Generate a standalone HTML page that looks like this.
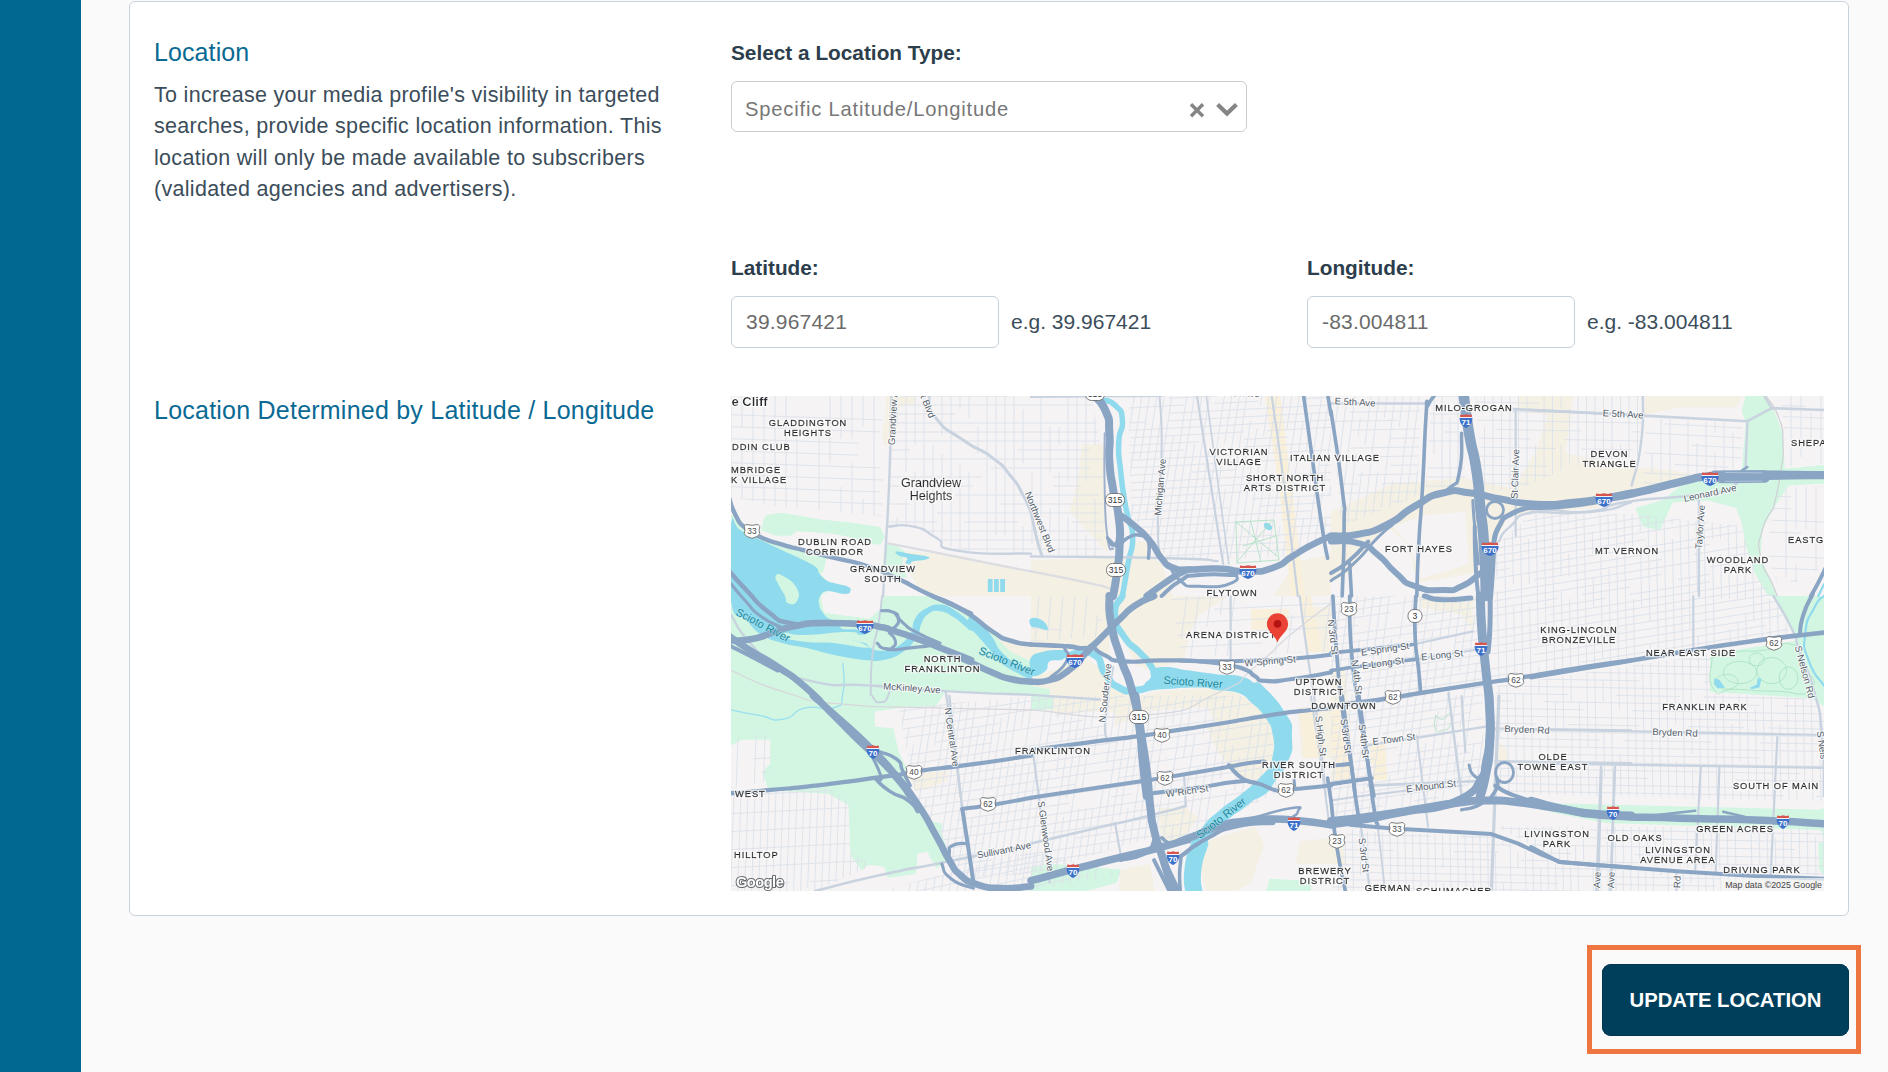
<!DOCTYPE html>
<html lang="en">
<head>
<meta charset="utf-8">
<title>Location</title>
<style>
*{box-sizing:border-box}
html,body{margin:0;padding:0}
body{width:1888px;height:1072px;overflow:hidden;background:#fafafa;font-family:"Liberation Sans",sans-serif;color:#3b4d5a;position:relative}
.sidebar{position:absolute;left:0;top:0;width:81px;height:1072px;background:#006891}
.card{position:absolute;left:129px;top:1px;width:1720px;height:915px;background:#fff;border:1px solid #c9d2dc;border-radius:6px}
h2{position:absolute;margin:0;font-weight:400;font-size:25px;color:#0a6a93;letter-spacing:.1px;white-space:nowrap;line-height:30px}
.h-loc{left:154px;top:37px}
.h-det{left:154px;top:395px;letter-spacing:.23px}
p.desc{position:absolute;left:154px;top:80px;width:540px;margin:0;font-size:21.5px;letter-spacing:.3px;line-height:31.3px;color:#3b4d5a}
label{position:absolute;font-weight:700;font-size:20.8px;color:#2c3e4c;white-space:nowrap;line-height:26px}
.select{position:absolute;left:731px;top:81px;width:516px;height:51px;border:1px solid #ccc;border-radius:6px;background:#fff}
.select span{position:absolute;left:13px;top:12px;font-size:20.2px;letter-spacing:.8px;color:#777;line-height:30px;white-space:nowrap}
.inp{position:absolute;width:268px;height:52px;border:1px solid #c6cfda;border-radius:6px;background:#fff}
.inp span{position:absolute;left:14px;top:10px;font-size:21px;letter-spacing:.2px;color:#6b6b6b;line-height:30px}
.eg{position:absolute;font-size:21px;letter-spacing:0;color:#3b4d5a;line-height:30px;white-space:nowrap}
.hl{position:absolute;left:1587px;top:945px;width:274px;height:109px;border:5px solid #ee7440}
.btn{position:absolute;left:1602px;top:964px;width:247px;height:72px;border-radius:9px;background:#003f5c;color:#fff;font-weight:700;font-size:20.3px;text-align:center;line-height:72px;box-shadow:inset 0 0 0 1px #00364f}
#map{position:absolute;left:731px;top:396px;width:1093px;height:495px;overflow:hidden;background:#f2f1f4}
</style>
</head>
<body>
<div class="sidebar"></div>
<div class="card"></div>
<h2 class="h-loc">Location</h2>
<p class="desc">To increase your media profile's visibility in targeted searches, provide specific location information. This location will only be made available to subscribers (validated agencies and advertisers).</p>
<label style="left:731px;top:40px">Select a Location Type:</label>
<div class="select"><span>Specific Latitude/Longitude</span>
<svg style="position:absolute;left:455px;top:19px" width="20" height="18" viewBox="0 0 20 18"><path d="M4 3.2 L16 15.2 M16 3.2 L4 15.2" stroke="#858585" stroke-width="3.4" fill="none"/></svg>
<svg style="position:absolute;left:482px;top:19px" width="26" height="16" viewBox="0 0 26 16"><path d="M3.6 3.4 L13 12.6 L22.4 3.4" stroke="#858585" stroke-width="4.2" fill="none" stroke-linejoin="miter"/></svg>
</div>
<label style="left:731px;top:255px">Latitude:</label>
<div class="inp" style="left:731px;top:296px"><span>39.967421</span></div>
<div class="eg" style="left:1011px;top:307px">e.g. 39.967421</div>
<label style="left:1307px;top:255px">Longitude:</label>
<div class="inp" style="left:1307px;top:296px"><span>-83.004811</span></div>
<div class="eg" style="left:1587px;top:307px">e.g. -83.004811</div>
<h2 class="h-det">Location Determined by Latitude / Longitude</h2>
<div id="map">
<svg width="1093" height="495" viewBox="0 0 1093 495" style="display:block;font-family:'Liberation Sans',sans-serif">
<rect width="1093" height="495" fill="#f5f3f4"/>
<path fill="#f4f0e4" d="M154.9 0.0 L184.7 0.0 L184.7 7.5 L167.9 11.2 L164.2 46.6 L153.0 50.4 L151.1 37.3 L154.9 18.7ZM173.5 154.9 L233.2 160.4 L300.0 177.2 L300.0 200.0 L205.2 200.0 L186.6 190.3 L173.5 167.9ZM350.4 48.5 L372.8 48.5 L374.6 93.3 L376.5 156.7 L339.2 115.7 L348.5 74.6ZM300.0 164.2 L374.6 162.3 L397.0 162.3 L419.4 160.4 L430.6 167.9 L441.8 200.0 L300.0 200.0ZM402.6 145.5 L419.4 145.5 L419.4 162.3 L397.0 162.3ZM564.9 166.0 L600.0 158.6 L600.0 200.0 L542.5 200.0ZM600.0 115.7 L661.6 87.7 L730.6 82.1 L786.6 93.3 L790.3 78.4 L805.2 56.0 L816.4 18.7 L786.6 14.9 L786.6 0.0 L842.5 0.0 L833.2 65.3 L900.0 69.0 L900.0 93.3 L805.2 115.7 L777.2 121.3 L764.2 145.5 L741.8 177.2 L685.8 186.6 L678.4 149.3 L656.0 130.6 L618.7 177.2 L600.0 186.6ZM816.8 0.0 L842.9 0.0 L837.3 28.0 L828.0 56.0 L904.5 70.9 L941.8 74.6 L967.9 80.2 L911.9 93.3 L865.3 111.9 L800.0 115.7 L800.0 70.9 L811.2 63.4 L818.7 28.0ZM913.8 0.0 L1010.8 0.0 L1005.2 11.2 L949.3 11.2 L913.8 18.7ZM300.0 200.0 L497.8 200.0 L467.9 218.7 L458.6 237.3 L453.0 263.4 L421.3 274.6 L404.5 269.0 L389.6 237.3 L382.1 218.7 L387.7 200.0ZM300.0 200.0 L378.4 200.0 L378.4 261.6 L361.6 256.0 L337.3 254.1 L300.0 261.6ZM300.0 282.1 L356.0 261.6 L370.9 274.6 L382.1 289.6 L397.0 298.9 L404.5 298.9 L404.5 315.7 L318.7 315.7 L318.7 293.3 L300.0 289.6ZM404.5 300.7 L430.6 295.1 L467.9 292.4 L497.8 293.3 L520.1 304.5 L535.1 319.4 L542.5 338.1 L542.5 360.4 L533.2 377.2 L505.2 367.9 L486.6 330.6 L475.4 310.1 L411.9 315.7 L384.0 330.6 L384.0 304.5ZM520.1 213.1 L557.5 213.1 L557.5 233.6 L520.1 233.6ZM572.4 211.2 L600.0 211.2 L600.0 256.0 L574.3 256.0ZM566.8 311.9 L600.0 311.9 L600.0 362.3 L570.5 362.3ZM600.0 274.6 L614.9 274.6 L622.4 386.6 L600.0 386.6ZM637.3 349.3 L652.2 349.3 L654.1 367.9 L639.2 367.9ZM687.7 200.0 L741.8 200.0 L741.8 233.6 L730.6 218.7 L689.6 211.2ZM764.2 345.5 L773.5 349.3 L779.1 367.9 L767.9 367.9ZM177.2 378.4 L216.4 374.6 L216.4 384.0 L201.5 391.4 L184.7 395.1ZM324.3 300.0 L514.6 300.0 L514.6 318.7 L486.6 324.3 L475.4 311.2 L411.9 311.2 L324.3 318.7ZM475.4 329.9 L540.7 320.5 L548.1 346.6 L538.8 370.9 L520.1 389.6 L497.8 369.0 L486.6 356.0ZM426.9 411.9 L454.9 411.9 L467.9 421.3 L449.3 445.5 L430.6 445.5 L428.7 430.6ZM475.4 445.5 L523.9 430.6 L533.2 449.3 L520.1 486.6 L505.2 495.0 L475.4 495.0 L467.9 467.9ZM566.8 311.2 L600.0 311.2 L600.0 361.6 L570.5 361.6ZM568.7 445.5 L600.0 441.8 L600.0 467.9 L564.9 467.9ZM389.6 473.5 L419.4 467.9 L423.1 495.0 L387.7 495.0ZM641.0 346.6 L654.1 346.6 L656.0 384.0 L642.9 384.0ZM600.0 318.7 L609.3 318.7 L611.2 356.0 L600.0 356.0ZM600.0 449.3 L611.2 447.4 L614.9 467.9 L600.0 467.9Z"/>
<path fill="#f9f0db" d="M534.1 0.0 L549.1 0.0 L561.2 93.3 L573.3 200.0 L560.3 200.0 L548.1 93.3ZM520.1 213.1 L557.5 213.1 L557.5 233.6 L520.1 233.6ZM568.7 200.0 L579.9 200.0 L591.0 256.0 L578.0 256.0ZM568.7 315.7 L587.3 313.8 L594.8 360.4 L574.3 362.3ZM600.0 304.5 L613.1 304.5 L620.5 386.6 L605.6 386.6ZM641.0 346.6 L654.1 346.6 L656.0 384.0 L642.9 384.0ZM600.0 318.7 L609.3 318.7 L611.2 356.0 L600.0 356.0Z"/>
<path fill="#f5f3f4" d="M661.6 130.6 L693.3 119.4 L734.3 115.7 L738.1 167.9 L689.6 182.8 L678.4 149.3ZM600.0 0.0 L600.0 0.0Z"/>
<path fill="#d2f6e2" d="M35.8 118.9 L50.7 116.7 L89.6 123.4 L119.4 126.4 L149.3 130.9 L153.7 141.3 L149.3 148.8 L134.3 147.3 L119.4 141.3 L104.5 138.3 L89.6 136.8 L65.7 135.3 L59.7 139.8 L44.8 139.8 L29.9 133.9 L32.8 123.4ZM4.5 120.4 L14.9 133.9 L29.9 142.8 L52.2 150.3 L74.6 156.2 L95.5 160.7 L92.5 175.6 L83.6 181.6 L83.6 208.5 L89.6 226.4 L0.0 238.3 L0.0 118.9ZM88.1 177.1 L95.5 184.6 L104.5 187.6 L116.4 190.6 L119.4 195.0 L113.4 198.0 L97.0 195.0 L89.6 199.5 L88.1 208.5 L92.5 217.4 L100.0 223.4 L110.4 224.9 L89.6 226.4 L80.6 208.5 L80.6 181.6ZM153.7 147.3 L164.2 148.8 L173.1 154.7 L171.6 169.7 L176.1 181.6 L153.7 181.6 L152.2 166.7ZM0.0 193.6 L149.3 229.4 L240.0 253.3 L240.0 264.0 L0.0 264.0ZM152.2 214.4 L179.1 211.5 L209.0 208.5 L240.0 220.4 L240.0 253.3 L149.3 232.4ZM0.0 200.0 L89.6 200.0 L93.3 216.8 L138.1 222.4 L149.3 213.1 L153.0 200.0 L201.5 200.0 L233.2 214.9 L261.2 235.4 L279.9 244.8 L300.0 248.5 L300.0 298.9 L214.6 295.1 L205.2 310.1 L167.9 311.9 L143.7 315.7 L143.7 330.6 L162.3 332.5 L167.9 356.7 L175.4 371.6 L175.4 382.8 L188.4 412.7 L194.0 423.9 L210.8 427.6 L210.8 438.8 L220.1 463.1 L205.2 472.4 L195.9 455.6 L186.6 457.5 L184.7 478.0 L156.7 481.7 L153.0 470.5 L138.1 468.7 L130.6 474.3 L119.4 459.3 L117.5 409.0 L97.0 397.8 L37.3 394.0 L31.7 375.4 L39.2 367.9 L39.2 343.7 L11.2 343.7 L0.0 349.3ZM300.0 289.6 L318.7 293.3 L318.7 311.9 L300.0 311.9ZM1014.6 0.0 L1035.1 0.0 L1042.5 13.1 L1051.9 37.3 L1053.7 72.8 L1092.9 69.0 L1092.9 87.7 L1057.5 89.6 L1042.5 111.9 L1031.3 134.3 L1029.5 160.4 L1040.7 186.6 L1046.3 200.0 L1036.9 200.0 L1023.9 177.2 L1014.6 149.3 L1010.8 126.9 L1005.2 111.9 L977.2 104.5 L941.8 106.3 L928.7 134.3 L911.9 130.6 L904.5 111.9 L930.6 104.5 L953.0 87.7 L967.9 80.2 L1010.8 74.6 L1014.6 28.0 L1010.8 14.9ZM979.1 257.8 L1064.9 244.8 L1085.4 302.6 L979.1 296.1ZM1042.5 200.0 L1092.9 200.0 L1092.9 310.1 L1083.6 304.5 L1066.8 246.6 L1050.0 214.9ZM300.0 471.6 L324.3 467.9 L389.6 473.5 L385.8 486.6 L356.0 495.0 L300.0 495.0ZM300.0 300.0 L322.4 300.0 L322.4 313.1 L300.0 314.9ZM820.1 408.2 L900.0 411.9 L900.0 426.9 L861.2 421.3 L820.1 413.8ZM818.7 407.3 L1092.9 413.8 L1092.9 434.3 L874.6 426.9 L818.7 415.7ZM1083.6 415.7 L1092.9 411.9 L1092.9 441.8 L1087.3 430.6ZM1087.3 447.4 L1092.9 445.5 L1092.9 479.1 L1088.2 473.5ZM538.8 482.8 L579.9 484.7 L579.9 495.0 L535.1 495.0Z"/>
<path fill="#f4f0e4" d="M233.2 220.5 L261.2 237.3 L279.9 256.0 L300.0 265.3 L300.0 250.4 L270.5 244.8 L242.5 224.3Z"/>
<path fill="#f5f3f4" d="M89.6 200.0 L149.3 200.0 L149.3 213.1 L138.1 222.4 L93.3 216.8Z"/>
<clipPath id="g1"><path d="M168 312 L300 300 L404 300 L425 440 L300 478 L235 482 L205 440 L186 408Z"/></clipPath>
<path clip-path="url(#g1)" d="M134.5 295.0L129.2 331.0M129.2 331.0L121.1 385.0M121.1 385.0L118.4 403.0M118.4 403.0L115.7 421.0M115.7 421.0L113.0 439.0M109.0 466.0L105.9 487.0M129.4 376.0L126.8 394.0M126.8 394.0L124.1 412.0M148.5 295.0L144.5 322.0M144.5 322.0L140.5 349.0M140.5 349.0L135.1 385.0M135.1 385.0L131.1 412.0M131.1 412.0L127.0 439.0M127.0 439.0L124.3 457.0M124.3 457.0L120.3 484.0M155.5 295.0L147.5 349.0M147.5 349.0L139.4 403.0M139.4 403.0L131.3 457.0M131.3 457.0L127.3 484.0M158.5 322.0L153.1 358.0M153.1 358.0L147.8 394.0M147.8 394.0L142.4 430.0M142.4 430.0L139.7 448.0M139.7 448.0L133.9 487.0M169.5 295.0L164.2 331.0M164.2 331.0L156.1 385.0M156.1 385.0L153.4 403.0M153.4 403.0L148.0 439.0M148.0 439.0L142.6 475.0M176.5 295.0L173.9 313.0M173.9 313.0L165.8 367.0M163.1 385.0L157.7 421.0M157.7 421.0L149.6 475.0M149.6 475.0L147.9 487.0M178.2 331.0L170.1 385.0M170.1 385.0L167.4 403.0M167.4 403.0L163.4 430.0M163.4 430.0L159.3 457.0M159.3 457.0L154.9 487.0M182.5 349.0L174.4 403.0M174.4 403.0L169.0 439.0M169.0 439.0L161.9 487.0M197.5 295.0L192.2 331.0M192.2 331.0L186.8 367.0M186.8 367.0L178.7 421.0M174.7 448.0L170.6 475.0M204.5 295.0L200.5 322.0M200.5 322.0L197.8 340.0M197.8 340.0L192.4 376.0M192.4 376.0L187.1 412.0M187.1 412.0L184.4 430.0M184.4 430.0L176.3 484.0M211.5 295.0L203.5 349.0M195.4 403.0L192.7 421.0M192.7 421.0L184.6 475.0M184.6 475.0L182.9 487.0M215.9 313.0L211.8 340.0M211.8 340.0L206.4 376.0M206.4 376.0L203.8 394.0M203.8 394.0L195.7 448.0M195.7 448.0L190.3 484.0M225.5 295.0L220.2 331.0M220.2 331.0L217.5 349.0M217.5 349.0L209.4 403.0M204.0 439.0L201.3 457.0M201.3 457.0L196.9 487.0M232.5 295.0L228.5 322.0M228.5 322.0L224.5 349.0M224.5 349.0L219.1 385.0M219.1 385.0L216.4 403.0M216.4 403.0L211.0 439.0M211.0 439.0L208.3 457.0M208.3 457.0L203.9 487.0M239.5 295.0L235.5 322.0M235.5 322.0L231.5 349.0M231.5 349.0L226.1 385.0M226.1 385.0L222.1 412.0M222.1 412.0L214.0 466.0M214.0 466.0L210.9 487.0M246.5 295.0L238.5 349.0M238.5 349.0L235.8 367.0M235.8 367.0L230.4 403.0M230.4 403.0L226.4 430.0M226.4 430.0L221.0 466.0M221.0 466.0L217.9 487.0M248.2 331.0L245.5 349.0M245.5 349.0L241.4 376.0M241.4 376.0L233.4 430.0M233.4 430.0L230.7 448.0M230.7 448.0L225.3 484.0M260.5 295.0L257.9 313.0M257.9 313.0L255.2 331.0M255.2 331.0L251.1 358.0M251.1 358.0L247.1 385.0M241.7 421.0L233.6 475.0M233.6 475.0L231.9 487.0M267.5 295.0L263.5 322.0M263.5 322.0L260.8 340.0M260.8 340.0L252.8 394.0M252.8 394.0L248.7 421.0M248.7 421.0L240.6 475.0M240.6 475.0L238.9 487.0M270.5 322.0L267.8 340.0M267.8 340.0L263.8 367.0M263.8 367.0L259.8 394.0M255.7 421.0L251.7 448.0M251.7 448.0L247.6 475.0M247.6 475.0L245.9 487.0M281.5 295.0L273.5 349.0M273.5 349.0L270.8 367.0M270.8 367.0L265.4 403.0M265.4 403.0L257.3 457.0M257.3 457.0L253.3 484.0M288.5 295.0L285.9 313.0M285.9 313.0L281.8 340.0M281.8 340.0L277.8 367.0M277.8 367.0L269.7 421.0M269.7 421.0L267.0 439.0M267.0 439.0L261.6 475.0M261.6 475.0L259.9 487.0M295.5 295.0L292.9 313.0M292.9 313.0L290.2 331.0M284.8 367.0L282.1 385.0M282.1 385.0L279.4 403.0M279.4 403.0L276.7 421.0M276.7 421.0L272.7 448.0M272.7 448.0L266.9 487.0M302.5 295.0L294.5 349.0M294.5 349.0L290.4 376.0M290.4 376.0L285.1 412.0M285.1 412.0L281.0 439.0M281.0 439.0L277.0 466.0M277.0 466.0L273.9 487.0M309.5 295.0L306.9 313.0M298.8 367.0L293.4 403.0M293.4 403.0L289.4 430.0M289.4 430.0L284.0 466.0M284.0 466.0L280.9 487.0M316.5 295.0L312.5 322.0M312.5 322.0L309.8 340.0M309.8 340.0L301.8 394.0M301.8 394.0L297.7 421.0M297.7 421.0L289.6 475.0M289.6 475.0L287.9 487.0M323.5 295.0L319.5 322.0M319.5 322.0L316.8 340.0M316.8 340.0L314.1 358.0M314.1 358.0L306.1 412.0M306.1 412.0L303.4 430.0M303.4 430.0L298.0 466.0M298.0 466.0L295.3 484.0M330.5 295.0L326.5 322.0M318.4 376.0L314.4 403.0M314.4 403.0L310.4 430.0M310.4 430.0L305.0 466.0M305.0 466.0L301.9 487.0M337.5 295.0L334.9 313.0M334.9 313.0L330.8 340.0M330.8 340.0L328.1 358.0M328.1 358.0L325.4 376.0M316.0 439.0L313.3 457.0M313.3 457.0L308.9 487.0M344.5 295.0L336.5 349.0M336.5 349.0L331.1 385.0M331.1 385.0L328.4 403.0M328.4 403.0L324.4 430.0M324.4 430.0L320.3 457.0M320.3 457.0L316.3 484.0M351.5 295.0L346.2 331.0M346.2 331.0L342.1 358.0M342.1 358.0L338.1 385.0M338.1 385.0L335.4 403.0M332.7 421.0L328.7 448.0M328.7 448.0L324.6 475.0M324.6 475.0L322.9 487.0M358.5 295.0L350.5 349.0M350.5 349.0L342.4 403.0M342.4 403.0L337.0 439.0M337.0 439.0L333.0 466.0M333.0 466.0L329.9 487.0M365.5 295.0L360.2 331.0M356.1 358.0L350.8 394.0M348.1 412.0L340.0 466.0M340.0 466.0L336.9 487.0M367.2 331.0L363.1 358.0M355.1 412.0L349.7 448.0M349.7 448.0L344.3 484.0M379.5 295.0L374.2 331.0M362.1 412.0L356.7 448.0M356.7 448.0L352.6 475.0M386.5 295.0L383.9 313.0M383.9 313.0L381.2 331.0M381.2 331.0L375.8 367.0M371.8 394.0L367.7 421.0M367.7 421.0L359.6 475.0M359.6 475.0L357.9 487.0M389.5 322.0L381.4 376.0M381.4 376.0L377.4 403.0M377.4 403.0L374.7 421.0M370.7 448.0L368.0 466.0M368.0 466.0L364.9 487.0M400.5 295.0L392.5 349.0M392.5 349.0L389.8 367.0M389.8 367.0L385.8 394.0M385.8 394.0L383.1 412.0M383.1 412.0L380.4 430.0M380.4 430.0L377.7 448.0M377.7 448.0L375.0 466.0M375.0 466.0L371.9 487.0M407.5 295.0L404.9 313.0M404.9 313.0L400.8 340.0M400.8 340.0L396.8 367.0M396.8 367.0L388.7 421.0M380.6 475.0L378.9 487.0M410.5 322.0L406.5 349.0M406.5 349.0L401.1 385.0M397.1 412.0L394.4 430.0M394.4 430.0L391.7 448.0M391.7 448.0L385.9 487.0M421.5 295.0L416.2 331.0M416.2 331.0L408.1 385.0M408.1 385.0L404.1 412.0M404.1 412.0L401.4 430.0M401.4 430.0L398.7 448.0M398.7 448.0L396.0 466.0M396.0 466.0L392.9 487.0M428.5 295.0L420.5 349.0M416.4 376.0L413.8 394.0M413.8 394.0L408.4 430.0M408.4 430.0L404.3 457.0M404.3 457.0L399.9 487.0M435.5 295.0L430.2 331.0M430.2 331.0L422.1 385.0M418.1 412.0L410.0 466.0M410.0 466.0L406.9 487.0M442.5 295.0L438.5 322.0M438.5 322.0L430.4 376.0M425.1 412.0L419.7 448.0M419.7 448.0L417.0 466.0M417.0 466.0L413.9 487.0M449.5 295.0L444.2 331.0M444.2 331.0L441.5 349.0M441.5 349.0L438.8 367.0M438.8 367.0L430.7 421.0M430.7 421.0L428.0 439.0M428.0 439.0L425.3 457.0M425.3 457.0L420.9 487.0M456.5 295.0L452.5 322.0M452.5 322.0L447.1 358.0M447.1 358.0L441.8 394.0M441.8 394.0L436.4 430.0M436.4 430.0L428.3 484.0M163.0 253.3L219.0 245.0M219.0 245.0L247.0 240.8M247.0 240.8L268.0 237.6M268.0 237.6L324.0 229.3M324.0 229.3L352.0 225.1M352.0 225.1L394.0 218.8M394.0 218.8L422.0 214.6M422.0 214.6L430.0 213.4M163.0 262.3L205.0 256.1M205.0 256.1L247.0 249.8M247.0 249.8L275.0 245.6M275.0 245.6L331.0 237.2M359.0 233.0L415.0 224.7M415.0 224.7L430.0 222.4M163.0 271.3L219.0 263.0M219.0 263.0L247.0 258.8M247.0 258.8L275.0 254.6M275.0 254.6L296.0 251.5M296.0 251.5L338.0 245.2M338.0 245.2L366.0 241.0M366.0 241.0L422.0 232.6M422.0 232.6L430.0 231.4M163.0 280.3L205.0 274.1M205.0 274.1L261.0 265.7M261.0 265.7L303.0 259.4M331.0 255.2L359.0 251.0M359.0 251.0L415.0 242.7M415.0 242.7L430.0 240.4M163.0 289.3L184.0 286.2M184.0 286.2L240.0 277.8M240.0 277.8L296.0 269.5M352.0 261.1L408.0 252.7M408.0 252.7L430.0 249.4M163.0 298.3L191.0 294.2M191.0 294.2L219.0 290.0M219.0 290.0L240.0 286.8M317.0 275.3L345.0 271.1M345.0 271.1L366.0 268.0M366.0 268.0L408.0 261.7M408.0 261.7L430.0 258.4M163.0 307.3L219.0 299.0M240.0 295.8L282.0 289.6M282.0 289.6L310.0 285.4M310.0 285.4L338.0 281.2M359.0 278.0L401.0 271.8M401.0 271.8L430.0 267.4M163.0 316.3L191.0 312.2M191.0 312.2L219.0 308.0M219.0 308.0L240.0 304.8M282.0 298.6L310.0 294.4M366.0 286.0L394.0 281.8M394.0 281.8L430.0 276.4M163.0 325.3L184.0 322.2M184.0 322.2L240.0 313.8M240.0 313.8L296.0 305.5M296.0 305.5L338.0 299.2M338.0 299.2L359.0 296.0M359.0 296.0L387.0 291.9M387.0 291.9L415.0 287.7M415.0 287.7L430.0 285.4M163.0 334.3L205.0 328.1M205.0 328.1L261.0 319.7M261.0 319.7L289.0 315.5M289.0 315.5L310.0 312.4M310.0 312.4L338.0 308.2M338.0 308.2L359.0 305.0M359.0 305.0L387.0 300.9M387.0 300.9L408.0 297.7M408.0 297.7L430.0 294.4M163.0 343.3L205.0 337.1M205.0 337.1L226.0 333.9M226.0 333.9L268.0 327.6M324.0 319.3L380.0 310.9M380.0 310.9L422.0 304.6M205.0 346.1L261.0 337.7M261.0 337.7L282.0 334.6M282.0 334.6L310.0 330.4M310.0 330.4L352.0 324.1M408.0 315.7L430.0 312.4M163.0 361.3L219.0 353.0M219.0 353.0L261.0 346.7M317.0 338.3L373.0 330.0M163.0 370.3L184.0 367.2M184.0 367.2L205.0 364.1M205.0 364.1L226.0 360.9M226.0 360.9L268.0 354.6M268.0 354.6L310.0 348.4M310.0 348.4L331.0 345.2M331.0 345.2L373.0 339.0M163.0 379.3L191.0 375.2M191.0 375.2L247.0 366.8M247.0 366.8L303.0 358.4M303.0 358.4L359.0 350.0M359.0 350.0L387.0 345.9M415.0 341.7L430.0 339.4M163.0 388.3L191.0 384.2M191.0 384.2L233.0 377.9M233.0 377.9L289.0 369.5M289.0 369.5L310.0 366.4M310.0 366.4L366.0 358.0M366.0 358.0L394.0 353.8M394.0 353.8L415.0 350.7M415.0 350.7L430.0 348.4M163.0 397.3L219.0 389.0M219.0 389.0L240.0 385.8M240.0 385.8L261.0 382.7M261.0 382.7L317.0 374.3M317.0 374.3L373.0 366.0M373.0 366.0L401.0 361.8M401.0 361.8L429.0 357.6M163.0 406.3L184.0 403.2M184.0 403.2L226.0 396.9M226.0 396.9L268.0 390.6M268.0 390.6L310.0 384.4M310.0 384.4L338.0 380.2M338.0 380.2L366.0 376.0M366.0 376.0L394.0 371.8M394.0 371.8L430.0 366.4M163.0 415.3L191.0 411.2M191.0 411.2L219.0 407.0M219.0 407.0L240.0 403.8M240.0 403.8L261.0 400.7M261.0 400.7L317.0 392.3M317.0 392.3L345.0 388.1M387.0 381.9L429.0 375.6M163.0 424.3L184.0 421.2M184.0 421.2L212.0 417.0M212.0 417.0L254.0 410.7M254.0 410.7L282.0 406.6M282.0 406.6L324.0 400.3M324.0 400.3L345.0 397.1M345.0 397.1L387.0 390.9M387.0 390.9L429.0 384.6M163.0 433.3L184.0 430.2M226.0 423.9L254.0 419.7M254.0 419.7L296.0 413.5M296.0 413.5L338.0 407.2M380.0 400.9L401.0 397.8M163.0 442.3L184.0 439.2M184.0 439.2L212.0 435.0M212.0 435.0L233.0 431.9M233.0 431.9L289.0 423.5M289.0 423.5L345.0 415.1M345.0 415.1L387.0 408.9M387.0 408.9L408.0 405.7M408.0 405.7L430.0 402.4M163.0 451.3L184.0 448.2M184.0 448.2L226.0 441.9M226.0 441.9L282.0 433.6M282.0 433.6L310.0 429.4M310.0 429.4L366.0 421.0M366.0 421.0L422.0 412.6M422.0 412.6L430.0 411.4M163.0 460.3L205.0 454.1M205.0 454.1L233.0 449.9M233.0 449.9L254.0 446.7M310.0 438.4L352.0 432.1M352.0 432.1L380.0 427.9M380.0 427.9L422.0 421.6M422.0 421.6L430.0 420.4M163.0 469.3L184.0 466.2M184.0 466.2L212.0 462.0M212.0 462.0L233.0 458.9M233.0 458.9L289.0 450.5M345.0 442.1L373.0 438.0M373.0 438.0L401.0 433.8M401.0 433.8L429.0 429.6M163.0 478.3L191.0 474.2M191.0 474.2L212.0 471.0M212.0 471.0L240.0 466.8M240.0 466.8L261.0 463.7M289.0 459.5L310.0 456.4M310.0 456.4L352.0 450.1M352.0 450.1L408.0 441.7M408.0 441.7L430.0 438.4M163.0 487.3L205.0 481.1M205.0 481.1L261.0 472.7M261.0 472.7L303.0 466.4M303.0 466.4L359.0 458.0M359.0 458.0L380.0 454.9M380.0 454.9L430.0 447.4M163.0 496.3L219.0 488.0M219.0 488.0L275.0 479.6M275.0 479.6L331.0 471.2M331.0 471.2L352.0 468.1M352.0 468.1L408.0 459.7M408.0 459.7L430.0 456.4M212.0 498.0L254.0 491.7M275.0 488.6L331.0 480.2M359.0 476.0L380.0 472.9M380.0 472.9L401.0 469.8M401.0 469.8L430.0 465.4M163.0 514.3L191.0 510.2M219.0 506.0L261.0 499.7M261.0 499.7L303.0 493.4M303.0 493.4L345.0 487.1M345.0 487.1L401.0 478.8M401.0 478.8L430.0 474.4M163.0 523.3L205.0 517.1M205.0 517.1L233.0 512.9M233.0 512.9L254.0 509.7M254.0 509.7L310.0 501.4M310.0 501.4L352.0 495.1M352.0 495.1L408.0 486.7M408.0 486.7L430.0 483.4" fill="none" stroke="#dde2ea" stroke-width="0.9"/>
<clipPath id="g2"><path d="M412 300 L540 300 L548 395 L500 420 L430 450 L424 434Z"/></clipPath>
<path clip-path="url(#g2)" d="M382.3 295.0L379.0 317.0M379.0 317.0L372.5 361.0M372.5 361.0L362.6 427.0M362.6 427.0L359.3 449.0M359.3 449.0L358.4 455.0M390.3 295.0L383.8 339.0M383.8 339.0L377.2 383.0M377.2 383.0L370.6 427.0M370.6 427.0L367.3 449.0M367.3 449.0L366.4 455.0M398.3 295.0L395.0 317.0M395.0 317.0L388.5 361.0M388.5 361.0L381.9 405.0M381.9 405.0L378.6 427.0M378.6 427.0L374.4 455.0M406.3 295.0L396.5 361.0M396.5 361.0L389.9 405.0M389.9 405.0L385.0 438.0M414.3 295.0L411.0 317.0M404.5 361.0L397.9 405.0M397.9 405.0L390.4 455.0M422.3 295.0L417.4 328.0M417.4 328.0L407.5 394.0M407.5 394.0L404.2 416.0M404.2 416.0L399.3 449.0M430.3 295.0L425.4 328.0M425.4 328.0L418.8 372.0M418.8 372.0L412.2 416.0M412.2 416.0L409.0 438.0M409.0 438.0L406.4 455.0M438.3 295.0L428.5 361.0M428.5 361.0L418.6 427.0M415.3 449.0L414.4 455.0M446.3 295.0L441.4 328.0M433.2 383.0L428.2 416.0M428.2 416.0L422.4 455.0M454.3 295.0L449.4 328.0M449.4 328.0L446.1 350.0M446.1 350.0L442.8 372.0M442.8 372.0L433.0 438.0M433.0 438.0L430.4 455.0M462.3 295.0L452.5 361.0M442.6 427.0L438.4 455.0M470.3 295.0L467.0 317.0M463.8 339.0L457.2 383.0M457.2 383.0L450.6 427.0M450.6 427.0L446.4 455.0M478.3 295.0L471.8 339.0M466.8 372.0L463.5 394.0M463.5 394.0L458.6 427.0M458.6 427.0L454.4 455.0M486.3 295.0L479.8 339.0M479.8 339.0L469.9 405.0M469.9 405.0L465.0 438.0M465.0 438.0L462.4 455.0M494.3 295.0L491.0 317.0M491.0 317.0L481.2 383.0M481.2 383.0L476.2 416.0M476.2 416.0L470.4 455.0M502.3 295.0L492.5 361.0M492.5 361.0L489.2 383.0M481.0 438.0L478.4 455.0M510.3 295.0L505.4 328.0M502.1 350.0L498.8 372.0M495.5 394.0L489.0 438.0M489.0 438.0L486.4 455.0M508.5 361.0L503.5 394.0M500.2 416.0L497.0 438.0M497.0 438.0L494.4 455.0M521.4 328.0L516.5 361.0M516.5 361.0L509.9 405.0M509.9 405.0L506.6 427.0M534.3 295.0L527.8 339.0M527.8 339.0L517.9 405.0M517.9 405.0L514.6 427.0M514.6 427.0L511.3 449.0M511.3 449.0L510.4 455.0M542.3 295.0L539.0 317.0M539.0 317.0L534.1 350.0M534.1 350.0L530.8 372.0M530.8 372.0L524.2 416.0M524.2 416.0L521.0 438.0M521.0 438.0L518.4 455.0M537.2 383.0L532.2 416.0M532.2 416.0L526.4 455.0M558.3 295.0L551.8 339.0M551.8 339.0L546.8 372.0M546.8 372.0L541.9 405.0M541.9 405.0L537.0 438.0M537.0 438.0L534.4 455.0M566.3 295.0L563.0 317.0M563.0 317.0L559.8 339.0M553.2 383.0L543.3 449.0M543.3 449.0L542.4 455.0M574.3 295.0L571.0 317.0M571.0 317.0L564.5 361.0M564.5 361.0L559.5 394.0M559.5 394.0L554.6 427.0M554.6 427.0L550.4 455.0M407.0 269.4L431.0 265.8M431.0 265.8L479.0 258.7M479.0 258.7L543.0 249.1M543.0 249.1L553.0 247.6M407.0 280.4L471.0 270.9M471.0 270.9L519.0 263.7M519.0 263.7L551.0 258.9M407.0 291.4L439.0 286.6M439.0 286.6L487.0 279.5M487.0 279.5L519.0 274.7M519.0 274.7L551.0 269.9M407.0 302.4L455.0 295.2M455.0 295.2L503.0 288.1M503.0 288.1L551.0 280.9M407.0 313.4L431.0 309.8M431.0 309.8L455.0 306.2M455.0 306.2L487.0 301.5M487.0 301.5L535.0 294.3M535.0 294.3L553.0 291.6M407.0 324.4L431.0 320.8M431.0 320.8L455.0 317.2M455.0 317.2L519.0 307.7M519.0 307.7L543.0 304.1M543.0 304.1L553.0 302.6M407.0 335.4L455.0 328.2M455.0 328.2L487.0 323.5M407.0 346.4L439.0 341.6M439.0 341.6L503.0 332.1M503.0 332.1L553.0 324.6M407.0 357.4L439.0 352.6M439.0 352.6L463.0 349.1M463.0 349.1L511.0 341.9M511.0 341.9L535.0 338.3M535.0 338.3L553.0 335.6M407.0 368.4L439.0 363.6M439.0 363.6L503.0 354.1M503.0 354.1L527.0 350.5M527.0 350.5L553.0 346.6M407.0 379.4L439.0 374.6M439.0 374.6L487.0 367.5M487.0 367.5L551.0 357.9M431.0 386.8L463.0 382.1M463.0 382.1L495.0 377.3M495.0 377.3L519.0 373.7M519.0 373.7L553.0 368.6M407.0 401.4L471.0 391.9M471.0 391.9L519.0 384.7M519.0 384.7L553.0 379.6M407.0 412.4L471.0 402.9M471.0 402.9L503.0 398.1M503.0 398.1L527.0 394.5M527.0 394.5L553.0 390.6M407.0 423.4L455.0 416.2M519.0 406.7L543.0 403.1M543.0 403.1L553.0 401.6M407.0 434.4L455.0 427.2M455.0 427.2L479.0 423.7M479.0 423.7L543.0 414.1M543.0 414.1L553.0 412.6M407.0 445.4L471.0 435.9M503.0 431.1L527.0 427.5M527.0 427.5L553.0 423.6M407.0 456.4L439.0 451.6M439.0 451.6L471.0 446.9M471.0 446.9L535.0 437.3M535.0 437.3L553.0 434.6M407.0 467.4L439.0 462.6M439.0 462.6L503.0 453.1M503.0 453.1L535.0 448.3M535.0 448.3L553.0 445.6M407.0 478.4L471.0 468.9M535.0 459.3L553.0 456.6" fill="none" stroke="#dde2ea" stroke-width="0.9"/>
<clipPath id="g3"><path d="M0 398 L93 389 L117 404 L119 455 L140 470 L84 495 L0 495Z"/></clipPath>
<path clip-path="url(#g3)" d="M-10.5 384.0L-13.0 456.0M-13.0 456.0L-14.6 500.0M-3.5 384.0L-4.8 420.0M-4.8 420.0L-7.3 492.0M-7.3 492.0L-7.6 500.0M3.5 384.0L2.2 420.0M2.2 420.0L-0.3 492.0M-0.3 492.0L-0.6 500.0M10.5 384.0L8.0 456.0M8.0 456.0L6.7 492.0M6.7 492.0L6.4 500.0M17.5 384.0L15.0 456.0M15.0 456.0L13.7 492.0M13.7 492.0L13.4 500.0M24.5 384.0L20.7 492.0M20.7 492.0L20.4 500.0M31.5 384.0L27.7 492.0M27.7 492.0L27.4 500.0M38.5 384.0L37.2 420.0M37.2 420.0L34.7 492.0M34.7 492.0L34.4 500.0M45.5 384.0L41.7 492.0M41.7 492.0L41.4 500.0M52.5 384.0L50.0 456.0M50.0 456.0L48.4 500.0M59.5 384.0L58.2 420.0M58.2 420.0L56.3 474.0M56.3 474.0L55.4 500.0M66.5 384.0L65.2 420.0M65.2 420.0L62.7 492.0M62.7 492.0L62.4 500.0M73.5 384.0L69.7 492.0M69.7 492.0L69.4 500.0M80.5 384.0L79.2 420.0M79.2 420.0L76.7 492.0M87.5 384.0L86.2 420.0M86.2 420.0L83.7 492.0M83.7 492.0L83.4 500.0M94.5 384.0L90.7 492.0M101.5 384.0L97.7 492.0M97.7 492.0L97.4 500.0M108.5 384.0L106.0 456.0M106.0 456.0L104.4 500.0M115.5 384.0L113.0 456.0M113.0 456.0L111.7 492.0M111.7 492.0L111.4 500.0M122.5 384.0L118.7 492.0M118.7 492.0L118.4 500.0M129.5 384.0L127.0 456.0M127.0 456.0L125.4 500.0M136.5 384.0L134.0 456.0M134.0 456.0L132.4 500.0M143.5 384.0L142.2 420.0M142.2 420.0L141.0 456.0M141.0 456.0L139.4 500.0M150.5 384.0L149.2 420.0M148.0 456.0L146.4 500.0M-5.0 363.9L51.0 361.0M51.0 361.0L72.0 359.9M72.0 359.9L128.0 357.0M128.0 357.0L145.0 356.1M-5.0 381.9L51.0 379.0M51.0 379.0L79.0 377.5M79.0 377.5L107.0 376.1M107.0 376.1L145.0 374.1M-5.0 399.9L16.0 398.8M16.0 398.8L44.0 397.4M44.0 397.4L86.0 395.2M86.0 395.2L114.0 393.7M-5.0 417.9L16.0 416.8M16.0 416.8L37.0 415.7M37.0 415.7L93.0 412.8M93.0 412.8L145.0 410.1M-5.0 435.9L16.0 434.8M16.0 434.8L44.0 433.4M44.0 433.4L100.0 430.4M100.0 430.4L121.0 429.3M121.0 429.3L145.0 428.1M-5.0 453.9L16.0 452.8M16.0 452.8L37.0 451.7M37.0 451.7L58.0 450.6M58.0 450.6L79.0 449.5M79.0 449.5L100.0 448.4M100.0 448.4L121.0 447.3M121.0 447.3L145.0 446.1M-5.0 471.9L23.0 470.5M23.0 470.5L65.0 468.3M65.0 468.3L93.0 466.8M93.0 466.8L114.0 465.7M114.0 465.7L145.0 464.1M-5.0 489.9L37.0 487.7M37.0 487.7L58.0 486.6M79.0 485.5L100.0 484.4M100.0 484.4L142.0 482.2M-5.0 507.9L23.0 506.5M23.0 506.5L79.0 503.5M79.0 503.5L121.0 501.3M121.0 501.3L145.0 500.1" fill="none" stroke="#dde2ea" stroke-width="0.9"/>
<clipPath id="g4"><path d="M12 340 L40 338 L38 385 L0 392 L0 345Z"/></clipPath>
<path clip-path="url(#g4)" d="M-12.2 375.0L-12.9 397.0M-1.7 333.0L-3.2 375.0M-3.2 375.0L-3.9 397.0M7.3 333.0L5.1 397.0M14.3 389.0L14.1 397.0M25.3 333.0L23.3 389.0M23.3 389.0L23.1 397.0M34.3 333.0L32.3 389.0M32.3 389.0L32.1 397.0M43.3 333.0L41.1 397.0M-5.0 322.2L31.0 320.3M31.0 320.3L45.0 319.5M22.0 362.8L45.0 361.5M31.0 376.3L45.0 375.5M-5.0 392.2L22.0 390.8M22.0 390.8L45.0 389.5M-5.0 406.2L31.0 404.3M31.0 404.3L45.0 403.5" fill="none" stroke="#dde2ea" stroke-width="0.9"/>
<clipPath id="g5"><path d="M150 495 L300 455 L395 478 L300 495Z"/></clipPath>
<path clip-path="url(#g5)" d="M136.8 450.0L133.8 470.0M133.8 470.0L129.3 500.0M144.8 450.0L138.8 490.0M138.8 490.0L137.3 500.0M152.8 450.0L145.3 500.0M160.8 450.0L154.8 490.0M154.8 490.0L153.3 500.0M168.8 450.0L162.8 490.0M162.8 490.0L161.3 500.0M176.8 450.0L172.3 480.0M184.8 450.0L178.8 490.0M178.8 490.0L177.3 500.0M192.8 450.0L188.3 480.0M188.3 480.0L185.3 500.0M200.8 450.0L197.8 470.0M197.8 470.0L193.3 500.0M208.8 450.0L204.3 480.0M204.3 480.0L201.3 500.0M213.8 470.0L209.3 500.0M224.8 450.0L217.3 500.0M232.8 450.0L228.3 480.0M228.3 480.0L225.3 500.0M240.8 450.0L233.3 500.0M248.8 450.0L244.3 480.0M244.3 480.0L241.3 500.0M256.8 450.0L252.3 480.0M264.8 450.0L258.8 490.0M258.8 490.0L257.3 500.0M272.8 450.0L269.8 470.0M269.8 470.0L265.3 500.0M280.8 450.0L277.8 470.0M277.8 470.0L273.3 500.0M288.8 450.0L281.3 500.0M296.8 450.0L292.3 480.0M292.3 480.0L289.3 500.0M304.8 450.0L300.3 480.0M300.3 480.0L297.3 500.0M312.8 450.0L309.8 470.0M309.8 470.0L306.8 490.0M306.8 490.0L305.3 500.0M328.8 450.0L324.3 480.0M324.3 480.0L321.3 500.0M336.8 450.0L330.8 490.0M330.8 490.0L329.3 500.0M344.8 450.0L341.8 470.0M341.8 470.0L337.3 500.0M352.8 450.0L349.8 470.0M349.8 470.0L345.3 500.0M360.8 450.0L356.3 480.0M356.3 480.0L353.3 500.0M368.8 450.0L364.3 480.0M364.3 480.0L361.3 500.0M372.3 480.0L369.3 500.0M384.8 450.0L380.3 480.0M380.3 480.0L377.3 500.0M392.8 450.0L385.3 500.0M400.8 450.0L397.8 470.0M397.8 470.0L393.3 500.0M408.8 450.0L404.3 480.0M145.0 394.0L177.0 387.2M177.0 387.2L209.0 380.4M209.0 380.4L241.0 373.6M241.0 373.6L273.0 366.8M273.0 366.8L337.0 353.2M337.0 353.2L361.0 348.1M361.0 348.1L400.0 339.8M145.0 404.0L177.0 397.2M177.0 397.2L201.0 392.1M265.0 378.5L289.0 373.4M289.0 373.4L321.0 366.6M369.0 356.4L400.0 349.8M145.0 414.0L209.0 400.4M209.0 400.4L241.0 393.6M241.0 393.6L265.0 388.5M265.0 388.5L329.0 374.9M329.0 374.9L353.0 369.8M145.0 424.0L169.0 418.9M169.0 418.9L217.0 408.7M281.0 395.1L329.0 384.9M393.0 371.3L400.0 369.8M177.0 427.2L209.0 420.4M209.0 420.4L241.0 413.6M241.0 413.6L273.0 406.8M273.0 406.8L297.0 401.7M297.0 401.7L361.0 388.1M361.0 388.1L393.0 381.3M393.0 381.3L400.0 379.8M177.0 437.2L241.0 423.6M241.0 423.6L265.0 418.5M265.0 418.5L313.0 408.3M377.0 394.7L400.0 389.8M209.0 440.4L257.0 430.2M305.0 420.0L353.0 409.8M353.0 409.8L377.0 404.7M377.0 404.7L400.0 399.8M169.0 458.9L201.0 452.1M201.0 452.1L249.0 441.9M249.0 441.9L313.0 428.3M313.0 428.3L337.0 423.2M337.0 423.2L361.0 418.1M361.0 418.1L400.0 409.8M145.0 474.0L169.0 468.9M201.0 462.1L225.0 457.0M225.0 457.0L257.0 450.2M257.0 450.2L305.0 440.0M329.0 434.9L361.0 428.1M361.0 428.1L400.0 419.8M209.0 470.4L233.0 465.3M233.0 465.3L257.0 460.2M257.0 460.2L321.0 446.6M369.0 436.4L393.0 431.3M393.0 431.3L400.0 429.8M145.0 494.0L177.0 487.2M177.0 487.2L209.0 480.4M209.0 480.4L273.0 466.8M273.0 466.8L305.0 460.0M305.0 460.0L329.0 454.9M329.0 454.9L393.0 441.3M393.0 441.3L400.0 439.8M145.0 504.0L169.0 498.9M169.0 498.9L217.0 488.7M217.0 488.7L265.0 478.5M265.0 478.5L313.0 468.3M313.0 468.3L337.0 463.2M337.0 463.2L369.0 456.4M369.0 456.4L400.0 449.8M145.0 514.0L209.0 500.4M209.0 500.4L233.0 495.3M265.0 488.5L329.0 474.9M329.0 474.9L353.0 469.8M353.0 469.8L400.0 459.8M145.0 524.0L209.0 510.4M233.0 505.3L281.0 495.1M281.0 495.1L329.0 484.9M329.0 484.9L353.0 479.8M145.0 534.0L169.0 528.9M169.0 528.9L193.0 523.8M193.0 523.8L241.0 513.6M321.0 496.6L353.0 489.8M353.0 489.8L385.0 483.0M385.0 483.0L400.0 479.8M145.0 544.0L193.0 533.8M193.0 533.8L217.0 528.7M217.0 528.7L265.0 518.5M265.0 518.5L297.0 511.7M297.0 511.7L329.0 504.9M329.0 504.9L377.0 494.7M377.0 494.7L400.0 489.8M145.0 554.0L209.0 540.4M209.0 540.4L233.0 535.3M233.0 535.3L265.0 528.5M265.0 528.5L329.0 514.9M393.0 501.3L400.0 499.8" fill="none" stroke="#dde2ea" stroke-width="0.9"/>
<clipPath id="g6"><path d="M765 150 L800 118 L900 118 L1010 130 L1025 175 L1045 205 L1060 240 L760 288Z"/></clipPath>
<path clip-path="url(#g6)" d="M748.9 113.0L749.3 135.5M749.3 135.5L749.9 165.5M749.9 165.5L750.4 195.5M750.4 195.5L750.8 218.0M750.8 218.0L751.0 233.0M751.0 233.0L751.3 248.0M751.3 248.0L751.8 278.0M751.8 278.0L752.1 293.0M756.9 113.0L757.7 158.0M757.7 158.0L758.0 173.0M758.0 173.0L758.4 195.5M758.9 225.5L759.3 248.0M759.3 248.0L759.8 278.0M759.8 278.0L760.1 293.0M764.9 113.0L765.7 158.0M765.7 158.0L766.1 180.5M766.4 195.5L766.6 210.5M766.6 210.5L767.0 233.0M767.0 233.0L767.6 263.0M767.6 263.0L767.8 278.0M767.8 278.0L768.1 293.0M772.9 113.0L773.5 143.0M773.5 143.0L774.0 173.0M774.0 173.0L774.8 218.0M774.8 218.0L775.0 233.0M775.0 233.0L775.8 278.0M775.8 278.0L776.1 293.0M780.9 113.0L781.5 143.0M781.5 143.0L782.3 188.0M782.6 210.5L783.2 240.5M783.2 240.5L783.6 263.0M783.6 263.0L784.0 285.5M788.9 113.0L789.5 143.0M789.5 143.0L790.3 188.0M790.3 188.0L790.8 218.0M790.8 218.0L791.6 263.0M791.6 263.0L792.1 293.0M797.5 143.0L798.0 173.0M798.0 173.0L798.3 188.0M798.6 210.5L799.2 240.5M799.2 240.5L799.6 263.0M799.6 263.0L800.1 293.0M804.9 113.0L805.7 158.0M805.7 158.0L806.3 188.0M806.3 188.0L806.5 203.0M806.5 203.0L807.0 233.0M807.0 233.0L807.3 248.0M807.7 270.5L808.1 293.0M812.9 113.0L813.7 158.0M813.7 158.0L814.3 188.0M814.3 188.0L814.6 210.5M814.6 210.5L815.0 233.0M815.0 233.0L815.3 248.0M815.3 248.0L815.6 263.0M815.6 263.0L815.8 278.0M815.8 278.0L816.1 293.0M820.9 113.0L821.5 143.0M821.5 143.0L821.7 158.0M821.7 158.0L822.5 203.0M822.5 203.0L822.8 218.0M822.8 218.0L823.2 240.5M823.2 240.5L823.7 270.5M823.7 270.5L824.1 293.0M828.9 113.0L829.7 158.0M829.7 158.0L830.1 180.5M830.4 195.5L830.6 210.5M830.6 210.5L831.4 255.5M831.4 255.5L832.1 293.0M836.9 113.0L837.2 128.0M837.7 158.0L838.1 180.5M838.5 203.0L838.8 218.0M838.8 218.0L839.0 233.0M839.0 233.0L839.8 278.0M844.9 113.0L845.7 158.0M845.7 158.0L846.0 173.0M846.0 173.0L846.4 195.5M846.4 195.5L846.6 210.5M846.6 210.5L847.0 233.0M847.0 233.0L847.8 278.0M847.8 278.0L848.1 293.0M852.9 113.0L853.7 158.0M853.7 158.0L854.0 173.0M854.0 173.0L854.8 218.0M854.8 218.0L855.2 240.5M855.2 240.5L856.0 285.5M861.3 135.5L861.7 158.0M862.1 180.5L862.6 210.5M863.2 240.5L864.0 285.5M864.0 285.5L864.1 293.0M868.9 113.0L869.7 158.0M869.7 158.0L870.3 188.0M870.3 188.0L871.0 233.0M871.0 233.0L871.6 263.0M876.9 113.0L877.2 128.0M877.2 128.0L877.6 150.5M878.0 173.0L878.5 203.0M878.5 203.0L878.9 225.5M878.9 225.5L879.7 270.5M879.7 270.5L880.1 293.0M884.9 113.0L885.5 143.0M885.5 143.0L886.3 188.0M886.3 188.0L886.6 210.5M886.6 210.5L887.4 255.5M887.4 255.5L887.8 278.0M887.8 278.0L888.1 293.0M892.9 113.0L893.5 143.0M893.5 143.0L894.3 188.0M894.3 188.0L894.8 218.0M894.8 218.0L895.6 263.0M896.0 285.5L896.1 293.0M900.9 113.0L901.2 128.0M901.2 128.0L901.7 158.0M902.5 203.0L902.9 225.5M902.9 225.5L903.7 270.5M903.7 270.5L904.1 293.0M908.9 113.0L909.3 135.5M909.6 150.5L910.1 180.5M910.1 180.5L910.6 210.5M911.7 270.5L912.1 293.0M916.9 113.0L917.7 158.0M917.7 158.0L918.5 203.0M918.5 203.0L918.9 225.5M919.3 248.0L919.8 278.0M919.8 278.0L920.1 293.0M924.9 113.0L925.7 158.0M925.7 158.0L926.5 203.0M926.5 203.0L926.8 218.0M926.8 218.0L927.0 233.0M927.0 233.0L927.4 255.5M927.4 255.5L927.7 270.5M927.7 270.5L928.1 293.0M932.9 113.0L933.5 143.0M933.5 143.0L933.7 158.0M933.7 158.0L934.1 180.5M934.1 180.5L934.5 203.0M934.5 203.0L935.0 233.0M935.0 233.0L935.6 263.0M935.6 263.0L935.8 278.0M935.8 278.0L936.1 293.0M940.9 113.0L941.2 128.0M941.5 143.0L942.0 173.0M942.0 173.0L942.5 203.0M942.5 203.0L942.8 218.0M942.8 218.0L943.6 263.0M943.6 263.0L944.0 285.5M944.0 285.5L944.1 293.0M948.9 113.0L949.7 158.0M949.7 158.0L950.3 188.0M950.3 188.0L951.0 233.0M951.0 233.0L951.4 255.5M951.4 255.5L951.8 278.0M956.9 113.0L957.5 143.0M957.5 143.0L957.9 165.5M957.9 165.5L958.3 188.0M958.3 188.0L958.6 210.5M958.6 210.5L959.0 233.0M964.9 113.0L965.7 158.0M965.7 158.0L966.1 180.5M966.1 180.5L966.4 195.5M967.2 240.5L967.7 270.5M967.7 270.5L968.1 293.0M972.9 113.0L973.3 135.5M973.3 135.5L973.7 158.0M973.7 158.0L974.0 173.0M974.0 173.0L974.4 195.5M974.4 195.5L974.8 218.0M974.8 218.0L975.6 263.0M975.6 263.0L976.1 293.0M980.9 113.0L981.2 128.0M981.2 128.0L981.5 143.0M981.9 165.5L982.4 195.5M982.4 195.5L982.6 210.5M982.6 210.5L983.4 255.5M983.4 255.5L983.8 278.0M983.8 278.0L984.1 293.0M988.9 113.0L989.5 143.0M989.7 158.0L990.5 203.0M991.3 248.0L991.8 278.0M996.9 113.0L997.7 158.0M997.7 158.0L998.5 203.0M999.0 233.0L999.3 248.0M999.3 248.0L999.8 278.0M1005.2 128.0L1006.0 173.0M1006.0 173.0L1006.5 203.0M1006.9 225.5L1007.4 255.5M1007.4 255.5L1008.0 285.5M1008.0 285.5L1008.1 293.0M1013.5 143.0L1014.0 173.0M1014.0 173.0L1014.5 203.0M1014.8 218.0L1015.6 263.0M1015.6 263.0L1016.0 285.5M1016.0 285.5L1016.1 293.0M1020.9 113.0L1021.5 143.0M1021.7 158.0L1022.1 180.5M1022.1 180.5L1022.9 225.5M1023.7 270.5L1024.0 285.5M1024.0 285.5L1024.1 293.0M1030.3 188.0L1030.5 203.0M1030.5 203.0L1031.3 248.0M1031.3 248.0L1031.6 263.0M1031.6 263.0L1032.0 285.5M1032.0 285.5L1032.1 293.0M1036.9 113.0L1037.2 128.0M1037.2 128.0L1037.7 158.0M1038.5 203.0L1039.0 233.0M1039.0 233.0L1039.8 278.0M1039.8 278.0L1040.1 293.0M1044.9 113.0L1045.2 128.0M1045.2 128.0L1045.5 143.0M1045.5 143.0L1046.0 173.0M1046.0 173.0L1046.5 203.0M1046.5 203.0L1047.3 248.0M1047.3 248.0L1048.1 293.0M1052.9 113.0L1053.3 135.5M1053.3 135.5L1053.9 165.5M1053.9 165.5L1054.1 180.5M1054.1 180.5L1054.5 203.0M1054.5 203.0L1055.3 248.0M1055.3 248.0L1055.7 270.5M1055.7 270.5L1056.1 293.0M1060.9 113.0L1061.7 158.0M1061.7 158.0L1062.1 180.5M1062.1 180.5L1062.9 225.5M1062.9 225.5L1063.3 248.0M1063.3 248.0L1063.7 270.5M1063.7 270.5L1064.0 285.5M1064.0 285.5L1064.1 293.0M1068.9 113.0L1069.3 135.5M1069.3 135.5L1069.9 165.5M1069.9 165.5L1070.3 188.0M1070.3 188.0L1070.6 210.5M1070.6 210.5L1070.9 225.5M1070.9 225.5L1071.2 240.5M1071.2 240.5L1071.4 255.5M1071.4 255.5L1071.8 278.0M1071.8 278.0L1072.1 293.0M755.0 63.8L779.0 60.0M779.0 60.0L843.0 49.8M843.0 49.8L875.0 44.8M899.0 41.0L923.0 37.2M923.0 37.2L947.0 33.4M947.0 33.4L971.0 29.6M971.0 29.6L1003.0 24.5M1003.0 24.5L1027.0 20.7M1027.0 20.7L1065.0 14.7M755.0 71.3L779.0 67.5M779.0 67.5L811.0 62.4M811.0 62.4L859.0 54.8M859.0 54.8L907.0 47.2M907.0 47.2L931.0 43.4M931.0 43.4L955.0 39.6M955.0 39.6L1003.0 32.0M1003.0 32.0L1027.0 28.2M755.0 78.8L803.0 71.2M827.0 67.4L859.0 62.3M859.0 62.3L891.0 57.2M891.0 57.2L915.0 53.4M979.0 43.3L1003.0 39.5M1003.0 39.5L1027.0 35.7M1027.0 35.7L1059.0 30.6M1059.0 30.6L1065.0 29.7M755.0 86.3L819.0 76.1M819.0 76.1L867.0 68.5M867.0 68.5L915.0 60.9M939.0 57.1L971.0 52.1M971.0 52.1L1035.0 41.9M1059.0 38.1L1065.0 37.2M755.0 93.8L787.0 88.7M787.0 88.7L851.0 78.6M851.0 78.6L875.0 74.8M875.0 74.8L907.0 69.7M907.0 69.7L939.0 64.6M939.0 64.6L963.0 60.8M963.0 60.8L1011.0 53.2M1011.0 53.2L1059.0 45.6M1059.0 45.6L1065.0 44.7M803.0 93.7L867.0 83.5M867.0 83.5L891.0 79.7M891.0 79.7L915.0 75.9M915.0 75.9L947.0 70.9M995.0 63.3L1043.0 55.7M1043.0 55.7L1065.0 52.2M755.0 108.8L779.0 105.0M779.0 105.0L803.0 101.2M803.0 101.2L867.0 91.0M867.0 91.0L891.0 87.2M891.0 87.2L939.0 79.6M939.0 79.6L971.0 74.6M971.0 74.6L1003.0 69.5M1003.0 69.5L1051.0 61.9M1051.0 61.9L1065.0 59.7M755.0 116.3L787.0 111.2M787.0 111.2L851.0 101.1M851.0 101.1L899.0 93.5M899.0 93.5L963.0 83.3M963.0 83.3L995.0 78.3M995.0 78.3L1043.0 70.7M755.0 123.8L819.0 113.6M819.0 113.6L883.0 103.5M883.0 103.5L931.0 95.9M955.0 92.1L1003.0 84.5M1051.0 76.9L1065.0 74.7M755.0 131.3L779.0 127.5M779.0 127.5L827.0 119.9M827.0 119.9L891.0 109.7M891.0 109.7L955.0 99.6M955.0 99.6L979.0 95.8M979.0 95.8L1027.0 88.2M1027.0 88.2L1065.0 82.2M755.0 138.8L779.0 135.0M779.0 135.0L827.0 127.4M827.0 127.4L851.0 123.6M851.0 123.6L915.0 113.4M915.0 113.4L963.0 105.8M963.0 105.8L987.0 102.0M987.0 102.0L1011.0 98.2M1035.0 94.4L1065.0 89.7M755.0 146.3L779.0 142.5M779.0 142.5L803.0 138.7M803.0 138.7L827.0 134.9M827.0 134.9L875.0 127.3M875.0 127.3L899.0 123.5M899.0 123.5L963.0 113.3M963.0 113.3L1011.0 105.7M1011.0 105.7L1065.0 97.2M755.0 153.8L779.0 150.0M779.0 150.0L827.0 142.4M827.0 142.4L891.0 132.2M891.0 132.2L955.0 122.1M955.0 122.1L979.0 118.3M1027.0 110.7L1065.0 104.7M755.0 161.3L779.0 157.5M779.0 157.5L811.0 152.4M811.0 152.4L835.0 148.6M835.0 148.6L883.0 141.0M883.0 141.0L915.0 135.9M915.0 135.9L963.0 128.3M963.0 128.3L1011.0 120.7M1011.0 120.7L1065.0 112.2M755.0 168.8L803.0 161.2M803.0 161.2L867.0 151.0M867.0 151.0L915.0 143.4M963.0 135.8L987.0 132.0M987.0 132.0L1011.0 128.2M1011.0 128.2L1059.0 120.6M1059.0 120.6L1065.0 119.7M755.0 176.3L779.0 172.5M811.0 167.4L843.0 162.3M843.0 162.3L875.0 157.3M875.0 157.3L923.0 149.7M923.0 149.7L955.0 144.6M955.0 144.6L987.0 139.5M987.0 139.5L1035.0 131.9M1035.0 131.9L1065.0 127.2M755.0 183.8L819.0 173.6M819.0 173.6L867.0 166.0M867.0 166.0L931.0 155.9M931.0 155.9L979.0 148.3M1027.0 140.7L1065.0 134.7M803.0 183.7L867.0 173.5M867.0 173.5L931.0 163.4M963.0 158.3L987.0 154.5M987.0 154.5L1051.0 144.4M1051.0 144.4L1065.0 142.2M755.0 198.8L819.0 188.6M819.0 188.6L867.0 181.0M867.0 181.0L931.0 170.9M931.0 170.9L963.0 165.8M963.0 165.8L1011.0 158.2M1011.0 158.2L1043.0 153.2M755.0 206.3L779.0 202.5M779.0 202.5L811.0 197.4M811.0 197.4L875.0 187.3M875.0 187.3L899.0 183.5M899.0 183.5L931.0 178.4M979.0 170.8L1043.0 160.7M1043.0 160.7L1065.0 157.2M755.0 213.8L803.0 206.2M803.0 206.2L827.0 202.4M851.0 198.6L899.0 191.0M947.0 183.4L979.0 178.3M1043.0 168.2L1065.0 164.7M755.0 221.3L819.0 211.1M819.0 211.1L843.0 207.3M843.0 207.3L875.0 202.3M899.0 198.5L931.0 193.4M931.0 193.4L955.0 189.6M955.0 189.6L979.0 185.8M1051.0 174.4L1065.0 172.2M819.0 218.6L851.0 213.6M851.0 213.6L883.0 208.5M883.0 208.5L907.0 204.7M907.0 204.7L971.0 194.6M971.0 194.6L995.0 190.8M995.0 190.8L1027.0 185.7M1027.0 185.7L1059.0 180.6M1059.0 180.6L1065.0 179.7M755.0 236.3L779.0 232.5M779.0 232.5L803.0 228.7M803.0 228.7L835.0 223.6M835.0 223.6L899.0 213.5M899.0 213.5L947.0 205.9M947.0 205.9L995.0 198.3M995.0 198.3L1059.0 188.1M1059.0 188.1L1065.0 187.2M755.0 243.8L803.0 236.2M803.0 236.2L851.0 228.6M851.0 228.6L915.0 218.4M915.0 218.4L979.0 208.3M979.0 208.3L1043.0 198.2M1043.0 198.2L1065.0 194.7M755.0 251.3L803.0 243.7M803.0 243.7L867.0 233.5M867.0 233.5L899.0 228.5M899.0 228.5L923.0 224.7M923.0 224.7L947.0 220.9M947.0 220.9L971.0 217.1M971.0 217.1L1019.0 209.5M1019.0 209.5L1065.0 202.2M755.0 258.8L803.0 251.2M803.0 251.2L827.0 247.4M827.0 247.4L891.0 237.2M891.0 237.2L955.0 227.1M955.0 227.1L1019.0 217.0M1019.0 217.0L1043.0 213.2M1043.0 213.2L1065.0 209.7M803.0 258.7L835.0 253.6M835.0 253.6L883.0 246.0M883.0 246.0L947.0 235.9M947.0 235.9L995.0 228.3M995.0 228.3L1059.0 218.1M755.0 273.8L803.0 266.2M803.0 266.2L835.0 261.1M835.0 261.1L867.0 256.0M867.0 256.0L899.0 251.0M899.0 251.0L963.0 240.8M963.0 240.8L987.0 237.0M987.0 237.0L1035.0 229.4M755.0 281.3L787.0 276.2M851.0 266.1L899.0 258.5M899.0 258.5L947.0 250.9M947.0 250.9L971.0 247.1M971.0 247.1L1019.0 239.5M1019.0 239.5L1043.0 235.7M1043.0 235.7L1065.0 232.2M755.0 288.8L787.0 283.7M819.0 278.6L851.0 273.6M851.0 273.6L883.0 268.5M883.0 268.5L931.0 260.9M1059.0 240.6L1065.0 239.7M755.0 296.3L803.0 288.7M803.0 288.7L851.0 281.1M915.0 270.9L979.0 260.8M1011.0 255.7L1059.0 248.1M1059.0 248.1L1065.0 247.2M755.0 303.8L819.0 293.6M819.0 293.6L843.0 289.8M843.0 289.8L891.0 282.2M891.0 282.2L955.0 272.1M955.0 272.1L1003.0 264.5M1003.0 264.5L1065.0 254.7M755.0 311.3L787.0 306.2M787.0 306.2L819.0 301.1M867.0 293.5L899.0 288.5M923.0 284.7L987.0 274.5M987.0 274.5L1051.0 264.4M755.0 318.8L819.0 308.6M819.0 308.6L883.0 298.5M883.0 298.5L947.0 288.4M947.0 288.4L971.0 284.6M1035.0 274.4L1059.0 270.6M1059.0 270.6L1065.0 269.7M755.0 326.3L779.0 322.5M779.0 322.5L827.0 314.9M827.0 314.9L891.0 304.7M915.0 300.9L939.0 297.1M963.0 293.3L987.0 289.5M987.0 289.5L1019.0 284.5M1019.0 284.5L1043.0 280.7M1043.0 280.7L1065.0 277.2M755.0 333.8L819.0 323.6M819.0 323.6L883.0 313.5M883.0 313.5L915.0 308.4M915.0 308.4L939.0 304.6M939.0 304.6L971.0 299.6M971.0 299.6L1003.0 294.5M1003.0 294.5L1027.0 290.7M1027.0 290.7L1065.0 284.7M755.0 341.3L779.0 337.5M779.0 337.5L827.0 329.9M827.0 329.9L875.0 322.3M875.0 322.3L939.0 312.1M939.0 312.1L987.0 304.5M987.0 304.5L1051.0 294.4M1051.0 294.4L1065.0 292.2" fill="none" stroke="#dde2ea" stroke-width="0.9"/>
<clipPath id="g7"><path d="M765 290 L979 258 L979 297 L1086 303 L1093 320 L1093 405 L800 398 L762 395Z"/></clipPath>
<path clip-path="url(#g7)" d="M751.7 275.5L752.3 305.5M752.3 305.5L753.0 350.5M753.0 350.5L753.4 373.0M753.4 373.0L754.0 403.0M754.0 403.0L754.1 410.0M759.3 253.0L759.6 268.0M759.6 268.0L760.4 313.0M760.9 343.0L761.3 365.5M761.3 365.5L761.8 395.5M761.8 395.5L762.1 410.0M767.3 253.0L768.1 298.0M768.1 298.0L768.9 343.0M769.3 365.5L770.1 410.0M775.6 268.0L775.9 283.0M775.9 283.0L776.7 328.0M776.7 328.0L777.0 350.5M777.0 350.5L777.6 380.5M777.6 380.5L778.0 403.0M778.0 403.0L778.1 410.0M784.1 298.0L784.4 313.0M784.4 313.0L785.2 358.0M785.2 358.0L785.7 388.0M785.7 388.0L786.1 410.0M791.3 253.0L791.7 275.5M792.1 298.0L792.9 343.0M792.9 343.0L793.3 365.5M793.3 365.5L793.8 395.5M793.8 395.5L794.1 410.0M799.3 253.0L799.9 283.0M799.9 283.0L800.3 305.5M800.3 305.5L800.7 328.0M800.7 328.0L800.9 343.0M800.9 343.0L801.3 365.5M801.3 365.5L801.7 388.0M801.7 388.0L802.0 403.0M802.0 403.0L802.1 410.0M807.3 253.0L808.1 298.0M808.9 343.0L809.4 373.0M809.4 373.0L809.8 395.5M809.8 395.5L810.1 410.0M815.9 283.0L816.7 328.0M816.7 328.0L816.9 343.0M816.9 343.0L817.4 373.0M817.4 373.0L817.7 388.0M817.7 388.0L818.1 410.0M823.3 253.0L823.7 275.5M824.3 305.5L824.5 320.5M824.5 320.5L825.0 350.5M825.0 350.5L825.4 373.0M825.4 373.0L825.7 388.0M825.7 388.0L826.1 410.0M831.3 253.0L831.7 275.5M831.7 275.5L832.3 305.5M832.3 305.5L832.8 335.5M833.6 380.5L833.8 395.5M833.8 395.5L834.1 410.0M839.6 268.0L839.9 283.0M839.9 283.0L840.3 305.5M840.8 335.5L841.2 358.0M841.2 358.0L841.4 373.0M841.4 373.0L842.1 410.0M848.3 305.5L849.0 350.5M849.0 350.5L849.3 365.5M849.3 365.5L849.7 388.0M849.7 388.0L850.0 403.0M850.0 403.0L850.1 410.0M855.3 253.0L855.9 283.0M855.9 283.0L856.3 305.5M856.3 305.5L856.7 328.0M856.7 328.0L857.0 350.5M857.3 365.5L857.6 380.5M857.6 380.5L858.0 403.0M863.3 253.0L863.7 275.5M863.7 275.5L864.3 305.5M864.3 305.5L865.0 350.5M865.0 350.5L865.3 365.5M865.6 380.5L866.0 403.0M866.0 403.0L866.1 410.0M871.3 253.0L871.6 268.0M871.9 283.0L872.3 305.5M872.8 335.5L873.6 380.5M874.0 403.0L874.1 410.0M879.6 268.0L880.0 290.5M880.0 290.5L880.4 313.0M880.4 313.0L880.9 343.0M880.9 343.0L881.3 365.5M881.3 365.5L881.7 388.0M881.7 388.0L882.0 403.0M887.3 253.0L887.9 283.0M887.9 283.0L888.1 298.0M888.1 298.0L888.4 313.0M889.2 358.0L889.7 388.0M889.7 388.0L890.1 410.0M895.3 253.0L896.1 298.0M896.1 298.0L896.7 328.0M896.7 328.0L897.4 373.0M897.4 373.0L897.8 395.5M897.8 395.5L898.1 410.0M903.6 268.0L904.1 298.0M904.1 298.0L904.5 320.5M904.5 320.5L905.3 365.5M905.3 365.5L906.1 410.0M911.3 253.0L911.6 268.0M911.6 268.0L912.4 313.0M912.4 313.0L912.9 343.0M912.9 343.0L913.7 388.0M913.7 388.0L914.1 410.0M919.3 253.0L919.9 283.0M919.9 283.0L920.7 328.0M920.7 328.0L920.9 343.0M920.9 343.0L921.2 358.0M921.2 358.0L922.0 403.0M922.0 403.0L922.1 410.0M927.3 253.0L927.9 283.0M927.9 283.0L928.1 298.0M928.1 298.0L928.9 343.0M928.9 343.0L929.4 373.0M929.4 373.0L930.0 403.0M930.0 403.0L930.1 410.0M935.3 253.0L935.7 275.5M935.7 275.5L936.0 290.5M936.0 290.5L936.4 313.0M936.4 313.0L936.9 343.0M936.9 343.0L937.4 373.0M937.4 373.0L938.0 403.0M938.0 403.0L938.1 410.0M943.3 253.0L943.9 283.0M943.9 283.0L944.3 305.5M944.3 305.5L944.7 328.0M945.3 365.5L945.7 388.0M945.7 388.0L946.1 410.0M951.3 253.0L951.6 268.0M951.6 268.0L952.4 313.0M952.4 313.0L952.9 343.0M952.9 343.0L953.2 358.0M953.2 358.0L953.7 388.0M953.7 388.0L954.1 410.0M959.3 253.0L960.1 298.0M960.1 298.0L960.4 313.0M960.4 313.0L961.2 358.0M961.4 373.0L961.7 388.0M961.7 388.0L962.1 410.0M967.3 253.0L967.7 275.5M968.5 320.5L969.0 350.5M969.0 350.5L969.3 365.5M969.3 365.5L969.8 395.5M969.8 395.5L970.1 410.0M975.3 253.0L975.7 275.5M975.7 275.5L976.3 305.5M976.3 305.5L976.7 328.0M976.7 328.0L976.9 343.0M976.9 343.0L977.7 388.0M977.7 388.0L978.1 410.0M983.3 253.0L983.9 283.0M983.9 283.0L984.4 313.0M984.4 313.0L985.2 358.0M985.2 358.0L985.7 388.0M985.7 388.0L986.1 410.0M991.3 253.0L991.6 268.0M991.6 268.0L992.0 290.5M992.0 290.5L992.3 305.5M992.3 305.5L993.0 350.5M993.0 350.5L993.6 380.5M993.6 380.5L994.0 403.0M994.0 403.0L994.1 410.0M999.3 253.0L999.9 283.0M1000.7 328.0L1001.2 358.0M1001.2 358.0L1001.7 388.0M1001.7 388.0L1002.1 410.0M1007.3 253.0L1007.7 275.5M1007.7 275.5L1008.5 320.5M1008.5 320.5L1009.3 365.5M1009.8 395.5L1010.1 410.0M1015.3 253.0L1016.1 298.0M1016.1 298.0L1016.9 343.0M1016.9 343.0L1017.4 373.0M1017.4 373.0L1018.1 410.0M1023.3 253.0L1023.9 283.0M1023.9 283.0L1024.1 298.0M1024.4 313.0L1024.9 343.0M1024.9 343.0L1025.4 373.0M1025.4 373.0L1025.8 395.5M1025.8 395.5L1026.1 410.0M1031.3 253.0L1032.1 298.0M1032.1 298.0L1032.4 313.0M1032.4 313.0L1032.8 335.5M1032.8 335.5L1033.0 350.5M1033.0 350.5L1033.8 395.5M1033.8 395.5L1034.1 410.0M1039.3 253.0L1040.1 298.0M1040.1 298.0L1040.7 328.0M1040.7 328.0L1041.0 350.5M1041.0 350.5L1041.8 395.5M1041.8 395.5L1042.1 410.0M1047.3 253.0L1047.9 283.0M1048.7 328.0L1048.9 343.0M1048.9 343.0L1049.3 365.5M1049.3 365.5L1050.1 410.0M1055.3 253.0L1055.9 283.0M1055.9 283.0L1056.3 305.5M1056.3 305.5L1056.7 328.0M1056.7 328.0L1057.2 358.0M1057.2 358.0L1058.0 403.0M1058.0 403.0L1058.1 410.0M1063.3 253.0L1064.1 298.0M1064.1 298.0L1064.7 328.0M1064.7 328.0L1065.2 358.0M1065.2 358.0L1065.6 380.5M1065.6 380.5L1066.1 410.0M1071.3 253.0L1071.6 268.0M1071.6 268.0L1071.9 283.0M1071.9 283.0L1072.4 313.0M1072.4 313.0L1073.2 358.0M1073.2 358.0L1073.6 380.5M1073.6 380.5L1073.8 395.5M1080.1 298.0L1080.5 320.5M1080.5 320.5L1081.0 350.5M1081.0 350.5L1081.4 373.0M1081.4 373.0L1081.8 395.5M1081.8 395.5L1082.1 410.0M1087.7 275.5L1088.3 305.5M1088.3 305.5L1088.5 320.5M1088.5 320.5L1089.0 350.5M1089.0 350.5L1089.3 365.5M1089.3 365.5L1090.1 410.0M1095.3 253.0L1095.6 268.0M1095.6 268.0L1096.1 298.0M1096.7 328.0L1097.4 373.0M1097.4 373.0L1098.1 410.0M1103.3 253.0L1104.1 298.0M1104.5 320.5L1104.9 343.0M1105.3 365.5L1105.6 380.5M1105.6 380.5L1106.0 403.0M1106.0 403.0L1106.1 410.0M757.0 244.6L789.0 245.2M789.0 245.2L837.0 246.0M837.0 246.0L861.0 246.5M885.0 246.9L917.0 247.4M917.0 247.4L965.0 248.3M965.0 248.3L997.0 248.8M997.0 248.8L1045.0 249.7M757.0 252.1L789.0 252.7M789.0 252.7L853.0 253.8M853.0 253.8L917.0 254.9M965.0 255.8L997.0 256.3M997.0 256.3L1061.0 257.4M1061.0 257.4L1085.0 257.9M1085.0 257.9L1098.0 258.1M757.0 259.6L789.0 260.2M789.0 260.2L837.0 261.0M837.0 261.0L869.0 261.6M869.0 261.6L893.0 262.0M893.0 262.0L925.0 262.6M925.0 262.6L989.0 263.7M989.0 263.7L1053.0 264.8M1053.0 264.8L1098.0 265.6M845.0 268.7L869.0 269.1M869.0 269.1L893.0 269.5M893.0 269.5L917.0 269.9M917.0 269.9L965.0 270.8M965.0 270.8L1029.0 271.9M1061.0 272.4L1093.0 273.0M757.0 274.6L821.0 275.8M821.0 275.8L845.0 276.2M845.0 276.2L877.0 276.7M877.0 276.7L941.0 277.8M941.0 277.8L1005.0 279.0M1005.0 279.0L1029.0 279.4M1029.0 279.4L1061.0 279.9M1061.0 279.9L1093.0 280.5M757.0 282.1L821.0 283.3M821.0 283.3L885.0 284.4M885.0 284.4L909.0 284.8M973.0 285.9L1005.0 286.5M1037.0 287.0L1069.0 287.6M1069.0 287.6L1093.0 288.0M757.0 289.6L789.0 290.2M789.0 290.2L813.0 290.6M813.0 290.6L877.0 291.7M877.0 291.7L909.0 292.3M909.0 292.3L933.0 292.7M933.0 292.7L997.0 293.8M997.0 293.8L1029.0 294.4M1029.0 294.4L1093.0 295.5M757.0 297.1L781.0 297.6M781.0 297.6L805.0 298.0M805.0 298.0L837.0 298.5M885.0 299.4L949.0 300.5M973.0 300.9L997.0 301.3M997.0 301.3L1021.0 301.7M1021.0 301.7L1045.0 302.2M1045.0 302.2L1093.0 303.0M757.0 304.6L781.0 305.1M813.0 305.6L877.0 306.7M877.0 306.7L909.0 307.3M909.0 307.3L933.0 307.7M933.0 307.7L957.0 308.1M957.0 308.1L1005.0 309.0M1005.0 309.0L1029.0 309.4M1053.0 309.8L1098.0 310.6M757.0 312.1L805.0 313.0M805.0 313.0L853.0 313.8M901.0 314.6L933.0 315.2M933.0 315.2L997.0 316.3M997.0 316.3L1029.0 316.9M1029.0 316.9L1053.0 317.3M1053.0 317.3L1077.0 317.7M1077.0 317.7L1098.0 318.1M757.0 319.6L789.0 320.2M789.0 320.2L853.0 321.3M853.0 321.3L877.0 321.7M877.0 321.7L925.0 322.6M925.0 322.6L957.0 323.1M957.0 323.1L1005.0 324.0M1005.0 324.0L1029.0 324.4M1029.0 324.4L1053.0 324.8M1053.0 324.8L1085.0 325.4M1085.0 325.4L1098.0 325.6M757.0 327.1L805.0 328.0M837.0 328.5L861.0 329.0M861.0 329.0L909.0 329.8M957.0 330.6L989.0 331.2M989.0 331.2L1013.0 331.6M1037.0 332.0L1085.0 332.9M1085.0 332.9L1098.0 333.1M757.0 334.6L781.0 335.1M781.0 335.1L813.0 335.6M813.0 335.6L837.0 336.0M837.0 336.0L869.0 336.6M869.0 336.6L933.0 337.7M933.0 337.7L957.0 338.1M957.0 338.1L989.0 338.7M989.0 338.7L1013.0 339.1M1013.0 339.1L1077.0 340.2M1077.0 340.2L1098.0 340.6M757.0 342.1L789.0 342.7M789.0 342.7L837.0 343.5M837.0 343.5L869.0 344.1M893.0 344.5L925.0 345.1M925.0 345.1L957.0 345.6M957.0 345.6L981.0 346.0M1029.0 346.9L1053.0 347.3M1053.0 347.3L1077.0 347.7M1077.0 347.7L1098.0 348.1M757.0 349.6L821.0 350.8M821.0 350.8L869.0 351.6M869.0 351.6L933.0 352.7M933.0 352.7L957.0 353.1M957.0 353.1L1021.0 354.2M1021.0 354.2L1053.0 354.8M1053.0 354.8L1077.0 355.2M1077.0 355.2L1098.0 355.6M821.0 358.3L853.0 358.8M853.0 358.8L901.0 359.6M901.0 359.6L925.0 360.1M925.0 360.1L949.0 360.5M949.0 360.5L981.0 361.0M981.0 361.0L1029.0 361.9M757.0 364.6L781.0 365.1M781.0 365.1L805.0 365.5M885.0 366.9L917.0 367.4M917.0 367.4L965.0 368.3M965.0 368.3L997.0 368.8M997.0 368.8L1045.0 369.7M1045.0 369.7L1077.0 370.2M1077.0 370.2L1098.0 370.6M757.0 372.1L789.0 372.7M789.0 372.7L853.0 373.8M853.0 373.8L877.0 374.2M877.0 374.2L909.0 374.8M909.0 374.8L973.0 375.9M973.0 375.9L1005.0 376.5M1005.0 376.5L1069.0 377.6M757.0 379.6L821.0 380.8M821.0 380.8L853.0 381.3M853.0 381.3L917.0 382.4M1005.0 384.0L1029.0 384.4M1029.0 384.4L1061.0 384.9M1061.0 384.9L1098.0 385.6M757.0 387.1L781.0 387.6M781.0 387.6L829.0 388.4M829.0 388.4L893.0 389.5M893.0 389.5L941.0 390.3M941.0 390.3L965.0 390.8M965.0 390.8L1029.0 391.9M757.0 394.6L821.0 395.8M821.0 395.8L853.0 396.3M853.0 396.3L901.0 397.1M901.0 397.1L925.0 397.6M925.0 397.6L989.0 398.7M989.0 398.7L1053.0 399.8M1085.0 400.4L1098.0 400.6M757.0 402.1L781.0 402.6M829.0 403.4L893.0 404.5M893.0 404.5L925.0 405.1M925.0 405.1L949.0 405.5M949.0 405.5L973.0 405.9M973.0 405.9L1005.0 406.5M1005.0 406.5L1037.0 407.0M1037.0 407.0L1069.0 407.6M1069.0 407.6L1098.0 408.1M757.0 409.6L805.0 410.5M805.0 410.5L837.0 411.0M837.0 411.0L861.0 411.5M861.0 411.5L885.0 411.9M885.0 411.9L909.0 412.3M909.0 412.3L941.0 412.8M941.0 412.8L989.0 413.7M989.0 413.7L1021.0 414.2M757.0 417.1L821.0 418.3M821.0 418.3L885.0 419.4M885.0 419.4L949.0 420.5M949.0 420.5L981.0 421.0M981.0 421.0L1013.0 421.6M1013.0 421.6L1077.0 422.7M1077.0 422.7L1098.0 423.1" fill="none" stroke="#dde2ea" stroke-width="0.9"/>
<clipPath id="g8"><path d="M640 436 L760 440 L830 470 L1093 486 L1093 495 L600 495 L618 432Z"/></clipPath>
<path clip-path="url(#g8)" d="M591.8 457.0L592.2 479.5M592.2 479.5L592.5 494.5M592.5 494.5L592.6 500.0M598.8 427.0L599.1 442.0M599.1 442.0L599.6 472.0M599.6 472.0L600.1 500.0M606.3 427.0L607.1 472.0M607.1 472.0L607.5 494.5M607.5 494.5L607.6 500.0M613.8 427.0L614.2 449.5M614.2 449.5L614.6 472.0M614.6 472.0L614.9 487.0M614.9 487.0L615.1 500.0M621.3 427.0L622.1 472.0M622.1 472.0L622.6 500.0M628.8 427.0L629.2 449.5M629.2 449.5L629.7 479.5M636.3 427.0L637.1 472.0M637.1 472.0L637.4 487.0M643.8 427.0L644.2 449.5M645.0 494.5L645.1 500.0M651.3 427.0L651.6 442.0M651.6 442.0L652.4 487.0M652.4 487.0L652.6 500.0M658.8 427.0L659.2 449.5M659.2 449.5L659.7 479.5M659.7 479.5L660.1 500.0M666.3 427.0L666.8 457.0M666.8 457.0L667.6 500.0M673.8 427.0L674.3 457.0M674.3 457.0L674.6 472.0M674.6 472.0L674.9 487.0M674.9 487.0L675.1 500.0M681.3 427.0L681.8 457.0M681.8 457.0L682.1 472.0M682.1 472.0L682.6 500.0M688.8 427.0L689.2 449.5M689.2 449.5L689.7 479.5M689.7 479.5L690.1 500.0M696.3 427.0L696.6 442.0M696.6 442.0L697.0 464.5M697.0 464.5L697.6 500.0M703.8 427.0L704.2 449.5M704.2 449.5L704.7 479.5M704.7 479.5L705.1 500.0M711.3 427.0L711.7 449.5M711.7 449.5L712.1 472.0M712.4 487.0L712.6 500.0M718.8 427.0L719.6 472.0M719.6 472.0L720.1 500.0M726.3 427.0L726.8 457.0M726.8 457.0L727.4 487.0M727.4 487.0L727.6 500.0M733.8 427.0L734.6 472.0M734.6 472.0L735.0 494.5M735.0 494.5L735.1 500.0M741.3 427.0L741.8 457.0M741.8 457.0L742.2 479.5M742.2 479.5L742.6 500.0M748.8 427.0L749.3 457.0M749.3 457.0L749.7 479.5M749.7 479.5L750.1 500.0M756.3 427.0L756.6 442.0M756.6 442.0L756.8 457.0M756.8 457.0L757.6 500.0M764.3 457.0L764.6 472.0M764.6 472.0L764.9 487.0M764.9 487.0L765.1 500.0M771.3 427.0L771.7 449.5M772.4 487.0L772.6 500.0M778.8 427.0L779.2 449.5M779.2 449.5L779.5 464.5M779.5 464.5L780.0 494.5M780.0 494.5L780.1 500.0M786.8 457.0L787.1 472.0M793.8 427.0L794.1 442.0M794.1 442.0L794.6 472.0M794.6 472.0L795.1 500.0M801.3 427.0L802.1 472.0M802.1 472.0L802.4 487.0M802.4 487.0L802.6 500.0M808.8 427.0L809.1 442.0M809.1 442.0L809.3 457.0M809.6 472.0L810.0 494.5M810.0 494.5L810.1 500.0M816.3 427.0L816.7 449.5M816.7 449.5L817.5 494.5M824.2 449.5L825.0 494.5M825.0 494.5L825.1 500.0M831.3 427.0L831.8 457.0M831.8 457.0L832.1 472.0M832.1 472.0L832.4 487.0M832.4 487.0L832.6 500.0M838.8 427.0L839.6 472.0M839.6 472.0L840.0 494.5M840.0 494.5L840.1 500.0M846.3 427.0L846.8 457.0M846.8 457.0L847.1 472.0M847.1 472.0L847.6 500.0M853.8 427.0L854.3 457.0M861.3 427.0L861.6 442.0M861.6 442.0L862.0 464.5M862.0 464.5L862.4 487.0M862.4 487.0L862.6 500.0M868.8 427.0L869.3 457.0M869.3 457.0L870.1 500.0M876.6 442.0L876.8 457.0M876.8 457.0L877.6 500.0M883.8 427.0L884.3 457.0M884.3 457.0L884.7 479.5M884.7 479.5L885.1 500.0M891.3 427.0L892.1 472.0M892.1 472.0L892.6 500.0M898.8 427.0L899.3 457.0M899.3 457.0L899.6 472.0M899.6 472.0L899.9 487.0M899.9 487.0L900.1 500.0M906.7 449.5L907.0 464.5M907.0 464.5L907.2 479.5M907.2 479.5L907.6 500.0M913.8 427.0L914.1 442.0M914.1 442.0L914.3 457.0M914.6 472.0L915.0 494.5M915.0 494.5L915.1 500.0M921.3 427.0L922.1 472.0M922.1 472.0L922.5 494.5M922.5 494.5L922.6 500.0M928.8 427.0L929.3 457.0M929.3 457.0L929.7 479.5M930.0 494.5L930.1 500.0M936.3 427.0L936.7 449.5M936.7 449.5L937.2 479.5M937.2 479.5L937.6 500.0M943.8 427.0L944.2 449.5M945.0 494.5L945.1 500.0M951.3 427.0L951.6 442.0M951.6 442.0L952.4 487.0M952.4 487.0L952.6 500.0M958.8 427.0L959.3 457.0M959.3 457.0L959.9 487.0M966.3 427.0L966.6 442.0M967.1 472.0L967.6 500.0M973.8 427.0L974.1 442.0M974.1 442.0L974.6 472.0M974.6 472.0L975.1 500.0M981.3 427.0L981.8 457.0M981.8 457.0L982.4 487.0M982.4 487.0L982.6 500.0M989.7 479.5L990.1 500.0M996.3 427.0L996.7 449.5M996.7 449.5L997.0 464.5M997.0 464.5L997.4 487.0M997.4 487.0L997.6 500.0M1003.8 427.0L1004.3 457.0M1004.3 457.0L1004.9 487.0M1004.9 487.0L1005.1 500.0M1011.3 427.0L1011.6 442.0M1011.6 442.0L1012.0 464.5M1012.0 464.5L1012.4 487.0M1012.4 487.0L1012.6 500.0M1018.8 427.0L1019.6 472.0M1019.6 472.0L1020.1 500.0M1026.3 427.0L1026.7 449.5M1026.7 449.5L1027.2 479.5M1027.5 494.5L1027.6 500.0M1033.8 427.0L1034.1 442.0M1034.1 442.0L1034.3 457.0M1034.3 457.0L1035.1 500.0M1041.3 427.0L1041.7 449.5M1041.7 449.5L1042.5 494.5M1042.5 494.5L1042.6 500.0M1048.8 427.0L1049.3 457.0M1049.3 457.0L1050.1 500.0M1056.3 427.0L1056.8 457.0M1056.8 457.0L1057.4 487.0M1057.4 487.0L1057.6 500.0M1063.8 427.0L1064.1 442.0M1064.1 442.0L1064.3 457.0M1071.3 427.0L1071.7 449.5M1071.7 449.5L1072.2 479.5M1072.2 479.5L1072.5 494.5M1072.5 494.5L1072.6 500.0M1079.6 472.0L1080.0 494.5M1080.0 494.5L1080.1 500.0M1086.3 427.0L1086.8 457.0M1087.4 487.0L1087.6 500.0M1093.8 427.0L1094.6 472.0M1094.6 472.0L1094.9 487.0M1094.9 487.0L1095.1 500.0M1101.3 427.0L1101.8 457.0M1101.8 457.0L1102.2 479.5M1102.2 479.5L1102.5 494.5M1102.5 494.5L1102.6 500.0M595.0 415.8L655.0 416.9M655.0 416.9L685.0 417.4M685.0 417.4L707.5 417.8M752.5 418.6L775.0 418.9M775.0 418.9L797.5 419.3M797.5 419.3L827.5 419.9M827.5 419.9L857.5 420.4M857.5 420.4L887.5 420.9M887.5 420.9L947.5 422.0M947.5 422.0L1007.5 423.0M1007.5 423.0L1052.5 423.8M1052.5 423.8L1082.5 424.3M595.0 423.3L617.5 423.7M617.5 423.7L647.5 424.2M647.5 424.2L677.5 424.7M677.5 424.7L707.5 425.3M707.5 425.3L737.5 425.8M737.5 425.8L767.5 426.3M767.5 426.3L797.5 426.8M797.5 426.8L820.0 427.2M820.0 427.2L850.0 427.8M850.0 427.8L910.0 428.8M910.0 428.8L932.5 429.2M932.5 429.2L955.0 429.6M955.0 429.6L977.5 430.0M977.5 430.0L1037.5 431.0M1037.5 431.0L1097.5 432.1M595.0 430.8L625.0 431.3M625.0 431.3L670.0 432.1M670.0 432.1L700.0 432.6M700.0 432.6L730.0 433.2M730.0 433.2L790.0 434.2M790.0 434.2L850.0 435.3M850.0 435.3L880.0 435.8M940.0 436.8L970.0 437.4M970.0 437.4L992.5 437.7M992.5 437.7L1022.5 438.3M1022.5 438.3L1082.5 439.3M1082.5 439.3L1098.0 439.6M595.0 438.3L640.0 439.1M640.0 439.1L670.0 439.6M670.0 439.6L700.0 440.1M730.0 440.7L790.0 441.7M850.0 442.8L910.0 443.8M910.0 443.8L970.0 444.9M970.0 444.9L1030.0 445.9M1052.5 446.3L1098.0 447.1M595.0 445.8L655.0 446.9M655.0 446.9L700.0 447.6M700.0 447.6L722.5 448.0M722.5 448.0L752.5 448.6M752.5 448.6L812.5 449.6M812.5 449.6L842.5 450.1M842.5 450.1L872.5 450.7M872.5 450.7L932.5 451.7M977.5 452.5L1000.0 452.9M1000.0 452.9L1060.0 453.9M1060.0 453.9L1098.0 454.6M595.0 453.3L617.5 453.7M617.5 453.7L662.5 454.5M722.5 455.5L767.5 456.3M872.5 458.2L895.0 458.5M895.0 458.5L940.0 459.3M940.0 459.3L1000.0 460.4M1060.0 461.4L1090.0 461.9M1090.0 461.9L1098.0 462.1M595.0 460.8L625.0 461.3M625.0 461.3L685.0 462.4M685.0 462.4L707.5 462.8M707.5 462.8L730.0 463.2M730.0 463.2L760.0 463.7M790.0 464.2L850.0 465.3M850.0 465.3L910.0 466.3M910.0 466.3L940.0 466.8M985.0 467.6L1007.5 468.0M1090.0 469.4L1098.0 469.6M595.0 468.3L625.0 468.8M625.0 468.8L685.0 469.9M685.0 469.9L745.0 470.9M745.0 470.9L775.0 471.4M775.0 471.4L797.5 471.8M797.5 471.8L827.5 472.4M827.5 472.4L857.5 472.9M857.5 472.9L880.0 473.3M880.0 473.3L902.5 473.7M902.5 473.7L925.0 474.1M925.0 474.1L947.5 474.5M947.5 474.5L992.5 475.2M992.5 475.2L1022.5 475.8M1022.5 475.8L1052.5 476.3M1052.5 476.3L1098.0 477.1M595.0 475.8L617.5 476.2M617.5 476.2L640.0 476.6M640.0 476.6L685.0 477.4M685.0 477.4L715.0 477.9M715.0 477.9L775.0 478.9M775.0 478.9L835.0 480.0M835.0 480.0L865.0 480.5M865.0 480.5L925.0 481.6M925.0 481.6L955.0 482.1M955.0 482.1L977.5 482.5M977.5 482.5L1022.5 483.3M1022.5 483.3L1067.5 484.1M1067.5 484.1L1098.0 484.6M595.0 483.3L655.0 484.4M655.0 484.4L677.5 484.7M677.5 484.7L700.0 485.1M700.0 485.1L722.5 485.5M722.5 485.5L767.5 486.3M767.5 486.3L827.5 487.4M880.0 488.3L925.0 489.1M925.0 489.1L985.0 490.1M1030.0 490.9L1090.0 491.9M595.0 490.8L640.0 491.6M640.0 491.6L685.0 492.4M685.0 492.4L730.0 493.2M730.0 493.2L790.0 494.2M790.0 494.2L835.0 495.0M835.0 495.0L880.0 495.8M880.0 495.8L940.0 496.8M940.0 496.8L962.5 497.2M962.5 497.2L992.5 497.7M1037.5 498.5L1067.5 499.1M1067.5 499.1L1098.0 499.6M595.0 498.3L640.0 499.1M640.0 499.1L662.5 499.5M685.0 499.9L707.5 500.3M707.5 500.3L767.5 501.3M767.5 501.3L790.0 501.7M790.0 501.7L835.0 502.5M835.0 502.5L865.0 503.0M865.0 503.0L887.5 503.4M887.5 503.4L932.5 504.2M932.5 504.2L962.5 504.7M962.5 504.7L992.5 505.2M992.5 505.2L1022.5 505.8M1022.5 505.8L1045.0 506.2M1045.0 506.2L1090.0 506.9M1090.0 506.9L1098.0 507.1M595.0 505.8L655.0 506.9M655.0 506.9L715.0 507.9M715.0 507.9L760.0 508.7M760.0 508.7L820.0 509.7M820.0 509.7L880.0 510.8M880.0 510.8L910.0 511.3M910.0 511.3L940.0 511.8M940.0 511.8L962.5 512.2M962.5 512.2L1022.5 513.3M1022.5 513.3L1052.5 513.8M1052.5 513.8L1098.0 514.6" fill="none" stroke="#dde2ea" stroke-width="0.9"/>
<clipPath id="g9"><path d="M765 430 L1093 432 L1093 480 L830 464Z"/></clipPath>
<path clip-path="url(#g9)" d="M756.0 425.0L756.6 457.0M756.6 457.0L756.9 473.0M756.9 473.0L757.1 485.0M764.0 425.0L764.3 441.0M764.3 441.0L764.6 457.0M764.6 457.0L765.0 481.0M772.0 425.0L772.6 457.0M772.6 457.0L773.1 485.0M780.0 425.0L780.5 449.0M780.5 449.0L780.7 465.0M780.7 465.0L781.1 485.0M788.0 425.0L788.6 457.0M788.6 457.0L789.1 485.0M796.0 425.0L796.6 457.0M796.6 457.0L797.0 481.0M804.0 425.0L804.5 449.0M804.5 449.0L804.9 473.0M804.9 473.0L805.1 485.0M812.0 425.0L812.3 441.0M812.3 441.0L812.7 465.0M812.7 465.0L813.1 485.0M820.0 425.0L820.3 441.0M820.3 441.0L820.7 465.0M820.7 465.0L821.1 485.0M828.0 425.0L828.5 449.0M828.5 449.0L828.7 465.0M836.0 425.0L836.6 457.0M836.6 457.0L836.9 473.0M836.9 473.0L837.1 485.0M844.5 449.0L844.9 473.0M852.0 425.0L852.3 441.0M852.3 441.0L852.9 473.0M852.9 473.0L853.1 485.0M868.0 425.0L868.6 457.0M868.6 457.0L869.1 485.0M876.0 425.0L876.3 441.0M876.3 441.0L876.6 457.0M876.6 457.0L877.1 485.0M884.0 425.0L884.6 457.0M884.6 457.0L885.1 485.0M892.0 425.0L892.6 457.0M892.6 457.0L893.0 481.0M900.0 425.0L900.5 449.0M900.5 449.0L900.7 465.0M900.7 465.0L901.0 481.0M908.0 425.0L908.9 473.0M908.9 473.0L909.1 485.0M916.0 425.0L916.5 449.0M916.5 449.0L916.9 473.0M916.9 473.0L917.1 485.0M924.0 425.0L924.6 457.0M924.6 457.0L924.9 473.0M924.9 473.0L925.1 485.0M932.0 425.0L932.9 473.0M932.9 473.0L933.1 485.0M940.0 425.0L940.3 441.0M940.3 441.0L940.7 465.0M940.7 465.0L941.1 485.0M948.6 457.0L949.1 485.0M956.0 425.0L956.6 457.0M956.6 457.0L957.1 485.0M964.0 425.0L964.3 441.0M964.3 441.0L965.1 485.0M972.0 425.0L972.5 449.0M972.5 449.0L973.1 485.0M980.0 425.0L980.3 441.0M980.3 441.0L981.1 485.0M988.0 425.0L988.3 441.0M988.3 441.0L988.7 465.0M988.7 465.0L989.0 481.0M996.0 425.0L996.3 441.0M996.3 441.0L996.6 457.0M996.6 457.0L997.0 481.0M1004.0 425.0L1004.5 449.0M1004.5 449.0L1004.9 473.0M1012.9 473.0L1013.1 485.0M1020.0 425.0L1020.3 441.0M1020.3 441.0L1020.6 457.0M1020.6 457.0L1021.1 485.0M1028.0 425.0L1028.6 457.0M1028.6 457.0L1029.1 485.0M1036.0 425.0L1036.9 473.0M1044.3 441.0L1044.7 465.0M1044.7 465.0L1045.0 481.0M1052.0 425.0L1052.9 473.0M1052.9 473.0L1053.1 485.0M1060.0 425.0L1060.9 473.0M1060.9 473.0L1061.1 485.0M1068.0 425.0L1068.9 473.0M1068.9 473.0L1069.1 485.0M1076.0 425.0L1076.5 449.0M1076.5 449.0L1076.7 465.0M1076.7 465.0L1077.0 481.0M1084.3 441.0L1084.9 473.0M1084.9 473.0L1085.1 485.0M1092.0 425.0L1092.6 457.0M1092.6 457.0L1093.1 485.0M1100.0 425.0L1100.6 457.0M1100.6 457.0L1101.1 485.0M760.0 416.2L784.0 416.6M784.0 416.6L848.0 417.7M848.0 417.7L880.0 418.3M880.0 418.3L928.0 419.1M928.0 419.1L952.0 419.5M952.0 419.5L976.0 420.0M976.0 420.0L1000.0 420.4M1048.0 421.2L1096.0 422.1M760.0 424.2L808.0 425.0M808.0 425.0L872.0 426.1M872.0 426.1L904.0 426.7M904.0 426.7L936.0 427.3M936.0 427.3L984.0 428.1M984.0 428.1L1032.0 428.9M1032.0 428.9L1064.0 429.5M1064.0 429.5L1096.0 430.1M760.0 432.2L824.0 433.3M856.0 433.9L904.0 434.7M904.0 434.7L968.0 435.8M968.0 435.8L1032.0 436.9M1032.0 436.9L1096.0 438.1M760.0 440.2L808.0 441.0M808.0 441.0L832.0 441.4M832.0 441.4L896.0 442.6M896.0 442.6L928.0 443.1M928.0 443.1L976.0 444.0M976.0 444.0L1040.0 445.1M1040.0 445.1L1088.0 445.9M1088.0 445.9L1098.0 446.1M760.0 448.2L824.0 449.3M824.0 449.3L872.0 450.1M872.0 450.1L896.0 450.6M896.0 450.6L920.0 451.0M984.0 452.1L1032.0 452.9M1032.0 452.9L1064.0 453.5M760.0 456.2L792.0 456.7M792.0 456.7L840.0 457.6M904.0 458.7L936.0 459.3M936.0 459.3L1000.0 460.4M1000.0 460.4L1064.0 461.5M1064.0 461.5L1096.0 462.1M760.0 464.2L792.0 464.7M792.0 464.7L840.0 465.6M840.0 465.6L872.0 466.1M872.0 466.1L904.0 466.7M904.0 466.7L968.0 467.8M968.0 467.8L1000.0 468.4M1000.0 468.4L1048.0 469.2M1048.0 469.2L1072.0 469.6M1072.0 469.6L1098.0 470.1M760.0 472.2L808.0 473.0M808.0 473.0L872.0 474.1M872.0 474.1L936.0 475.3M984.0 476.1L1032.0 476.9M1032.0 476.9L1056.0 477.4M1056.0 477.4L1088.0 477.9M1088.0 477.9L1098.0 478.1M760.0 480.2L792.0 480.7M792.0 480.7L824.0 481.3M824.0 481.3L872.0 482.1M872.0 482.1L920.0 483.0M920.0 483.0L944.0 483.4M944.0 483.4L968.0 483.8M968.0 483.8L1032.0 484.9M1032.0 484.9L1096.0 486.1M760.0 488.2L784.0 488.6M784.0 488.6L808.0 489.0M808.0 489.0L872.0 490.1M872.0 490.1L936.0 491.3M936.0 491.3L968.0 491.8M968.0 491.8L992.0 492.2M992.0 492.2L1040.0 493.1M1040.0 493.1L1098.0 494.1" fill="none" stroke="#dde2ea" stroke-width="0.9"/>
<clipPath id="g10"><path d="M600 200 L745 200 L752 300 L752 380 L700 410 L600 425Z"/></clipPath>
<path clip-path="url(#g10)" d="M560.9 211.0L554.6 259.0M554.6 259.0L551.5 283.0M551.5 283.0L545.1 331.0M538.8 379.0L536.7 395.0M536.7 395.0L532.1 430.0M571.0 195.0L568.9 211.0M568.9 211.0L565.8 235.0M561.6 267.0L559.5 283.0M559.5 283.0L553.1 331.0M553.1 331.0L548.9 363.0M579.0 195.0L574.8 227.0M574.8 227.0L571.7 251.0M571.7 251.0L565.3 299.0M565.3 299.0L561.1 331.0M561.1 331.0L556.9 363.0M556.9 363.0L554.8 379.0M554.8 379.0L550.6 411.0M550.6 411.0L548.1 430.0M582.8 227.0L580.7 243.0M574.4 291.0L570.2 323.0M568.1 339.0L564.9 363.0M564.9 363.0L558.6 411.0M558.6 411.0L556.1 430.0M588.7 243.0L584.5 275.0M582.4 291.0L579.2 315.0M579.2 315.0L575.0 347.0M575.0 347.0L572.9 363.0M572.9 363.0L566.6 411.0M603.0 195.0L599.9 219.0M599.9 219.0L595.7 251.0M595.7 251.0L592.5 275.0M592.5 275.0L589.3 299.0M589.3 299.0L585.1 331.0M585.1 331.0L582.0 355.0M579.9 371.0L575.7 403.0M575.7 403.0L572.5 427.0M611.0 195.0L607.9 219.0M607.9 219.0L603.7 251.0M603.7 251.0L599.5 283.0M599.5 283.0L596.3 307.0M594.2 323.0L592.1 339.0M592.1 339.0L588.9 363.0M584.7 395.0L581.5 419.0M581.5 419.0L580.1 430.0M619.0 195.0L615.9 219.0M615.9 219.0L611.7 251.0M611.7 251.0L608.5 275.0M608.5 275.0L606.4 291.0M606.4 291.0L604.3 307.0M602.2 323.0L598.0 355.0M598.0 355.0L593.8 387.0M593.8 387.0L591.7 403.0M591.7 403.0L588.1 430.0M627.0 195.0L622.8 227.0M622.8 227.0L620.7 243.0M620.7 243.0L616.5 275.0M616.5 275.0L614.4 291.0M614.4 291.0L608.1 339.0M608.1 339.0L604.9 363.0M604.9 363.0L598.6 411.0M598.6 411.0L596.1 430.0M635.0 195.0L631.9 219.0M628.7 243.0L624.5 275.0M621.3 299.0L615.0 347.0M615.0 347.0L610.8 379.0M610.8 379.0L606.6 411.0M606.6 411.0L604.5 427.0M643.0 195.0L638.8 227.0M638.8 227.0L635.7 251.0M629.3 299.0L626.2 323.0M626.2 323.0L623.0 347.0M623.0 347.0L619.9 371.0M619.9 371.0L616.7 395.0M616.7 395.0L613.5 419.0M613.5 419.0L612.1 430.0M651.0 195.0L646.8 227.0M646.8 227.0L640.5 275.0M640.5 275.0L637.3 299.0M637.3 299.0L635.2 315.0M635.2 315.0L631.0 347.0M631.0 347.0L627.9 371.0M627.9 371.0L624.7 395.0M624.7 395.0L621.5 419.0M621.5 419.0L620.1 430.0M659.0 195.0L652.7 243.0M652.7 243.0L646.4 291.0M638.0 355.0L634.8 379.0M634.8 379.0L631.7 403.0M631.7 403.0L628.1 430.0M660.7 243.0L657.6 267.0M657.6 267.0L651.2 315.0M651.2 315.0L649.1 331.0M649.1 331.0L646.0 355.0M646.0 355.0L643.9 371.0M643.9 371.0L640.7 395.0M640.7 395.0L636.5 427.0M675.0 195.0L671.9 219.0M671.9 219.0L668.7 243.0M664.5 275.0L662.4 291.0M662.4 291.0L659.2 315.0M659.2 315.0L656.1 339.0M648.7 395.0L644.5 427.0M683.0 195.0L678.8 227.0M674.6 259.0L668.3 307.0M668.3 307.0L665.1 331.0M658.8 379.0L655.7 403.0M655.7 403.0L653.5 419.0M653.5 419.0L652.1 430.0M691.0 195.0L684.7 243.0M684.7 243.0L681.6 267.0M681.6 267.0L679.5 283.0M679.5 283.0L673.1 331.0M673.1 331.0L666.8 379.0M699.0 195.0L692.7 243.0M692.7 243.0L686.4 291.0M686.4 291.0L680.1 339.0M680.1 339.0L673.8 387.0M673.8 387.0L671.7 403.0M671.7 403.0L668.1 430.0M707.0 195.0L703.9 219.0M701.8 235.0L697.6 267.0M697.6 267.0L691.2 315.0M691.2 315.0L689.1 331.0M689.1 331.0L682.8 379.0M682.8 379.0L679.7 403.0M679.7 403.0L676.5 427.0M715.0 195.0L708.7 243.0M705.6 267.0L699.2 315.0M695.0 347.0L688.7 395.0M688.7 395.0L685.5 419.0M723.0 195.0L720.9 211.0M720.9 211.0L716.7 243.0M713.6 267.0L711.5 283.0M707.2 315.0L703.0 347.0M703.0 347.0L696.7 395.0M696.7 395.0L692.1 430.0M731.0 195.0L728.9 211.0M728.9 211.0L724.7 243.0M724.7 243.0L718.4 291.0M718.4 291.0L712.1 339.0M712.1 339.0L705.8 387.0M705.8 387.0L701.5 419.0M701.5 419.0L700.1 430.0M739.0 195.0L734.8 227.0M734.8 227.0L732.7 243.0M732.7 243.0L728.5 275.0M725.3 299.0L719.0 347.0M719.0 347.0L714.8 379.0M714.8 379.0L711.7 403.0M711.7 403.0L708.1 430.0M743.9 219.0L741.8 235.0M741.8 235.0L739.7 251.0M739.7 251.0L735.5 283.0M735.5 283.0L729.1 331.0M727.0 347.0L724.9 363.0M724.9 363.0L722.8 379.0M752.9 211.0L749.8 235.0M749.8 235.0L747.7 251.0M745.6 267.0L739.2 315.0M739.2 315.0L736.1 339.0M736.1 339.0L734.0 355.0M734.0 355.0L731.9 371.0M731.9 371.0L725.5 419.0M725.5 419.0L724.1 430.0M763.0 195.0L760.9 211.0M760.9 211.0L757.8 235.0M757.8 235.0L753.6 267.0M743.0 347.0L736.7 395.0M736.7 395.0L732.5 427.0M768.9 211.0L762.6 259.0M758.4 291.0L754.2 323.0M754.2 323.0L750.0 355.0M750.0 355.0L745.8 387.0M745.8 387.0L742.6 411.0M742.6 411.0L740.1 430.0M775.9 219.0L772.7 243.0M770.6 259.0L767.5 283.0M767.5 283.0L764.3 307.0M764.3 307.0L761.1 331.0M761.1 331.0L759.0 347.0M750.6 411.0L748.1 430.0M787.0 195.0L780.7 243.0M774.4 291.0L770.2 323.0M770.2 323.0L763.9 371.0M763.9 371.0L760.7 395.0M760.7 395.0L757.5 419.0M757.5 419.0L756.1 430.0M659.0 160.5L683.0 156.9M683.0 156.9L707.0 153.3M707.0 153.3L739.0 148.5M739.0 148.5L757.0 145.8M595.0 178.0L659.0 168.5M659.0 168.5L707.0 161.3M707.0 161.3L739.0 156.5M595.0 186.0L627.0 181.2M627.0 181.2L659.0 176.5M659.0 176.5L683.0 172.9M683.0 172.9L715.0 168.1M715.0 168.1L747.0 163.3M747.0 163.3L757.0 161.8M595.0 194.0L643.0 186.9M643.0 186.9L691.0 179.7M691.0 179.7L715.0 176.1M715.0 176.1L747.0 171.3M747.0 171.3L757.0 169.8M595.0 202.0L659.0 192.5M659.0 192.5L683.0 188.9M683.0 188.9L715.0 184.1M747.0 179.3L757.0 177.8M595.0 210.0L659.0 200.5M659.0 200.5L683.0 196.9M683.0 196.9L731.0 189.7M731.0 189.7L755.0 186.1M595.0 218.0L619.0 214.4M619.0 214.4L643.0 210.9M643.0 210.9L667.0 207.3M667.0 207.3L731.0 197.7M595.0 226.0L659.0 216.5M723.0 206.9L747.0 203.3M747.0 203.3L757.0 201.8M595.0 234.0L627.0 229.2M675.0 222.1L723.0 214.9M723.0 214.9L747.0 211.3M747.0 211.3L757.0 209.8M595.0 242.0L659.0 232.5M659.0 232.5L723.0 222.9M723.0 222.9L757.0 217.8M595.0 250.0L643.0 242.9M643.0 242.9L675.0 238.1M675.0 238.1L707.0 233.3M707.0 233.3L739.0 228.5M739.0 228.5L757.0 225.8M643.0 250.9L691.0 243.7M691.0 243.7L755.0 234.1M595.0 266.0L619.0 262.4M619.0 262.4L651.0 257.7M723.0 246.9L757.0 241.8M595.0 274.0L619.0 270.4M619.0 270.4L651.0 265.7M651.0 265.7L715.0 256.1M715.0 256.1L757.0 249.8M595.0 282.0L659.0 272.5M659.0 272.5L683.0 268.9M683.0 268.9L747.0 259.3M747.0 259.3L757.0 257.8M619.0 286.4L643.0 282.9M643.0 282.9L707.0 273.3M707.0 273.3L755.0 266.1M595.0 298.0L659.0 288.5M659.0 288.5L683.0 284.9M683.0 284.9L731.0 277.7M731.0 277.7L755.0 274.1M659.0 296.5L683.0 292.9M683.0 292.9L707.0 289.3M707.0 289.3L757.0 281.8M619.0 310.4L683.0 300.9M731.0 293.7L757.0 289.8M595.0 322.0L643.0 314.9M643.0 314.9L667.0 311.3M667.0 311.3L699.0 306.5M699.0 306.5L757.0 297.8M595.0 330.0L643.0 322.9M643.0 322.9L667.0 319.3M667.0 319.3L699.0 314.5M699.0 314.5L757.0 305.8M595.0 338.0L619.0 334.4M619.0 334.4L651.0 329.7M651.0 329.7L715.0 320.1M715.0 320.1L739.0 316.5M595.0 346.0L619.0 342.4M651.0 337.7L683.0 332.9M683.0 332.9L715.0 328.1M715.0 328.1L747.0 323.3M747.0 323.3L757.0 321.8M595.0 354.0L627.0 349.2M627.0 349.2L651.0 345.7M651.0 345.7L715.0 336.1M715.0 336.1L747.0 331.3M747.0 331.3L757.0 329.8M595.0 362.0L643.0 354.9M643.0 354.9L667.0 351.3M595.0 370.0L619.0 366.4M619.0 366.4L643.0 362.9M667.0 359.3L699.0 354.5M699.0 354.5L723.0 350.9M723.0 350.9L747.0 347.3M747.0 347.3L757.0 345.8M595.0 378.0L627.0 373.2M627.0 373.2L651.0 369.7M651.0 369.7L683.0 364.9M683.0 364.9L715.0 360.1M715.0 360.1L739.0 356.5M595.0 386.0L627.0 381.2M627.0 381.2L675.0 374.1M675.0 374.1L707.0 369.3M707.0 369.3L755.0 362.1M595.0 394.0L659.0 384.5M659.0 384.5L723.0 374.9M723.0 374.9L757.0 369.8M627.0 397.2L675.0 390.1M675.0 390.1L707.0 385.3M707.0 385.3L731.0 381.7M731.0 381.7L755.0 378.1M595.0 410.0L643.0 402.9M643.0 402.9L691.0 395.7M691.0 395.7L739.0 388.5M739.0 388.5L757.0 385.8M595.0 418.0L627.0 413.2M627.0 413.2L651.0 409.7M683.0 404.9L707.0 401.3M595.0 426.0L627.0 421.2M627.0 421.2L651.0 417.7M651.0 417.7L715.0 408.1M739.0 404.5L757.0 401.8M595.0 434.0L659.0 424.5M659.0 424.5L723.0 414.9M723.0 414.9L755.0 410.1M595.0 442.0L619.0 438.4M619.0 438.4L667.0 431.3M667.0 431.3L691.0 427.7M691.0 427.7L739.0 420.5M739.0 420.5L757.0 417.8M595.0 450.0L659.0 440.5M659.0 440.5L683.0 436.9M747.0 427.3L757.0 425.8" fill="none" stroke="#dde2ea" stroke-width="0.9"/>
<clipPath id="g11"><path d="M398 0 L600 0 L600 135 L560 160 L440 165 L400 120Z"/></clipPath>
<path clip-path="url(#g11)" d="M366.6 -5.0L362.1 25.0M355.4 70.0L352.0 92.5M352.0 92.5L348.7 115.0M348.7 115.0L341.9 160.0M341.9 160.0L340.4 170.0M374.1 -5.0L371.8 10.0M371.8 10.0L369.6 25.0M369.6 25.0L366.2 47.5M366.2 47.5L362.9 70.0M362.9 70.0L356.2 115.0M356.2 115.0L351.7 145.0M351.7 145.0L347.9 170.0M378.2 17.5L373.7 47.5M373.7 47.5L371.5 62.5M371.5 62.5L369.3 77.5M369.3 77.5L362.5 122.5M362.5 122.5L359.2 145.0M359.2 145.0L356.9 160.0M356.9 160.0L355.4 170.0M386.8 10.0L383.5 32.5M383.5 32.5L380.1 55.0M380.1 55.0L373.4 100.0M373.4 100.0L368.9 130.0M365.5 152.5L363.3 167.5M396.6 -5.0L389.9 40.0M389.9 40.0L383.1 85.0M383.1 85.0L376.4 130.0M376.4 130.0L373.0 152.5M373.0 152.5L370.4 170.0M404.1 -5.0L397.4 40.0M397.4 40.0L390.6 85.0M390.6 85.0L388.4 100.0M388.4 100.0L385.0 122.5M381.7 145.0L377.9 170.0M411.6 -5.0L408.2 17.5M408.2 17.5L403.7 47.5M403.7 47.5L397.0 92.5M397.0 92.5L394.8 107.5M394.8 107.5L391.4 130.0M391.4 130.0L389.2 145.0M389.2 145.0L385.4 170.0M419.1 -5.0L415.7 17.5M415.7 17.5L409.0 62.5M402.3 107.5L395.5 152.5M395.5 152.5L392.9 170.0M426.6 -5.0L423.2 17.5M423.2 17.5L416.5 62.5M416.5 62.5L409.8 107.5M409.8 107.5L405.3 137.5M405.3 137.5L401.9 160.0M401.9 160.0L400.4 170.0M434.1 -5.0L431.8 10.0M431.8 10.0L427.4 40.0M427.4 40.0L424.0 62.5M424.0 62.5L421.8 77.5M421.8 77.5L415.0 122.5M410.5 152.5L407.9 170.0M441.6 -5.0L434.9 40.0M434.9 40.0L430.4 70.0M430.4 70.0L427.0 92.5M427.0 92.5L423.7 115.0M423.7 115.0L419.2 145.0M419.2 145.0L415.4 170.0M442.4 40.0L440.1 55.0M440.1 55.0L437.9 70.0M437.9 70.0L431.2 115.0M431.2 115.0L426.7 145.0M426.7 145.0L422.9 170.0M456.6 -5.0L453.2 17.5M453.2 17.5L451.0 32.5M451.0 32.5L447.6 55.0M447.6 55.0L445.4 70.0M445.4 70.0L440.9 100.0M440.9 100.0L437.5 122.5M437.5 122.5L430.8 167.5M464.1 -5.0L460.7 17.5M460.7 17.5L454.0 62.5M454.0 62.5L450.6 85.0M450.6 85.0L443.9 130.0M443.9 130.0L441.7 145.0M441.7 145.0L438.3 167.5M471.6 -5.0L468.2 17.5M463.7 47.5L460.4 70.0M460.4 70.0L455.9 100.0M455.9 100.0L449.2 145.0M449.2 145.0L445.4 170.0M479.1 -5.0L474.6 25.0M474.6 25.0L470.1 55.0M470.1 55.0L467.9 70.0M467.9 70.0L464.5 92.5M464.5 92.5L461.2 115.0M461.2 115.0L456.7 145.0M456.7 145.0L454.4 160.0M454.4 160.0L452.9 170.0M477.6 55.0L473.1 85.0M473.1 85.0L469.8 107.5M469.8 107.5L467.5 122.5M467.5 122.5L460.8 167.5M494.1 -5.0L489.6 25.0M489.6 25.0L487.4 40.0M487.4 40.0L482.9 70.0M482.9 70.0L476.2 115.0M476.2 115.0L472.8 137.5M472.8 137.5L468.3 167.5M501.6 -5.0L499.3 10.0M499.3 10.0L496.0 32.5M496.0 32.5L493.7 47.5M490.4 70.0L483.7 115.0M483.7 115.0L476.9 160.0M476.9 160.0L475.4 170.0M509.1 -5.0L505.7 17.5M505.7 17.5L499.0 62.5M494.5 92.5L490.0 122.5M516.6 -5.0L513.2 17.5M513.2 17.5L511.0 32.5M511.0 32.5L507.6 55.0M507.6 55.0L504.3 77.5M504.3 77.5L499.8 107.5M499.8 107.5L493.0 152.5M493.0 152.5L490.4 170.0M519.6 25.0L512.9 70.0M512.9 70.0L509.5 92.5M509.5 92.5L507.3 107.5M507.3 107.5L500.5 152.5M500.5 152.5L497.9 170.0M531.6 -5.0L529.3 10.0M526.0 32.5L521.5 62.5M521.5 62.5L519.3 77.5M519.3 77.5L517.0 92.5M517.0 92.5L510.3 137.5M510.3 137.5L505.4 170.0M539.1 -5.0L534.6 25.0M534.6 25.0L532.4 40.0M529.0 62.5L524.5 92.5M524.5 92.5L517.8 137.5M517.8 137.5L515.5 152.5M515.5 152.5L513.3 167.5M546.6 -5.0L544.3 10.0M544.3 10.0L542.1 25.0M542.1 25.0L535.4 70.0M535.4 70.0L530.9 100.0M530.9 100.0L528.7 115.0M528.7 115.0L524.2 145.0M554.1 -5.0L550.7 17.5M550.7 17.5L547.4 40.0M547.4 40.0L545.1 55.0M540.6 85.0L533.9 130.0M533.9 130.0L531.7 145.0M531.7 145.0L529.4 160.0M529.4 160.0L527.9 170.0M561.6 -5.0L559.3 10.0M559.3 10.0L556.0 32.5M549.3 77.5L542.5 122.5M542.5 122.5L539.2 145.0M539.2 145.0L535.4 170.0M569.1 -5.0L566.8 10.0M566.8 10.0L560.1 55.0M560.1 55.0L555.6 85.0M555.6 85.0L552.3 107.5M548.9 130.0L546.7 145.0M546.7 145.0L542.9 170.0M576.6 -5.0L574.3 10.0M572.1 25.0L565.4 70.0M565.4 70.0L562.0 92.5M562.0 92.5L557.5 122.5M554.2 145.0L550.4 170.0M580.7 17.5L577.4 40.0M577.4 40.0L575.1 55.0M568.4 100.0L563.9 130.0M563.9 130.0L560.5 152.5M560.5 152.5L558.3 167.5M591.6 -5.0L589.3 10.0M589.3 10.0L582.6 55.0M582.6 55.0L579.3 77.5M572.5 122.5L569.2 145.0M569.2 145.0L565.4 170.0M599.1 -5.0L595.7 17.5M595.7 17.5L591.2 47.5M591.2 47.5L589.0 62.5M589.0 62.5L584.5 92.5M584.5 92.5L577.8 137.5M577.8 137.5L574.4 160.0M604.3 10.0L602.1 25.0M602.1 25.0L597.6 55.0M597.6 55.0L593.1 85.0M593.1 85.0L589.8 107.5M589.8 107.5L586.4 130.0M586.4 130.0L580.4 170.0M614.1 -5.0L611.8 10.0M607.4 40.0L600.6 85.0M600.6 85.0L598.4 100.0M595.0 122.5L588.3 167.5M621.6 -5.0L614.9 40.0M611.5 62.5L609.3 77.5M609.3 77.5L605.9 100.0M605.9 100.0L603.7 115.0M603.7 115.0L596.9 160.0M629.1 -5.0L625.7 17.5M625.7 17.5L621.2 47.5M621.2 47.5L619.0 62.5M616.8 77.5L610.0 122.5M610.0 122.5L606.7 145.0M606.7 145.0L602.9 170.0M483.0 -22.5L528.0 -24.9M528.0 -24.9L558.0 -26.5M558.0 -26.5L603.0 -28.8M393.0 -10.3L438.0 -12.7M438.0 -12.7L468.0 -14.3M468.0 -14.3L528.0 -17.4M528.0 -17.4L558.0 -19.0M393.0 -2.8L423.0 -4.4M423.0 -4.4L453.0 -6.0M453.0 -6.0L498.0 -8.3M498.0 -8.3L558.0 -11.5M558.0 -11.5L588.0 -13.0M588.0 -13.0L605.0 -13.9M438.0 2.3L483.0 -0.0M483.0 -0.0L543.0 -3.2M573.0 -4.8L605.0 -6.4M393.0 12.2L453.0 9.0M483.0 7.5L528.0 5.1M573.0 2.7L605.0 1.1M438.0 17.3L460.5 16.1M460.5 16.1L520.5 13.0M520.5 13.0L550.5 11.4M550.5 11.4L595.5 9.1M595.5 9.1L605.0 8.6M393.0 27.2L415.5 26.0M438.0 24.8L483.0 22.5M483.0 22.5L505.5 21.3M505.5 21.3L565.5 18.1M565.5 18.1L605.0 16.1M393.0 34.7L438.0 32.3M438.0 32.3L483.0 30.0M483.0 30.0L505.5 28.8M505.5 28.8L550.5 26.4M550.5 26.4L595.5 24.1M595.5 24.1L605.0 23.6M393.0 42.2L438.0 39.8M438.0 39.8L483.0 37.5M483.0 37.5L513.0 35.9M535.5 34.7L595.5 31.6M595.5 31.6L605.0 31.1M393.0 49.7L438.0 47.3M438.0 47.3L468.0 45.7M513.0 43.4L535.5 42.2M535.5 42.2L558.0 41.0M393.0 57.2L453.0 54.0M513.0 50.9L558.0 48.5M558.0 48.5L580.5 47.3M393.0 64.7L415.5 63.5M415.5 63.5L445.5 61.9M445.5 61.9L468.0 60.7M468.0 60.7L498.0 59.2M498.0 59.2L558.0 56.0M558.0 56.0L603.0 53.7M393.0 72.2L423.0 70.6M423.0 70.6L483.0 67.5M483.0 67.5L513.0 65.9M513.0 65.9L543.0 64.3M543.0 64.3L573.0 62.7M573.0 62.7L595.5 61.6M595.5 61.6L605.0 61.1M393.0 79.7L415.5 78.5M415.5 78.5L438.0 77.3M460.5 76.1L505.5 73.8M588.0 69.5L605.0 68.6M393.0 87.2L438.0 84.8M438.0 84.8L468.0 83.2M468.0 83.2L513.0 80.9M513.0 80.9L558.0 78.5M558.0 78.5L588.0 77.0M588.0 77.0L605.0 76.1M393.0 94.7L415.5 93.5M415.5 93.5L460.5 91.1M460.5 91.1L483.0 90.0M483.0 90.0L505.5 88.8M505.5 88.8L565.5 85.6M565.5 85.6L605.0 83.6M393.0 102.2L438.0 99.8M438.0 99.8L468.0 98.2M468.0 98.2L513.0 95.9M513.0 95.9L543.0 94.3M393.0 109.7L438.0 107.3M438.0 107.3L468.0 105.7M520.5 103.0L550.5 101.4M550.5 101.4L605.0 98.6M393.0 117.2L415.5 116.0M415.5 116.0L438.0 114.8M438.0 114.8L468.0 113.2M468.0 113.2L498.0 111.7M528.0 110.1L588.0 107.0M393.0 124.7L423.0 123.1M423.0 123.1L468.0 120.7M468.0 120.7L528.0 117.6M528.0 117.6L550.5 116.4M550.5 116.4L580.5 114.8M393.0 132.2L438.0 129.8M438.0 129.8L460.5 128.6M460.5 128.6L520.5 125.5M550.5 123.9L605.0 121.1M393.0 139.7L453.0 136.5M453.0 136.5L475.5 135.4M475.5 135.4L498.0 134.2M558.0 131.0L605.0 128.6M393.0 147.2L438.0 144.8M438.0 144.8L460.5 143.6M460.5 143.6L520.5 140.5M520.5 140.5L565.5 138.1M565.5 138.1L595.5 136.6M595.5 136.6L605.0 136.1M393.0 154.7L438.0 152.3M438.0 152.3L498.0 149.2M498.0 149.2L528.0 147.6M528.0 147.6L558.0 146.0M393.0 162.2L438.0 159.8M438.0 159.8L460.5 158.6M460.5 158.6L505.5 156.3M505.5 156.3L565.5 153.1M565.5 153.1L605.0 151.1M393.0 169.7L423.0 168.1M423.0 168.1L483.0 165.0M543.0 161.8L603.0 158.7M393.0 177.2L438.0 174.8M438.0 174.8L460.5 173.6M460.5 173.6L520.5 170.5M520.5 170.5L550.5 168.9M550.5 168.9L573.0 167.7M573.0 167.7L605.0 166.1" fill="none" stroke="#dde2ea" stroke-width="0.9"/>
<clipPath id="g12"><path d="M600 0 L690 0 L686 100 L610 130Z"/></clipPath>
<path clip-path="url(#g12)" d="M576.7 -5.0L570.0 49.0M570.0 49.0L567.8 67.0M567.8 67.0L563.4 103.0M563.4 103.0L559.5 135.0M581.3 22.0L579.1 40.0M579.1 40.0L576.9 58.0M576.9 58.0L572.5 94.0M570.3 112.0L567.5 135.0M592.7 -5.0L588.2 31.0M588.2 31.0L583.8 67.0M583.8 67.0L581.6 85.0M581.6 85.0L577.2 121.0M600.7 -5.0L594.0 49.0M594.0 49.0L589.6 85.0M589.6 85.0L587.4 103.0M587.4 103.0L585.2 121.0M608.7 -5.0L606.4 13.0M606.4 13.0L603.1 40.0M616.7 -5.0L612.2 31.0M612.2 31.0L608.9 58.0M608.9 58.0L602.3 112.0M602.3 112.0L599.5 135.0M624.7 -5.0L620.2 31.0M620.2 31.0L615.8 67.0M615.8 67.0L609.2 121.0M609.2 121.0L607.5 135.0M629.3 22.0L627.1 40.0M624.9 58.0L618.3 112.0M618.3 112.0L615.5 135.0M640.7 -5.0L636.2 31.0M636.2 31.0L634.0 49.0M630.7 76.0L624.1 130.0M648.7 -5.0L645.3 22.0M645.3 22.0L643.1 40.0M643.1 40.0L638.7 76.0M638.7 76.0L636.5 94.0M636.5 94.0L633.2 121.0M633.2 121.0L631.5 135.0M656.7 -5.0L653.3 22.0M646.7 76.0L644.5 94.0M644.5 94.0L640.1 130.0M664.7 -5.0L661.3 22.0M661.3 22.0L654.7 76.0M654.7 76.0L650.3 112.0M672.7 -5.0L670.4 13.0M670.4 13.0L668.2 31.0M661.6 85.0L658.3 112.0M658.3 112.0L655.5 135.0M680.7 -5.0L678.4 13.0M678.4 13.0L671.8 67.0M671.8 67.0L665.2 121.0M665.2 121.0L663.5 135.0M688.7 -5.0L682.0 49.0M682.0 49.0L675.4 103.0M675.4 103.0L673.2 121.0M673.2 121.0L671.5 135.0M696.7 -5.0L693.3 22.0M693.3 22.0L690.0 49.0M690.0 49.0L683.4 103.0M683.4 103.0L679.5 135.0M704.7 -5.0L701.3 22.0M701.3 22.0L696.9 58.0M712.7 -5.0L709.3 22.0M702.7 76.0L700.5 94.0M595.0 -10.5L627.0 -11.0M627.0 -11.0L675.0 -11.9M675.0 -11.9L695.0 -12.2M595.0 -1.5L627.0 -2.0M627.0 -2.0L675.0 -2.9M675.0 -2.9L695.0 -3.2M595.0 7.5L643.0 6.7M619.0 16.1L683.0 15.0M683.0 15.0L695.0 14.8M595.0 25.5L643.0 24.7M643.0 24.7L667.0 24.3M619.0 34.1L683.0 33.0M683.0 33.0L695.0 32.8M659.0 42.4L695.0 41.8M619.0 52.1L643.0 51.7M643.0 51.7L667.0 51.3M667.0 51.3L691.0 50.8M595.0 61.5L659.0 60.4M659.0 60.4L683.0 60.0M683.0 60.0L695.0 59.8M659.0 69.4L691.0 68.8M627.0 79.0L675.0 78.1M675.0 78.1L695.0 77.8M595.0 88.5L627.0 88.0M651.0 87.5L683.0 87.0M683.0 87.0L695.0 86.8M595.0 97.5L659.0 96.4M659.0 96.4L683.0 96.0M683.0 96.0L695.0 95.8M659.0 105.4L695.0 104.8M595.0 115.5L627.0 115.0M627.0 115.0L691.0 113.8M595.0 124.5L659.0 123.4M659.0 123.4L691.0 122.8M595.0 133.5L643.0 132.7M643.0 132.7L675.0 132.1" fill="none" stroke="#dde2ea" stroke-width="0.9"/>
<clipPath id="g13"><path d="M700 0 L728 0 L735 90 L695 92Z"/></clipPath>
<path clip-path="url(#g13)" d="M687.0 13.0L687.0 31.0M687.0 31.0L687.0 49.0M687.0 49.0L687.0 67.0M687.0 67.0L687.0 94.0M695.0 -5.0L695.0 22.0M695.0 22.0L695.0 76.0M695.0 76.0L695.0 97.0M703.0 -5.0L703.0 31.0M703.0 31.0L703.0 58.0M711.0 -5.0L711.0 31.0M711.0 31.0L711.0 58.0M711.0 58.0L711.0 94.0M719.0 22.0L719.0 49.0M719.0 49.0L719.0 76.0M719.0 76.0L719.0 97.0M727.0 -5.0L727.0 13.0M727.0 13.0L727.0 49.0M727.0 49.0L727.0 76.0M727.0 76.0L727.0 97.0M735.0 31.0L735.0 67.0M690.0 -9.0L738.0 -9.0M690.0 0.0L740.0 0.0M722.0 9.0L740.0 9.0M690.0 18.0L722.0 18.0M722.0 18.0L740.0 18.0M690.0 27.0L714.0 27.0M714.0 27.0L740.0 27.0M714.0 36.0L740.0 36.0M690.0 45.0L722.0 45.0M722.0 45.0L740.0 45.0M690.0 72.0L740.0 72.0M690.0 81.0L722.0 81.0M722.0 81.0L740.0 81.0M690.0 90.0L722.0 90.0" fill="none" stroke="#dde2ea" stroke-width="0.9"/>
<clipPath id="g14"><path d="M745 0 L912 0 L910 60 L850 66 L790 92 L752 95Z"/></clipPath>
<path clip-path="url(#g14)" d="M736.5 -5.0L736.5 22.0M736.5 22.0L736.5 49.0M736.5 49.0L736.5 76.0M745.0 -5.0L745.0 13.0M745.0 13.0L745.0 49.0M745.0 49.0L745.0 67.0M745.0 67.0L745.0 85.0M753.5 -5.0L753.5 13.0M753.5 31.0L753.5 67.0M753.5 67.0L753.5 100.0M762.0 -5.0L762.0 31.0M762.0 31.0L762.0 85.0M762.0 85.0L762.0 100.0M770.5 -5.0L770.5 13.0M770.5 13.0L770.5 40.0M770.5 40.0L770.5 94.0M770.5 94.0L770.5 100.0M779.0 -5.0L779.0 49.0M779.0 49.0L779.0 67.0M779.0 67.0L779.0 100.0M787.5 -5.0L787.5 31.0M787.5 31.0L787.5 85.0M787.5 85.0L787.5 100.0M796.0 -5.0L796.0 49.0M796.0 49.0L796.0 67.0M796.0 67.0L796.0 100.0M804.5 49.0L804.5 85.0M804.5 85.0L804.5 100.0M813.0 -5.0L813.0 13.0M813.0 13.0L813.0 67.0M813.0 67.0L813.0 100.0M821.5 -5.0L821.5 31.0M821.5 31.0L821.5 85.0M830.0 -5.0L830.0 13.0M830.0 49.0L830.0 85.0M830.0 85.0L830.0 100.0M838.5 13.0L838.5 40.0M838.5 40.0L838.5 67.0M847.0 -5.0L847.0 49.0M847.0 49.0L847.0 67.0M847.0 67.0L847.0 94.0M847.0 94.0L847.0 100.0M855.5 -5.0L855.5 22.0M855.5 22.0L855.5 40.0M855.5 40.0L855.5 76.0M855.5 76.0L855.5 100.0M864.0 -5.0L864.0 31.0M864.0 31.0L864.0 58.0M864.0 94.0L864.0 100.0M872.5 -5.0L872.5 49.0M872.5 49.0L872.5 67.0M872.5 67.0L872.5 100.0M881.0 -5.0L881.0 13.0M881.0 13.0L881.0 31.0M881.0 31.0L881.0 58.0M881.0 58.0L881.0 100.0M889.5 -5.0L889.5 22.0M889.5 49.0L889.5 76.0M889.5 76.0L889.5 100.0M898.0 -5.0L898.0 22.0M898.0 22.0L898.0 58.0M898.0 58.0L898.0 76.0M898.0 76.0L898.0 100.0M906.5 -5.0L906.5 31.0M906.5 31.0L906.5 67.0M906.5 67.0L906.5 85.0M906.5 85.0L906.5 100.0M915.0 -5.0L915.0 22.0M915.0 94.0L915.0 100.0M740.0 -12.0L765.5 -11.6M833.5 -10.4L901.5 -9.2M901.5 -9.2L917.0 -8.9M765.5 -2.6L799.5 -2.0M867.5 -0.8L917.0 0.1M740.0 6.0L808.0 7.2M740.0 15.0L765.5 15.4M765.5 15.4L799.5 16.0M799.5 16.0L825.0 16.5M825.0 16.5L850.5 16.9M850.5 16.9L876.0 17.4M740.0 24.0L765.5 24.4M765.5 24.4L799.5 25.0M799.5 25.0L825.0 25.5M825.0 25.5L893.0 26.7M893.0 26.7L917.0 27.1M765.5 33.4L791.0 33.9M791.0 33.9L825.0 34.5M825.0 34.5L850.5 34.9M901.5 35.8L917.0 36.1M740.0 42.0L774.0 42.6M774.0 42.6L799.5 43.0M833.5 43.6L867.5 44.2M867.5 44.2L893.0 44.7M893.0 44.7L917.0 45.1M740.0 51.0L791.0 51.9M791.0 51.9L825.0 52.5M850.5 52.9L901.5 53.8M740.0 60.0L774.0 60.6M859.0 62.1L884.5 62.5M884.5 62.5L917.0 63.1M740.0 69.0L791.0 69.9M791.0 69.9L816.5 70.3M850.5 70.9L917.0 72.1M740.0 78.0L791.0 78.9M791.0 78.9L859.0 80.1M740.0 87.0L791.0 87.9M791.0 87.9L816.5 88.3M816.5 88.3L842.0 88.8M842.0 88.8L893.0 89.7M893.0 89.7L917.0 90.1M740.0 96.0L808.0 97.2M808.0 97.2L833.5 97.6M884.5 98.5L910.0 99.0M910.0 99.0L917.0 99.1M740.0 105.0L808.0 106.2M808.0 106.2L859.0 107.1M859.0 107.1L910.0 108.0M910.0 108.0L917.0 108.1" fill="none" stroke="#dde2ea" stroke-width="0.9"/>
<clipPath id="g15"><path d="M915 22 L1012 28 L1010 72 L955 84 L912 92Z"/></clipPath>
<path clip-path="url(#g15)" d="M903.0 17.0L903.0 37.0M903.0 57.0L903.0 97.0M921.0 57.0L921.0 77.0M930.0 17.0L930.0 57.0M930.0 57.0L930.0 97.0M939.0 17.0L939.0 77.0M939.0 77.0L939.0 97.0M957.0 17.0L957.0 77.0M957.0 77.0L957.0 97.0M966.0 47.0L966.0 67.0M966.0 67.0L966.0 97.0M975.0 17.0L975.0 47.0M975.0 47.0L975.0 67.0M975.0 67.0L975.0 97.0M984.0 17.0L984.0 37.0M984.0 57.0L984.0 97.0M993.0 17.0L993.0 37.0M993.0 37.0L993.0 57.0M993.0 57.0L993.0 77.0M1002.0 37.0L1002.0 97.0M1011.0 87.0L1011.0 97.0M1020.0 17.0L1020.0 77.0M1020.0 77.0L1020.0 97.0M961.0 9.3L1015.0 12.2M907.0 16.5L979.0 20.3M979.0 20.3L1015.0 22.2M934.0 27.9L1006.0 31.7M1006.0 31.7L1017.0 32.3M907.0 36.5L961.0 39.3M961.0 39.3L997.0 41.2M997.0 41.2L1017.0 42.3M961.0 49.3L1015.0 52.2M907.0 56.5L979.0 60.3M979.0 60.3L1017.0 62.3M943.0 68.4L997.0 71.2M907.0 76.5L961.0 79.3M907.0 86.5L934.0 87.9M988.0 90.7L1017.0 92.3M907.0 96.5L943.0 98.4M961.0 109.3L988.0 110.7M988.0 110.7L1017.0 112.3" fill="none" stroke="#dde2ea" stroke-width="0.9"/>
<clipPath id="g16"><path d="M160 0 L360 0 L372 60 L372 160 L300 158 L228 155 L205 142 L183 131 L157 131Z"/></clipPath>
<path clip-path="url(#g16)" d="M148.0 -5.0L148.0 49.0M148.0 49.0L148.0 67.0M148.0 121.0L148.0 139.0M148.0 139.0L148.0 165.0M157.0 -5.0L157.0 22.0M157.0 22.0L157.0 40.0M157.0 40.0L157.0 76.0M157.0 76.0L157.0 103.0M157.0 103.0L157.0 157.0M157.0 157.0L157.0 165.0M166.0 -5.0L166.0 31.0M166.0 121.0L166.0 148.0M166.0 148.0L166.0 165.0M175.0 -5.0L175.0 22.0M175.0 22.0L175.0 40.0M175.0 40.0L175.0 76.0M175.0 103.0L175.0 139.0M175.0 139.0L175.0 157.0M175.0 157.0L175.0 165.0M184.0 -5.0L184.0 31.0M184.0 31.0L184.0 49.0M184.0 76.0L184.0 103.0M184.0 103.0L184.0 157.0M184.0 157.0L184.0 165.0M193.0 -5.0L193.0 31.0M193.0 31.0L193.0 67.0M193.0 67.0L193.0 85.0M193.0 85.0L193.0 112.0M193.0 112.0L193.0 148.0M202.0 49.0L202.0 85.0M202.0 85.0L202.0 112.0M202.0 112.0L202.0 139.0M202.0 139.0L202.0 165.0M211.0 -5.0L211.0 13.0M211.0 13.0L211.0 40.0M211.0 58.0L211.0 112.0M211.0 112.0L211.0 130.0M211.0 130.0L211.0 157.0M211.0 157.0L211.0 165.0M220.0 -5.0L220.0 13.0M220.0 13.0L220.0 67.0M220.0 67.0L220.0 103.0M220.0 103.0L220.0 157.0M229.0 -5.0L229.0 13.0M229.0 67.0L229.0 121.0M229.0 121.0L229.0 148.0M229.0 148.0L229.0 165.0M238.0 -5.0L238.0 22.0M238.0 76.0L238.0 130.0M238.0 130.0L238.0 165.0M247.0 31.0L247.0 58.0M256.0 -5.0L256.0 31.0M256.0 31.0L256.0 58.0M256.0 58.0L256.0 76.0M256.0 76.0L256.0 130.0M256.0 130.0L256.0 165.0M265.0 -5.0L265.0 49.0M265.0 49.0L265.0 85.0M265.0 85.0L265.0 139.0M274.0 -5.0L274.0 22.0M274.0 22.0L274.0 49.0M274.0 49.0L274.0 85.0M274.0 85.0L274.0 112.0M274.0 112.0L274.0 139.0M283.0 -5.0L283.0 13.0M283.0 13.0L283.0 67.0M283.0 67.0L283.0 121.0M283.0 121.0L283.0 157.0M292.0 13.0L292.0 31.0M292.0 31.0L292.0 67.0M292.0 130.0L292.0 157.0M292.0 157.0L292.0 165.0M301.0 76.0L301.0 112.0M301.0 112.0L301.0 148.0M310.0 -5.0L310.0 22.0M310.0 22.0L310.0 76.0M310.0 76.0L310.0 94.0M310.0 94.0L310.0 148.0M310.0 148.0L310.0 165.0M319.0 31.0L319.0 49.0M319.0 49.0L319.0 76.0M319.0 112.0L319.0 139.0M319.0 139.0L319.0 165.0M328.0 31.0L328.0 49.0M328.0 76.0L328.0 94.0M328.0 94.0L328.0 148.0M328.0 148.0L328.0 165.0M337.0 -5.0L337.0 49.0M337.0 49.0L337.0 67.0M337.0 67.0L337.0 85.0M337.0 121.0L337.0 148.0M337.0 148.0L337.0 165.0M346.0 -5.0L346.0 13.0M346.0 13.0L346.0 40.0M346.0 40.0L346.0 67.0M346.0 67.0L346.0 94.0M346.0 94.0L346.0 112.0M346.0 112.0L346.0 139.0M346.0 139.0L346.0 157.0M346.0 157.0L346.0 165.0M355.0 -5.0L355.0 13.0M355.0 13.0L355.0 67.0M355.0 67.0L355.0 85.0M355.0 139.0L355.0 157.0M355.0 157.0L355.0 165.0M364.0 -5.0L364.0 49.0M364.0 103.0L364.0 157.0M364.0 157.0L364.0 165.0M373.0 -5.0L373.0 31.0M373.0 31.0L373.0 49.0M373.0 49.0L373.0 76.0M373.0 76.0L373.0 94.0M373.0 94.0L373.0 121.0M373.0 121.0L373.0 139.0M373.0 139.0L373.0 165.0M152.0 -9.0L206.0 -9.0M242.0 -9.0L269.0 -9.0M269.0 -9.0L296.0 -9.0M368.0 -9.0L377.0 -9.0M152.0 0.0L224.0 0.0M224.0 0.0L251.0 0.0M251.0 0.0L278.0 0.0M350.0 0.0L377.0 0.0M152.0 9.0L179.0 9.0M179.0 9.0L251.0 9.0M251.0 9.0L278.0 9.0M278.0 9.0L332.0 9.0M332.0 9.0L359.0 9.0M359.0 9.0L377.0 9.0M152.0 18.0L224.0 18.0M368.0 18.0L377.0 18.0M152.0 27.0L188.0 27.0M188.0 27.0L242.0 27.0M242.0 27.0L314.0 27.0M314.0 27.0L377.0 27.0M152.0 36.0L224.0 36.0M224.0 36.0L296.0 36.0M296.0 36.0L368.0 36.0M368.0 36.0L377.0 36.0M152.0 45.0L206.0 45.0M206.0 45.0L260.0 45.0M260.0 45.0L296.0 45.0M296.0 45.0L323.0 45.0M323.0 45.0L359.0 45.0M359.0 45.0L377.0 45.0M152.0 54.0L179.0 54.0M287.0 54.0L359.0 54.0M152.0 63.0L179.0 63.0M179.0 63.0L206.0 63.0M206.0 63.0L278.0 63.0M278.0 63.0L314.0 63.0M314.0 63.0L350.0 63.0M350.0 63.0L377.0 63.0M260.0 72.0L332.0 72.0M332.0 72.0L359.0 72.0M152.0 81.0L224.0 81.0M224.0 81.0L251.0 81.0M323.0 81.0L377.0 81.0M152.0 90.0L179.0 90.0M179.0 90.0L215.0 90.0M215.0 90.0L242.0 90.0M323.0 90.0L350.0 90.0M224.0 99.0L296.0 99.0M296.0 99.0L368.0 99.0M152.0 108.0L179.0 108.0M269.0 108.0L305.0 108.0M305.0 108.0L332.0 108.0M332.0 108.0L377.0 108.0M206.0 117.0L260.0 117.0M260.0 117.0L296.0 117.0M296.0 117.0L368.0 117.0M152.0 126.0L206.0 126.0M233.0 126.0L287.0 126.0M341.0 126.0L377.0 126.0M152.0 135.0L179.0 135.0M179.0 135.0L215.0 135.0M215.0 135.0L269.0 135.0M269.0 135.0L305.0 135.0M305.0 135.0L359.0 135.0M359.0 135.0L377.0 135.0M152.0 144.0L206.0 144.0M206.0 144.0L233.0 144.0M233.0 144.0L260.0 144.0M260.0 144.0L332.0 144.0M332.0 144.0L377.0 144.0M224.0 153.0L296.0 153.0M296.0 153.0L350.0 153.0M350.0 153.0L377.0 153.0M179.0 162.0L233.0 162.0M233.0 162.0L269.0 162.0M269.0 162.0L323.0 162.0M323.0 162.0L377.0 162.0" fill="none" stroke="#dde2ea" stroke-width="0.9"/>
<clipPath id="g17"><path d="M0 0 L152 0 L152 120 L40 110 L0 100Z"/></clipPath>
<path clip-path="url(#g17)" d="M-11.0 -5.0L-11.0 31.0M-11.0 31.0L-11.0 103.0M-11.0 103.0L-11.0 125.0M0.0 -5.0L0.0 19.0M0.0 19.0L0.0 55.0M0.0 55.0L0.0 79.0M0.0 79.0L0.0 125.0M11.0 -5.0L11.0 31.0M11.0 55.0L11.0 103.0M22.0 -5.0L22.0 67.0M22.0 67.0L22.0 115.0M22.0 115.0L22.0 125.0M33.0 -5.0L33.0 67.0M33.0 67.0L33.0 115.0M44.0 -5.0L44.0 43.0M44.0 43.0L44.0 67.0M44.0 67.0L44.0 103.0M44.0 103.0L44.0 125.0M55.0 -5.0L55.0 43.0M55.0 43.0L55.0 67.0M55.0 67.0L55.0 91.0M55.0 91.0L55.0 125.0M66.0 43.0L66.0 91.0M66.0 91.0L66.0 125.0M88.0 31.0L88.0 67.0M88.0 67.0L88.0 115.0M88.0 115.0L88.0 125.0M99.0 -5.0L99.0 67.0M99.0 115.0L99.0 125.0M110.0 -5.0L110.0 43.0M110.0 91.0L110.0 125.0M121.0 -5.0L121.0 43.0M121.0 67.0L121.0 115.0M121.0 115.0L121.0 125.0M132.0 -5.0L132.0 31.0M132.0 103.0L132.0 125.0M143.0 -5.0L143.0 19.0M143.0 19.0L143.0 43.0M143.0 43.0L143.0 79.0M143.0 79.0L143.0 103.0M143.0 103.0L143.0 125.0M154.0 -5.0L154.0 43.0M154.0 79.0L154.0 103.0M154.0 103.0L154.0 125.0M-5.0 -17.5L39.0 -15.9M39.0 -15.9L105.0 -13.6M149.0 -12.1L157.0 -11.8M-5.0 -5.5L28.0 -4.3M28.0 -4.3L116.0 -1.3M-5.0 18.5L28.0 19.7M28.0 19.7L116.0 22.7M116.0 22.7L157.0 24.2M-5.0 30.5L61.0 32.8M61.0 32.8L105.0 34.4M105.0 34.4L149.0 35.9M-5.0 42.5L39.0 44.1M39.0 44.1L127.0 47.1M-5.0 54.5L39.0 56.1M39.0 56.1L127.0 59.1M-5.0 66.5L28.0 67.7M28.0 67.7L116.0 70.7M116.0 70.7L149.0 71.9M-5.0 78.5L61.0 80.8M61.0 80.8L127.0 83.1M127.0 83.1L157.0 84.2M-5.0 90.5L83.0 93.6M83.0 93.6L149.0 95.9M-5.0 102.5L61.0 104.8M61.0 104.8L149.0 107.9M149.0 107.9L157.0 108.2M-5.0 114.5L61.0 116.8M61.0 116.8L149.0 119.9M149.0 119.9L157.0 120.2M-5.0 126.5L61.0 128.8M61.0 128.8L149.0 131.9" fill="none" stroke="#dde2ea" stroke-width="0.9"/>
<clipPath id="g18"><path d="M440 200 L600 200 L600 255 L450 262Z"/></clipPath>
<path clip-path="url(#g18)" d="M432.5 195.0L426.2 243.0M426.2 243.0L423.0 267.0M456.5 195.0L450.2 243.0M468.5 195.0L463.8 231.0M463.8 231.0L459.0 267.0M480.5 195.0L475.8 231.0M492.5 195.0L489.3 219.0M486.2 243.0L483.0 267.0M504.5 195.0L499.8 231.0M499.8 231.0L496.6 255.0M496.6 255.0L495.0 267.0M552.5 195.0L549.3 219.0M549.3 219.0L543.0 267.0M561.3 219.0L556.6 255.0M556.6 255.0L555.0 267.0M576.5 195.0L571.8 231.0M568.6 255.0L567.0 267.0M600.5 195.0L597.3 219.0M597.3 219.0L591.0 267.0M609.3 219.0L603.0 267.0M435.0 179.9L483.0 177.4M483.0 177.4L579.0 172.3M579.0 172.3L605.0 171.0M435.0 191.9L483.0 189.4M435.0 203.9L507.0 200.1M507.0 200.1L555.0 197.6M483.0 213.4L531.0 210.8M531.0 210.8L605.0 207.0M435.0 227.9L531.0 222.8M531.0 222.8L603.0 219.1M435.0 239.9L471.0 238.0M471.0 238.0L567.0 233.0M567.0 233.0L605.0 231.0M435.0 251.9L483.0 249.4M483.0 249.4L531.0 246.8M435.0 263.9L507.0 260.1M507.0 260.1L579.0 256.3M471.0 274.0L543.0 270.2M579.0 268.3L605.0 267.0" fill="none" stroke="#dde2ea" stroke-width="0.9"/>
<clipPath id="g19"><path d="M1050 0 L1093 0 L1093 68 L1056 70Z"/></clipPath>
<path clip-path="url(#g19)" d="M1040.0 -5.0L1040.0 17.0M1040.0 17.0L1040.0 39.0M1040.0 39.0L1040.0 75.0M1060.0 -5.0L1060.0 39.0M1060.0 39.0L1060.0 72.0M1070.0 -5.0L1070.0 61.0M1080.0 17.0L1080.0 50.0M1090.0 -5.0L1090.0 39.0M1090.0 39.0L1090.0 75.0M1100.0 -5.0L1100.0 17.0M1100.0 17.0L1100.0 50.0M1045.0 -12.7L1098.0 -10.8M1045.0 -1.7L1075.0 -0.6M1045.0 9.3L1075.0 10.4M1045.0 20.3L1098.0 22.2M1045.0 31.3L1098.0 33.2" fill="none" stroke="#dde2ea" stroke-width="0.9"/>
<clipPath id="g20"><path d="M1045 92 L1093 90 L1093 170 L1050 195 L1035 160Z"/></clipPath>
<path clip-path="url(#g20)" d="M1025.0 181.0L1025.0 200.0M1035.0 181.0L1035.0 200.0M1045.0 181.0L1045.0 200.0M1055.0 85.0L1055.0 109.0M1055.0 109.0L1055.0 181.0M1065.0 85.0L1065.0 133.0M1065.0 169.0L1065.0 193.0M1075.0 85.0L1075.0 133.0M1075.0 181.0L1075.0 200.0M1085.0 85.0L1085.0 157.0M1085.0 157.0L1085.0 200.0M1095.0 121.0L1095.0 169.0M1030.0 75.8L1098.0 78.2M1030.0 87.8L1098.0 90.2M1030.0 99.8L1060.0 100.8M1030.0 111.8L1060.0 112.8M1030.0 123.8L1070.0 125.2M1070.0 125.2L1098.0 126.2M1030.0 135.8L1070.0 137.2M1030.0 159.8L1098.0 162.2M1030.0 171.8L1060.0 172.8M1060.0 172.8L1098.0 174.2M1060.0 184.8L1098.0 186.2" fill="none" stroke="#dde2ea" stroke-width="0.9"/>
<clipPath id="g21"><path d="M300 200 L370 200 L372 240 L300 245Z"/></clipPath>
<path clip-path="url(#g21)" d="M284.5 195.0L280.3 243.0M280.3 243.0L279.7 250.0M296.5 195.0L294.4 219.0M308.5 195.0L304.3 243.0M320.5 195.0L316.3 243.0M316.3 243.0L315.7 250.0M332.5 195.0L328.3 243.0M328.3 243.0L327.7 250.0M344.5 195.0L342.4 219.0M342.4 219.0L340.3 243.0M340.3 243.0L339.7 250.0M356.5 195.0L351.7 250.0M366.4 219.0L363.7 250.0M380.5 195.0L377.4 231.0M377.4 231.0L375.7 250.0M295.0 184.0L367.0 187.7M295.0 196.0L367.0 199.7M367.0 223.7L377.0 224.3M295.0 232.0L331.0 233.9M295.0 244.0L331.0 245.9M331.0 245.9L377.0 248.3" fill="none" stroke="#dde2ea" stroke-width="0.9"/>
<path fill="#90daee" d="M0.0 129.4 C2.1 112.7 2.0 130.4 9.0 133.9 C16.0 137.4 19.8 139.4 29.9 144.3 C40.0 149.2 42.5 150.2 52.2 154.7 C61.9 159.2 63.9 159.8 71.6 163.7 C79.3 167.5 81.2 168.1 85.1 171.2 C88.9 174.3 85.7 174.0 88.1 177.1 C90.5 180.2 91.7 182.2 95.5 184.6 C99.3 187.0 99.6 186.2 104.5 187.6 C109.4 189.0 112.9 188.9 116.4 190.6 C119.9 192.3 120.1 193.3 119.4 195.0 C118.7 196.7 118.6 198.0 113.4 198.0 C108.2 198.0 102.6 194.7 97.0 195.0 C91.4 195.3 91.7 196.3 89.6 199.5 C87.5 202.7 87.4 204.3 88.1 208.5 C88.8 212.7 89.7 213.9 92.5 217.4 C95.3 220.9 95.8 221.5 100.0 223.4 C104.2 225.3 108.0 223.5 110.4 225.6 C112.8 227.7 106.6 230.5 110.4 232.4 C114.2 234.3 121.3 232.5 126.9 233.9 C132.5 235.3 135.0 237.1 134.3 238.3 C133.6 239.5 127.7 238.0 123.9 239.1 C120.1 240.2 115.5 240.9 117.9 242.8 C120.3 244.7 129.4 245.2 134.3 247.3 C139.2 249.4 135.3 250.1 138.8 251.8 C142.3 253.5 143.4 254.7 149.3 254.7 C155.2 254.7 157.2 255.6 164.2 251.8 C171.2 248.0 174.6 244.9 179.1 238.3 C183.6 231.7 180.1 229.3 183.6 223.4 C187.1 217.5 188.1 216.5 194.0 213.0 C199.9 209.5 202.0 208.2 209.0 208.5 C216.0 208.8 216.7 209.9 223.9 214.4 C231.1 218.9 236.2 223.2 240.0 227.9 C243.8 232.6 243.8 236.0 240.0 234.6 C236.2 233.2 231.1 226.4 223.9 221.9 C216.7 217.4 215.3 216.1 209.0 215.2 C202.7 214.3 201.4 215.2 197.0 218.2 C192.6 221.2 192.9 222.5 190.3 227.9 C187.7 233.3 190.2 234.7 185.8 241.3 C181.4 247.9 179.4 250.9 171.6 256.2 C163.8 261.5 160.9 262.2 152.2 264.0 C143.5 265.8 145.4 265.1 134.3 264.0 C123.2 262.9 118.4 262.0 104.5 259.2 C90.6 256.4 86.8 254.6 74.6 251.8 C62.4 249.0 62.6 250.5 52.2 247.3 C41.8 244.2 38.6 243.9 29.9 238.3 C21.2 232.7 21.9 231.1 14.9 223.4 C7.9 215.7 3.5 227.4 0.0 205.5 C-3.5 183.6 -2.1 146.1 0.0 129.4ZM165.7 155.5 C168.5 155.2 171.8 156.5 179.1 157.7 C186.4 158.9 193.5 159.3 197.0 160.7 C200.5 162.1 197.5 162.6 194.0 163.7 C190.5 164.8 185.6 164.1 182.1 165.2 C178.6 166.2 180.8 167.8 179.1 168.2 C177.3 168.5 175.3 168.1 174.6 166.7 C173.9 165.3 177.8 163.9 176.1 162.2 C174.4 160.4 169.6 160.8 167.2 159.2 C164.8 157.6 162.9 155.8 165.7 155.5ZM238.8 220.5 C241.4 218.8 242.9 219.5 248.1 224.3 C253.3 229.1 256.0 233.6 261.2 241.0 C266.4 248.4 264.4 249.5 270.5 256.0 C276.6 262.5 280.4 264.7 287.3 269.0 C294.2 273.3 297.0 271.5 300.0 274.6 C303.0 277.7 302.5 281.2 300.0 282.1 C297.5 283.0 296.1 281.9 289.2 278.4 C282.3 274.9 277.9 273.3 270.5 267.2 C263.1 261.1 264.0 259.6 257.5 252.2 C251.0 244.8 247.3 240.2 242.5 235.4 C237.7 230.6 237.8 235.2 236.9 231.7 C236.0 228.2 236.2 222.2 238.8 220.5ZM300.0 274.6 C299.1 270.3 297.4 265.9 300.0 261.6 C302.6 257.3 304.7 257.8 311.2 256.0 C317.7 254.2 321.9 254.1 328.0 254.1 C334.1 254.1 336.4 253.8 337.3 256.0 C338.2 258.2 336.0 261.2 331.7 263.4 C327.4 265.6 322.6 262.7 318.7 265.3 C314.8 267.9 318.4 271.1 314.9 274.6 C311.4 278.1 307.2 280.2 303.7 280.2 C300.2 280.2 300.9 278.9 300.0 274.6ZM300.0 222.4 C302.6 221.1 307.3 221.7 311.2 224.3 C315.1 226.9 317.7 231.9 316.8 233.6 C315.9 235.3 311.4 232.6 307.5 231.7 C303.6 230.8 301.8 232.1 300.0 229.9 C298.2 227.7 297.4 223.7 300.0 222.4Z"/>
<path fill="#d2f6e2" d="M44.8 180.1 C46.0 177.7 46.6 176.9 52.2 180.1 C57.8 183.3 62.1 185.3 65.7 192.1 C69.3 198.9 68.1 201.5 65.7 205.5 C63.3 209.5 59.9 208.6 56.7 207.0 C53.5 205.4 56.1 204.3 53.7 199.5 C51.3 194.7 50.2 194.3 47.8 189.1 C45.4 183.9 43.6 182.5 44.8 180.1ZM52.2 236.8 C58.2 236.2 58.3 239.3 74.6 239.1 C90.9 238.9 99.5 236.3 113.4 236.1 C127.3 235.9 125.3 236.5 126.9 238.3 C128.5 240.1 118.2 240.4 119.4 242.8 C120.6 245.2 127.3 244.9 131.3 247.3 C135.3 249.7 141.4 251.8 134.3 251.8 C127.2 251.8 120.4 248.9 104.5 247.3 C88.6 245.7 88.5 247.4 74.6 245.8 C60.7 244.2 58.2 243.7 52.2 241.3 C46.2 238.9 46.2 237.4 52.2 236.8Z"/>
<path d="M370.9 3.7 C375.3 5.6 377.2 2.4 384.0 9.3 C390.8 16.2 390.2 11.9 391.4 24.3 C392.6 36.7 388.3 29.8 387.7 46.6 C387.1 63.4 387.7 55.9 389.6 74.6 C391.5 93.3 390.8 87.0 393.3 102.6 C395.8 118.2 394.2 108.2 397.0 121.3 C399.8 134.4 401.7 126.3 401.7 141.8 C401.7 157.3 400.4 148.5 397.0 167.9 C393.6 187.3 393.3 189.3 391.4 200.0" fill="none" stroke="#90daee" stroke-width="5.5" stroke-linecap="round" stroke-linejoin="round" />
<path d="M391.4 200.0 C388.9 206.2 383.4 205.0 384.0 218.7 C384.6 232.4 385.2 228.6 393.3 241.0 C401.4 253.4 399.5 246.7 408.2 256.0 C416.9 265.3 414.1 260.9 419.4 269.0 C424.7 277.1 422.5 276.5 424.1 280.2" fill="none" stroke="#90daee" stroke-width="6.5" stroke-linecap="round" stroke-linejoin="round" />
<path d="M337.3 259.7 C345.4 259.1 349.2 251.6 361.6 257.8 C374.0 264.0 365.9 267.2 374.6 278.4 C383.3 289.6 377.7 286.1 387.7 291.4 C397.7 296.7 393.3 294.8 404.5 294.2 C415.7 293.6 415.7 291.1 421.3 289.6" fill="none" stroke="#90daee" stroke-width="7" stroke-linecap="round" stroke-linejoin="round" />
<path fill="#90daee" d="M421.3 274.6 C425.3 271.6 424.4 270.9 434.3 270.9 C444.2 270.9 444.7 272.6 458.6 274.6 C472.5 276.6 473.2 276.9 486.6 278.4 C500.0 279.9 499.1 277.7 509.0 280.2 C518.9 282.7 516.5 282.2 523.9 287.7 C531.3 293.2 529.9 292.2 536.9 300.7 C543.9 309.2 544.8 308.4 550.0 319.4 C555.2 330.4 555.2 329.9 556.5 341.8 C557.8 353.7 557.9 352.8 554.7 364.2 C551.5 375.6 550.6 375.2 544.4 384.7 C538.2 394.2 538.3 395.9 531.3 400.0 C524.3 404.1 517.8 405.6 518.3 400.0 C518.8 394.4 527.0 389.7 533.2 379.1 C539.4 368.5 539.4 371.3 541.6 360.4 C543.8 349.5 543.6 348.5 541.6 338.1 C539.6 327.7 539.8 329.8 534.1 321.3 C528.4 312.8 527.3 312.8 520.1 306.3 C512.9 299.8 516.0 300.2 507.1 297.0 C498.2 293.8 497.1 295.7 486.6 294.2 C476.1 292.7 482.8 291.6 467.9 291.4 C453.0 291.2 445.5 292.3 430.6 293.3 C415.7 294.3 416.4 296.6 411.9 295.1 C407.4 293.6 411.8 291.2 413.8 287.7 C415.8 284.2 417.4 285.6 419.4 282.1 C421.4 278.6 417.3 277.6 421.3 274.6Z"/>
<path d="M525.7 292.5 C533.2 301.2 538.4 302.5 548.1 318.7 C557.8 334.9 554.1 325.5 554.7 341.0 C555.3 356.5 556.5 351.0 550.0 365.3 C543.5 379.6 546.9 371.6 535.1 384.0 C523.3 396.4 528.9 390.8 514.6 402.6 C500.3 414.4 505.3 408.2 492.2 419.4 C479.1 430.6 484.4 424.4 475.4 436.2 C466.4 448.0 470.0 441.8 465.1 454.9 C460.2 468.0 461.6 461.1 460.8 475.4 C460.0 489.7 462.1 490.3 462.7 497.8" fill="none" stroke="#90daee" stroke-width="12.5" stroke-linecap="round" stroke-linejoin="round" />
<path d="M468.8 447.4 C466.5 456.1 463.8 456.7 461.9 473.5 C460.0 490.3 462.7 489.7 463.1 497.8" fill="none" stroke="#90daee" stroke-width="17" stroke-linecap="round" stroke-linejoin="round" />
<path d="M1092.9 200.0 C1089.8 203.7 1089.8 198.8 1083.6 211.2 C1077.4 223.6 1076.2 219.3 1074.3 237.3 C1072.4 255.3 1071.8 247.9 1078.0 265.3 C1084.2 282.7 1087.9 281.5 1092.9 289.6" fill="none" stroke="#90daee" stroke-width="2.2" stroke-linecap="round" stroke-linejoin="round" />
<path d="M1092.9 188.4 L1087.3 200.0" fill="none" stroke="#90daee" stroke-width="2.2" stroke-linecap="round" stroke-linejoin="round" />
<path d="M111.9 267.2 C111.9 277.1 115.0 282.1 111.9 297.0 C108.8 311.9 115.0 306.9 102.6 311.9 C90.2 316.9 91.4 308.2 74.6 311.9 C57.8 315.6 67.7 320.6 52.2 323.1 C36.7 325.6 45.4 322.5 28.0 319.4 C10.6 316.3 9.3 315.7 0.0 313.8" fill="none" stroke="#9adff0" stroke-width="1.3" stroke-linecap="round" stroke-linejoin="round" />
<rect x="256.8" y="183" width="4.8" height="13" fill="#90daee"/>
<rect x="263.0" y="183" width="4.8" height="13" fill="#90daee"/>
<rect x="269.2" y="183" width="4.8" height="13" fill="#90daee"/>
<ellipse cx="537" cy="130.5" rx="4.5" ry="3" fill="#90daee" transform="rotate(35 537 130.5)"/>
<path d="M505 126 L543 124 L548 164 L506 167 L505 126 L546 160M506 166 L540 126M512 150 L545 140M520 126 L530 166" fill="none" stroke="#a9dfc0" stroke-width="0.8" stroke-linecap="round" stroke-linejoin="round" />
<ellipse cx="1009.0" cy="276.5" rx="16.8" ry="11.2" fill="none" stroke="#a9dfc0" stroke-width=".8"/>
<ellipse cx="1040.7" cy="274.6" rx="14.9" ry="13.1" fill="none" stroke="#a9dfc0" stroke-width=".8"/>
<ellipse cx="1025.7" cy="263.4" rx="7.5" ry="6.5" fill="none" stroke="#a9dfc0" stroke-width=".8"/>
<ellipse cx="995.9" cy="285.8" rx="11.2" ry="7.5" fill="none" stroke="#a9dfc0" stroke-width=".8"/>
<ellipse cx="1057.5" cy="282.1" rx="9.3" ry="11.2" fill="none" stroke="#a9dfc0" stroke-width=".8"/>
<path d="M981.0 261.6 C989.1 259.7 987.8 258.5 1005.2 256.0 C1022.6 253.5 1014.5 256.6 1033.2 254.1 C1051.9 251.6 1048.8 244.8 1061.2 248.5 C1073.6 252.2 1064.3 250.4 1070.5 265.3 C1076.7 280.2 1089.2 283.4 1079.9 293.3 C1070.6 303.2 1067.4 295.1 1042.5 295.1 C1017.6 295.1 1025.1 293.9 1005.2 293.3 C985.3 292.7 990.9 303.9 982.8 293.3 C974.7 282.7 981.6 272.2 981.0 261.6" fill="none" stroke="#a9dfc0" stroke-width="0.8" stroke-linecap="round" stroke-linejoin="round" />
<path d="M704.5 319.4 C707.0 320.6 706.9 323.7 711.9 323.1 C716.9 322.5 716.9 315.6 719.4 317.5 C721.9 319.4 721.9 323.1 719.4 328.7 C716.9 334.3 716.9 333.0 711.9 334.3 C706.9 335.6 707.0 337.5 704.5 332.5 C702.0 327.5 704.5 323.8 704.5 319.4" fill="none" stroke="#a9dfc0" stroke-width="0.8" stroke-linecap="round" stroke-linejoin="round" />
<path fill="#90daee" d="M983.8 282.1 L988.4 284.0 L994.0 291.4 L986.6 292.4 L982.8 287.7ZM1026.7 282.1 L1030.4 283.0 L1028.5 291.4 L1020.1 293.3 L1019.2 291.4 L1025.7 288.6Z"/>
<path d="M160.4 0.0 C159.8 24.9 160.4 24.8 158.6 74.6 C156.8 124.4 157.1 107.5 154.9 149.3 C152.7 191.1 153.0 183.1 152.1 200.0" fill="none" stroke="#c9d3e0" stroke-width="2.4" stroke-linecap="round" stroke-linejoin="round" />
<path d="M151.1 200.0 C149.9 209.3 150.5 209.3 147.4 228.0 C144.3 246.7 144.3 235.5 141.8 256.0 C139.3 276.5 139.9 274.7 139.9 289.6 C139.9 304.5 138.7 295.1 141.8 300.7 C144.9 306.3 144.3 306.3 149.3 306.3 C154.3 306.3 154.8 305.7 156.7 300.7 C158.6 295.7 160.5 295.1 154.9 291.4 C149.3 287.7 144.9 290.2 139.9 289.6" fill="none" stroke="#c9d3e0" stroke-width="2.0" stroke-linecap="round" stroke-linejoin="round" />
<path d="M197.8 0.0 C200.3 7.5 193.4 7.5 205.2 22.4 C217.0 37.3 214.5 31.7 233.2 44.8 C251.9 57.9 245.6 49.8 261.2 61.6 C276.8 73.4 270.0 68.4 279.9 80.2 C289.8 92.0 284.3 85.2 291.0 97.0 C297.7 108.8 297.0 109.5 300.0 115.7" fill="none" stroke="#c9d3e0" stroke-width="3" stroke-linecap="round" stroke-linejoin="round" />
<path d="M300.0 115.7 C301.9 124.4 301.9 126.9 305.6 141.8 C309.3 156.7 309.3 154.2 311.2 160.4" fill="none" stroke="#c9d3e0" stroke-width="3" stroke-linecap="round" stroke-linejoin="round" />
<path d="M156.7 130.6 C165.4 130.6 166.6 126.9 182.8 130.6 C199.0 134.3 190.3 133.7 205.2 141.8 C220.1 149.9 196.0 149.6 227.6 154.9 C259.2 160.2 275.9 156.7 300.0 157.6" fill="none" stroke="#c9d3e0" stroke-width="2.4" stroke-linecap="round" stroke-linejoin="round" />
<path d="M300.0 160.4 C346.0 161.0 375.9 160.7 438.1 162.3 C500.3 163.9 470.4 164.2 486.6 165.1" fill="none" stroke="#c9d3e0" stroke-width="2.4" stroke-linecap="round" stroke-linejoin="round" />
<path d="M428.7 0.0 C429.3 18.7 431.2 16.2 430.6 56.0 C430.0 95.8 427.5 84.6 426.9 119.4 C426.3 154.2 428.1 146.7 428.7 160.4" fill="none" stroke="#c9d3e0" stroke-width="2" stroke-linecap="round" stroke-linejoin="round" />
<path d="M466.0 0.0 C470.4 28.0 470.4 28.0 479.1 84.0 C487.8 140.0 487.8 139.9 492.2 167.9" fill="none" stroke="#c9d3e0" stroke-width="2.2" stroke-linecap="round" stroke-linejoin="round" />
<path d="M475.4 0.0 C479.1 28.0 479.1 28.0 486.6 84.0 C494.1 140.0 494.1 139.9 497.8 167.9" fill="none" stroke="#c9d3e0" stroke-width="1.6" stroke-linecap="round" stroke-linejoin="round" />
<path d="M540.7 0.0 C545.0 31.1 545.0 26.6 553.7 93.3 C562.4 160.0 562.4 164.4 566.8 200.0" fill="none" stroke="#c9d3e0" stroke-width="2.2" stroke-linecap="round" stroke-linejoin="round" />
<path d="M499.6 200.0 L499.6 274.6" fill="none" stroke="#c9d3e0" stroke-width="2.2" stroke-linecap="round" stroke-linejoin="round" />
<path d="M568.7 200.0 C571.2 218.7 569.9 212.5 576.1 256.0 C582.3 299.5 581.1 282.6 587.3 330.6 C593.5 378.6 592.3 376.9 594.8 400.0" fill="none" stroke="#c9d3e0" stroke-width="2.2" stroke-linecap="round" stroke-linejoin="round" />
<path d="M579.9 300.0 C583.6 324.9 584.8 331.1 591.0 374.6 C597.2 418.1 596.0 411.9 598.5 430.6" fill="none" stroke="#c9d3e0" stroke-width="2.0" stroke-linecap="round" stroke-linejoin="round" />
<path d="M300.0 0.9 L430.6 0.0" fill="none" stroke="#c9d3e0" stroke-width="2.2" stroke-linecap="round" stroke-linejoin="round" />
<path d="M600.0 7.5 L697.0 7.5" fill="none" stroke="#c9d3e0" stroke-width="2.4" stroke-linecap="round" stroke-linejoin="round" />
<path d="M782.8 13.1 L900.0 18.7" fill="none" stroke="#c9d3e0" stroke-width="2.6" stroke-linecap="round" stroke-linejoin="round" />
<path d="M800.0 14.0 L911.9 19.6 L1016.4 25.2 L1040.7 12.1 L1092.9 14.0" fill="none" stroke="#c9d3e0" stroke-width="2.6" stroke-linecap="round" stroke-linejoin="round" />
<path d="M784.7 13.1 L784.7 139.9" fill="none" stroke="#c9d3e0" stroke-width="2.2" stroke-linecap="round" stroke-linejoin="round" />
<path d="M911.9 0.0 C911.3 15.5 913.8 16.7 910.1 46.6 C906.4 76.5 903.8 75.3 900.7 89.6" fill="none" stroke="#c9d3e0" stroke-width="2.4" stroke-linecap="round" stroke-linejoin="round" />
<path d="M1016.4 25.2 L1014.6 70.9" fill="none" stroke="#c9d3e0" stroke-width="2.4" stroke-linecap="round" stroke-linejoin="round" />
<path d="M1040.7 12.1 L1033.2 0.0" fill="none" stroke="#c9d3e0" stroke-width="2.4" stroke-linecap="round" stroke-linejoin="round" />
<path d="M767.9 145.5 C771.6 140.5 766.7 140.5 779.1 130.6 C791.5 120.7 777.8 120.7 805.2 115.7 C832.6 110.7 829.6 118.8 861.2 115.7 C892.8 112.6 887.1 109.4 900.0 106.3" fill="none" stroke="#c9d3e0" stroke-width="2.4" stroke-linecap="round" stroke-linejoin="round" />
<path d="M800.0 115.7 C818.7 115.7 824.9 118.8 856.0 115.7 C887.1 112.6 862.2 111.3 893.3 106.3 C924.4 101.3 918.2 103.8 949.3 100.7 C980.4 97.6 968.0 101.3 986.6 97.0 C1005.2 92.7 995.9 95.2 1005.2 87.7 C1014.5 80.2 1011.5 79.0 1014.6 74.6" fill="none" stroke="#c9d3e0" stroke-width="2.4" stroke-linecap="round" stroke-linejoin="round" />
<path d="M967.9 104.5 L967.9 200.0" fill="none" stroke="#c9d3e0" stroke-width="2.4" stroke-linecap="round" stroke-linejoin="round" />
<path d="M1042.5 200.0 C1048.7 211.2 1052.5 214.9 1061.2 233.6 C1069.9 252.3 1061.2 234.9 1068.7 256.0 C1076.2 277.1 1076.2 269.0 1083.6 297.0 C1091.0 325.0 1087.9 305.6 1091.0 339.9 C1094.1 374.2 1092.3 380.0 1092.9 400.0" fill="none" stroke="#c9d3e0" stroke-width="2.4" stroke-linecap="round" stroke-linejoin="round" />
<path d="M1042.5 111.9 C1038.8 119.4 1035.6 118.1 1031.3 134.3 C1027.0 150.5 1026.4 143.0 1029.5 160.4 C1032.6 177.8 1035.1 173.4 1040.7 186.6 C1046.3 199.8 1044.4 195.5 1046.3 200.0" fill="none" stroke="#d0d0d6" stroke-width="1.2" stroke-linecap="round" stroke-linejoin="round" />
<path d="M1035.1 0.0 C1039.4 7.5 1042.5 6.9 1048.1 22.4 C1053.7 37.9 1051.3 29.2 1051.9 46.6 C1052.5 64.0 1053.1 52.8 1050.0 74.6 C1046.9 96.4 1045.0 99.5 1042.5 111.9" fill="none" stroke="#d0d0d6" stroke-width="1.2" stroke-linecap="round" stroke-linejoin="round" />
<path d="M0.0 218.7 C6.2 228.0 3.2 229.8 18.7 246.6 C34.2 263.4 24.8 255.9 46.6 269.0 C68.4 282.1 52.9 278.9 84.0 285.8 C115.1 292.7 96.4 286.5 139.9 289.6 C183.4 292.7 161.2 292.0 214.6 295.1 C268.0 298.2 271.5 297.6 300.0 298.9" fill="none" stroke="#c9d3e0" stroke-width="2.4" stroke-linecap="round" stroke-linejoin="round" />
<path d="M300.0 298.9 L369.0 303.5" fill="none" stroke="#c9d3e0" stroke-width="2.4" stroke-linecap="round" stroke-linejoin="round" />
<path d="M214.6 295.1 C216.4 306.9 216.4 306.3 220.1 330.6 C223.8 354.9 222.6 344.8 225.7 367.9 C228.8 391.0 228.2 389.3 229.5 400.0" fill="none" stroke="#c9d3e0" stroke-width="2.4" stroke-linecap="round" stroke-linejoin="round" />
<path d="M218.3 300.0 C220.8 321.8 221.4 328.0 225.7 365.3 C230.0 402.6 229.4 396.4 231.3 411.9" fill="none" stroke="#c9d3e0" stroke-width="2.4" stroke-linecap="round" stroke-linejoin="round" />
<path d="M382.1 270.9 C379.6 287.7 376.5 296.4 374.6 321.3 C372.7 346.2 375.9 337.4 376.5 345.5" fill="none" stroke="#c9d3e0" stroke-width="2.2" stroke-linecap="round" stroke-linejoin="round" />
<path d="M301.9 356.0 C304.4 374.6 303.7 368.4 309.3 411.9 C314.9 455.4 315.6 461.7 318.7 486.6" fill="none" stroke="#c9d3e0" stroke-width="2.2" stroke-linecap="round" stroke-linejoin="round" />
<path d="M84.0 495.0 C105.8 489.7 108.9 488.1 149.3 479.1 C189.7 470.1 174.1 474.1 205.2 467.9 C236.3 461.7 210.9 466.6 242.5 460.4 C274.1 454.2 280.8 453.0 300.0 449.3" fill="none" stroke="#c9d3e0" stroke-width="2.6" stroke-linecap="round" stroke-linejoin="round" />
<path d="M300.0 447.4 C318.7 443.0 316.2 443.6 356.0 434.3 C395.8 425.0 386.4 427.5 419.4 419.4 C452.4 411.3 443.1 413.2 454.9 410.1" fill="none" stroke="#c9d3e0" stroke-width="2.6" stroke-linecap="round" stroke-linejoin="round" />
<path d="M384.0 426.9 L389.6 458.6" fill="none" stroke="#c9d3e0" stroke-width="2.2" stroke-linecap="round" stroke-linejoin="round" />
<path d="M453.0 378.4 L454.9 410.1" fill="none" stroke="#c9d3e0" stroke-width="2.2" stroke-linecap="round" stroke-linejoin="round" />
<path d="M764.2 332.5 L900.0 334.3" fill="none" stroke="#c9d3e0" stroke-width="2.2" stroke-linecap="round" stroke-linejoin="round" />
<path d="M800.0 333.4 L1092.9 339.0" fill="none" stroke="#c9d3e0" stroke-width="2.2" stroke-linecap="round" stroke-linejoin="round" />
<path d="M637.3 349.3 C653.5 346.8 646.6 348.0 685.8 341.8 C725.0 335.6 731.9 334.3 754.9 330.6" fill="none" stroke="#c9d3e0" stroke-width="2.2" stroke-linecap="round" stroke-linejoin="round" />
<path d="M717.5 297.0 L730.6 400.0" fill="none" stroke="#c9d3e0" stroke-width="2.4" stroke-linecap="round" stroke-linejoin="round" />
<path d="M730.6 300.0 L734.3 356.0" fill="none" stroke="#c9d3e0" stroke-width="2.2" stroke-linecap="round" stroke-linejoin="round" />
<path d="M685.8 340.1 L697.0 430.6" fill="none" stroke="#c9d3e0" stroke-width="2.0" stroke-linecap="round" stroke-linejoin="round" />
<path d="M637.3 389.6 C668.4 388.3 692.0 387.4 730.6 385.8 C769.2 384.2 745.5 385.2 753.0 384.9" fill="none" stroke="#c9d3e0" stroke-width="2.6" stroke-linecap="round" stroke-linejoin="round" />
<path d="M600.0 404.5 C618.7 402.0 612.5 402.0 656.0 397.0 C699.5 392.0 705.7 392.1 730.6 389.6" fill="none" stroke="#c9d3e0" stroke-width="2.0" stroke-linecap="round" stroke-linejoin="round" />
<path d="M767.9 300.0 C766.7 331.1 766.7 328.3 764.2 393.3 C761.7 458.3 761.7 461.1 760.4 495.0" fill="none" stroke="#c9d3e0" stroke-width="3.2" stroke-linecap="round" stroke-linejoin="round" />
<path d="M870.5 374.6 L866.8 495.0" fill="none" stroke="#c9d3e0" stroke-width="2.4" stroke-linecap="round" stroke-linejoin="round" />
<path d="M883.6 374.6 L879.9 495.0" fill="none" stroke="#c9d3e0" stroke-width="2.4" stroke-linecap="round" stroke-linejoin="round" />
<path d="M870.0 370.9 L865.3 495.0" fill="none" stroke="#c9d3e0" stroke-width="2.4" stroke-linecap="round" stroke-linejoin="round" />
<path d="M884.0 370.9 L879.3 495.0" fill="none" stroke="#c9d3e0" stroke-width="2.4" stroke-linecap="round" stroke-linejoin="round" />
<path d="M969.8 370.9 L964.2 473.5" fill="none" stroke="#c9d3e0" stroke-width="2.2" stroke-linecap="round" stroke-linejoin="round" />
<path d="M988.4 370.9 L984.7 475.4" fill="none" stroke="#c9d3e0" stroke-width="2.2" stroke-linecap="round" stroke-linejoin="round" />
<path d="M1046.3 341.0 L1039.7 479.1" fill="none" stroke="#c9d3e0" stroke-width="2.2" stroke-linecap="round" stroke-linejoin="round" />
<path d="M945.5 475.4 L945.5 495.0" fill="none" stroke="#c9d3e0" stroke-width="2.2" stroke-linecap="round" stroke-linejoin="round" />
<path d="M800.0 367.2 L1092.9 371.8" fill="none" stroke="#c9d3e0" stroke-width="2.4" stroke-linecap="round" stroke-linejoin="round" />
<path d="M764.2 365.3 L900.0 367.2" fill="none" stroke="#c9d3e0" stroke-width="2.4" stroke-linecap="round" stroke-linejoin="round" />
<path d="M962.3 200.0 L962.3 252.2" fill="none" stroke="#c9d3e0" stroke-width="2.2" stroke-linecap="round" stroke-linejoin="round" />
<path d="M682.1 248.5 L741.8 235.4" fill="none" stroke="#c9d3e0" stroke-width="2.2" stroke-linecap="round" stroke-linejoin="round" />
<path d="M684.0 263.4 L743.7 254.1" fill="none" stroke="#c9d3e0" stroke-width="2.0" stroke-linecap="round" stroke-linejoin="round" />
<path d="M629.9 430.6 L639.2 495.0" fill="none" stroke="#c9d3e0" stroke-width="2.2" stroke-linecap="round" stroke-linejoin="round" />
<path d="M646.6 428.7 L654.1 495.0" fill="none" stroke="#c9d3e0" stroke-width="1.8" stroke-linecap="round" stroke-linejoin="round" />
<path d="M156.7 147.4 C172.9 150.5 170.4 149.9 205.2 156.7 C240.0 163.5 229.6 161.7 261.2 167.9 C292.8 174.1 287.1 172.9 300.0 175.4" fill="none" stroke="#dcdde2" stroke-width="2.2" stroke-linecap="round" stroke-linejoin="round" />
<path d="M300.0 175.4 C318.7 179.1 329.9 181.0 356.0 186.6 C382.1 192.2 370.9 190.3 378.4 192.2" fill="none" stroke="#dcdde2" stroke-width="2.2" stroke-linecap="round" stroke-linejoin="round" />
<path d="M0.0 274.6 C18.7 282.1 18.7 285.8 56.0 297.0 C93.3 308.2 62.2 303.2 111.9 308.2 C161.6 313.2 142.5 310.0 205.2 311.9 C267.9 313.8 268.4 313.2 300.0 313.8" fill="none" stroke="#d8d6dc" stroke-width="1.2" stroke-linecap="round" stroke-linejoin="round" />
<path d="M300.0 313.8 C337.3 315.7 349.7 325.0 411.9 319.4 C474.1 313.8 449.3 313.2 486.6 297.0 C523.9 280.8 499.0 290.8 523.9 270.9 C548.8 251.0 535.8 258.4 561.2 237.3 C586.6 216.2 587.1 217.4 600.0 207.5" fill="none" stroke="#d8d8de" stroke-width="1.2" stroke-linecap="round" stroke-linejoin="round" />
<path d="M-3.0 98.0 C-0.5 105.0 -1.5 107.4 4.5 118.9 C10.5 130.4 6.4 124.9 14.9 132.4 C23.4 139.9 17.5 135.8 29.9 141.3 C42.3 146.8 37.3 144.3 52.2 148.8 C67.1 153.3 57.2 150.2 74.6 154.7 C92.0 159.2 84.6 157.2 104.5 162.2 C124.4 167.2 114.4 163.2 134.3 169.7 C154.2 176.2 144.3 172.7 164.2 181.6 C184.1 190.5 174.1 187.0 194.0 196.5 C213.9 206.0 208.6 203.0 223.9 210.0 C239.2 217.0 234.6 214.9 240.0 217.4" fill="none" stroke="#8aa4c3" stroke-width="4.4" stroke-linecap="round" stroke-linejoin="round" />
<path d="M201.5 200.0 C212.1 205.0 213.3 203.1 233.2 214.9 C253.1 226.7 245.6 225.4 261.2 235.4 C276.8 245.4 267.0 240.4 279.9 244.8 C292.8 249.2 293.3 247.3 300.0 248.5" fill="none" stroke="#8aa4c3" stroke-width="4.6" stroke-linecap="round" stroke-linejoin="round" />
<path d="M300.0 248.5 C306.2 248.8 306.3 248.8 318.7 249.4 C331.1 250.0 326.1 249.5 337.3 250.4 C348.5 251.3 344.1 252.8 352.2 252.2 C360.3 251.6 352.9 254.7 361.6 248.5 C370.3 242.3 372.8 238.6 378.4 233.6" fill="none" stroke="#8aa4c3" stroke-width="4.6" stroke-linecap="round" stroke-linejoin="round" />
<path d="M-1.5 175.6 C4.0 181.6 2.0 180.2 14.9 193.6 C27.8 207.0 22.4 204.7 37.3 215.9 C52.2 227.1 42.3 223.5 59.7 227.1 C77.1 230.7 79.6 226.8 89.6 226.7" fill="none" stroke="#8aa4c3" stroke-width="4.5" stroke-linecap="round" stroke-linejoin="round" />
<path d="M-1.5 186.1 C4.0 192.6 4.4 194.1 14.9 205.5 C25.4 216.9 18.4 211.9 29.9 220.4 C41.4 228.9 42.8 227.4 49.3 230.9" fill="none" stroke="#8aa4c3" stroke-width="3" stroke-linecap="round" stroke-linejoin="round" />
<path d="M-1.5 244.6 C6.5 244.0 7.0 245.9 22.4 242.8 C37.8 239.7 29.9 239.8 44.8 235.3 C59.7 230.8 52.3 232.1 67.2 229.4 C82.1 226.7 69.7 227.6 89.6 227.1 C109.5 226.6 107.0 226.6 126.9 227.9 C146.8 229.2 136.9 228.4 149.3 230.9 C161.7 233.4 151.8 231.3 164.2 235.3 C176.6 239.3 171.7 237.3 186.6 242.8 C201.5 248.3 191.2 244.7 209.0 251.8 C226.8 258.9 229.7 259.9 240.0 264.0" fill="none" stroke="#8aa4c3" stroke-width="6.6" stroke-linecap="round" stroke-linejoin="round" />
<path d="M223.9 259.7 C227.0 260.9 220.8 257.8 233.2 263.4 C245.6 269.0 245.6 270.0 261.2 276.5 C276.8 283.0 267.0 279.9 279.9 283.0 C292.8 286.1 293.3 284.9 300.0 285.8" fill="none" stroke="#8aa4c3" stroke-width="6.5" stroke-linecap="round" stroke-linejoin="round" />
<path d="M300.0 285.8 C306.2 285.2 306.3 287.7 318.7 284.0 C331.1 280.3 324.9 283.9 337.3 274.6 C349.7 265.3 343.6 268.4 356.0 256.0 C368.4 243.6 363.4 248.5 374.6 237.3 C385.8 226.1 379.6 231.7 389.6 222.4 C399.6 213.1 393.3 216.8 404.5 209.3 C415.7 201.8 416.9 203.1 423.1 200.0" fill="none" stroke="#8aa4c3" stroke-width="6.5" stroke-linecap="round" stroke-linejoin="round" />
<path d="M333.6 252.2 C334.2 256.6 340.4 255.3 335.4 265.3 C330.4 275.3 324.3 276.5 318.7 282.1" fill="none" stroke="#8aa4c3" stroke-width="3" stroke-linecap="round" stroke-linejoin="round" />
<path d="M415.7 200.0 C421.9 195.5 423.1 194.2 434.3 186.6 C445.5 179.0 441.2 181.6 449.3 177.2 C457.4 172.8 455.5 174.7 458.6 173.5" fill="none" stroke="#8aa4c3" stroke-width="6.5" stroke-linecap="round" stroke-linejoin="round" />
<path d="M430.6 200.0 C436.8 194.9 436.9 191.7 449.3 184.7 C461.7 177.7 449.3 181.0 467.9 179.1 C486.5 177.2 492.8 179.1 505.2 179.1" fill="none" stroke="#8aa4c3" stroke-width="4" stroke-linecap="round" stroke-linejoin="round" />
<path d="M438.1 167.9 C441.8 173.5 439.4 177.2 449.3 184.7 C459.2 192.2 450.5 189.7 467.9 190.3 C485.3 190.9 490.3 191.6 501.5 186.6 C512.7 181.6 501.5 179.1 501.5 175.4" fill="none" stroke="#8aa4c3" stroke-width="3" stroke-linecap="round" stroke-linejoin="round" />
<path d="M150.7 214.7 C154.2 215.1 155.7 213.5 161.2 215.9 C166.7 218.3 166.2 216.9 167.2 221.9 C168.2 226.9 167.7 226.8 164.2 230.9 C160.7 235.0 159.2 233.0 156.7 234.1" fill="none" stroke="#8aa4c3" stroke-width="3.2" stroke-linecap="round" stroke-linejoin="round" />
<path d="M164.2 217.4 C167.2 220.9 165.6 221.4 173.1 227.9 C180.6 234.4 174.6 230.3 186.6 236.8 C198.6 243.3 201.5 243.8 209.0 247.3" fill="none" stroke="#8aa4c3" stroke-width="3.2" stroke-linecap="round" stroke-linejoin="round" />
<path d="M146.3 247.3 C149.8 249.3 145.8 251.8 156.7 253.3 C167.6 254.8 164.2 253.1 179.1 251.8 C194.0 250.5 194.0 250.3 201.5 249.5" fill="none" stroke="#8aa4c3" stroke-width="3.2" stroke-linecap="round" stroke-linejoin="round" />
<path d="M158.2 236.8 C160.2 239.3 163.2 239.3 164.2 244.3 C165.2 249.3 164.2 249.1 161.2 251.8 C158.2 254.5 157.2 252.3 155.2 252.5" fill="none" stroke="#8aa4c3" stroke-width="3" stroke-linecap="round" stroke-linejoin="round" />
<path d="M-1.9 240.1 C5.0 244.8 2.5 243.8 18.7 254.1 C34.9 264.4 28.0 258.5 46.6 270.9 C65.2 283.3 55.9 275.2 74.6 291.4 C93.3 307.6 83.9 300.7 102.6 319.4 C121.3 338.1 115.0 332.5 130.6 347.4 C146.2 362.3 136.9 351.8 149.3 364.2 C161.7 376.6 158.0 372.8 167.9 384.7 C177.8 396.6 175.4 394.9 179.1 400.0" fill="none" stroke="#8aa4c3" stroke-width="6.8" stroke-linecap="round" stroke-linejoin="round" />
<path d="M-1.9 249.4 C3.7 252.2 -1.3 249.4 14.9 257.8 C31.1 266.2 36.0 269.0 46.6 274.6" fill="none" stroke="#8aa4c3" stroke-width="4" stroke-linecap="round" stroke-linejoin="round" />
<path d="M82.1 300.0 C92.0 308.7 92.6 308.7 111.9 326.1 C131.2 343.5 122.5 334.8 139.9 352.2 C157.3 369.6 148.6 359.7 164.2 378.4 C179.8 397.1 172.9 387.7 186.6 408.2 C200.3 428.7 194.6 421.2 205.2 439.9 C215.8 458.6 210.2 451.1 218.3 464.2 C226.4 477.3 220.2 471.0 229.5 479.1 C238.8 487.2 232.6 484.0 246.3 488.4 C260.0 492.8 252.6 491.6 270.5 492.2 C288.4 492.8 290.2 490.9 300.0 490.3" fill="none" stroke="#8aa4c3" stroke-width="6.8" stroke-linecap="round" stroke-linejoin="round" />
<path d="M149.3 356.0 C154.9 358.5 158.6 357.2 166.0 363.4 C173.4 369.6 167.2 365.9 171.6 374.6 C176.0 383.3 176.6 384.6 179.1 389.6" fill="none" stroke="#8aa4c3" stroke-width="3.5" stroke-linecap="round" stroke-linejoin="round" />
<path d="M143.7 382.1 C148.7 386.4 147.4 387.6 158.6 395.1 C169.8 402.6 167.9 397.6 177.2 404.5 C186.5 411.4 183.5 412.0 186.6 415.7" fill="none" stroke="#8aa4c3" stroke-width="3.5" stroke-linecap="round" stroke-linejoin="round" />
<path d="M141.8 361.6 C144.3 367.2 146.8 370.9 149.3 378.4 C151.8 385.9 149.3 382.1 149.3 384.0" fill="none" stroke="#8aa4c3" stroke-width="3" stroke-linecap="round" stroke-linejoin="round" />
<path d="M236.9 447.4 C231.9 448.0 228.2 446.2 222.0 449.3 C215.8 452.4 219.2 451.7 218.3 456.7 C217.4 461.7 218.9 461.7 219.2 464.2" fill="none" stroke="#8aa4c3" stroke-width="3.2" stroke-linecap="round" stroke-linejoin="round" />
<path d="M210.8 467.9 C213.9 472.9 209.5 474.7 220.1 482.8 C230.7 490.9 235.0 489.1 242.5 492.2" fill="none" stroke="#8aa4c3" stroke-width="3" stroke-linecap="round" stroke-linejoin="round" />
<path d="M-1.9 397.2 C11.2 396.2 5.6 397.1 37.3 394.2 C69.0 391.3 56.0 392.9 93.3 388.6 C130.6 384.3 121.9 384.9 149.3 381.2 C176.7 377.5 161.7 379.6 175.4 377.4 C189.1 375.2 167.9 377.7 190.3 374.6 C212.7 371.5 205.9 373.1 242.5 368.1 C279.1 363.1 280.8 362.5 300.0 359.7" fill="none" stroke="#8aa4c3" stroke-width="4.2" stroke-linecap="round" stroke-linejoin="round" />
<path d="M300.0 354.1 C318.7 351.6 319.9 351.3 356.0 346.6 C392.1 341.9 380.8 343.8 408.2 340.1 C435.6 336.4 412.0 339.4 438.1 335.4 C464.2 331.4 451.8 333.6 486.6 328.0 C521.4 322.4 511.4 323.4 542.5 318.7 C573.6 314.0 560.7 316.2 579.9 314.0 C599.1 311.8 593.3 312.7 600.0 312.1" fill="none" stroke="#8aa4c3" stroke-width="4.2" stroke-linecap="round" stroke-linejoin="round" />
<path d="M600.0 310.1 C609.3 308.8 607.5 309.1 628.0 306.3 C648.5 303.5 641.1 304.8 661.6 301.7 C682.1 298.6 660.4 301.7 689.6 297.0 C718.8 292.3 717.0 292.7 749.3 287.7 C781.6 282.7 755.5 287.1 786.6 282.1 C817.7 277.1 804.7 278.7 842.5 272.8 C880.3 266.9 880.8 267.2 900.0 264.4" fill="none" stroke="#8aa4c3" stroke-width="4.4" stroke-linecap="round" stroke-linejoin="round" />
<path d="M800.0 281.2 C818.7 278.1 818.7 278.0 856.0 271.8 C893.3 265.6 874.6 268.7 911.9 262.5 C949.2 256.3 930.6 259.1 967.9 253.2 C1005.2 247.3 992.8 249.2 1023.9 244.8 C1055.0 240.4 1037.6 242.9 1061.2 240.1 C1084.8 237.3 1083.6 237.6 1094.8 236.4" fill="none" stroke="#8aa4c3" stroke-width="4.6" stroke-linecap="round" stroke-linejoin="round" />
<path d="M1081.7 198.1 C1078.6 205.0 1076.7 205.0 1072.4 218.7 C1068.1 232.4 1069.9 232.4 1068.7 239.2" fill="none" stroke="#8aa4c3" stroke-width="4" stroke-linecap="round" stroke-linejoin="round" />
<path d="M1079.9 200.0 C1082.4 195.5 1082.3 196.1 1087.3 186.6 C1092.3 177.1 1092.3 176.6 1094.8 171.6" fill="none" stroke="#8aa4c3" stroke-width="4" stroke-linecap="round" stroke-linejoin="round" />
<path d="M231.3 412.9 C242.5 411.3 242.0 411.9 264.9 408.2 C287.8 404.5 288.3 403.9 300.0 401.7" fill="none" stroke="#8aa4c3" stroke-width="4" stroke-linecap="round" stroke-linejoin="round" />
<path d="M231.3 412.9 L236.9 449.3 L242.5 486.6" fill="none" stroke="#8aa4c3" stroke-width="4" stroke-linecap="round" stroke-linejoin="round" />
<path d="M300.0 401.7 C318.7 398.9 318.7 398.9 356.0 393.3 C393.3 387.7 387.0 388.6 411.9 384.9 C436.8 381.2 405.7 386.1 430.6 382.1 C455.5 378.1 455.5 378.1 486.6 372.8 C517.7 367.5 507.7 368.1 523.9 366.2 C540.1 364.3 531.4 366.9 535.1 367.2" fill="none" stroke="#8aa4c3" stroke-width="4" stroke-linecap="round" stroke-linejoin="round" />
<path d="M423.1 397.0 C438.0 395.1 440.5 395.1 467.9 391.4 C495.3 387.7 486.5 387.3 505.2 385.8 C523.9 384.3 509.6 383.7 523.9 386.8 C538.2 389.9 535.7 392.9 548.1 395.1 C560.5 397.3 543.9 395.1 561.2 393.3 C578.5 391.5 587.1 390.8 600.0 389.6" fill="none" stroke="#8aa4c3" stroke-width="4" stroke-linecap="round" stroke-linejoin="round" />
<path d="M497.8 369.0 C502.1 373.4 502.1 376.2 510.8 382.1 C519.5 388.0 519.5 385.2 523.9 386.8" fill="none" stroke="#8aa4c3" stroke-width="4" stroke-linecap="round" stroke-linejoin="round" />
<path d="M563.1 384.0 L564.0 393.3" fill="none" stroke="#8aa4c3" stroke-width="3" stroke-linecap="round" stroke-linejoin="round" />
<path d="M361.6 -1.9 C365.9 3.7 369.0 1.8 374.6 14.9 C380.2 28.0 377.1 20.5 378.4 37.3 C379.7 54.1 377.2 46.6 378.4 65.3 C379.6 84.0 379.0 74.6 382.1 93.3 C385.2 112.0 385.5 102.6 387.7 121.3 C389.9 140.0 389.2 130.7 388.6 149.3 C388.0 167.9 388.0 160.3 385.8 177.2 C383.6 194.1 383.3 192.4 382.1 200.0" fill="none" stroke="#8aa4c3" stroke-width="8" stroke-linecap="round" stroke-linejoin="round" />
<path d="M373.7 37.3 C373.7 56.0 372.8 58.5 373.7 93.3 C374.6 128.1 373.7 121.9 376.5 141.8 C379.3 161.7 380.2 149.3 382.1 153.0" fill="none" stroke="#9fb2cd" stroke-width="2" stroke-linecap="round" stroke-linejoin="round" />
<path d="M378.4 200.0 C379.0 209.3 376.5 207.5 380.2 228.0 C383.9 248.5 382.8 239.8 389.6 261.6 C396.4 283.4 394.5 270.3 400.7 293.3 C406.9 316.3 404.5 305.7 408.2 330.6 C411.9 355.5 409.4 344.8 411.9 367.9 C414.4 391.0 414.4 389.3 415.7 400.0" fill="none" stroke="#8aa4c3" stroke-width="8" stroke-linecap="round" stroke-linejoin="round" />
<path d="M404.5 300.0 C406.4 312.4 406.4 312.4 410.1 337.3 C413.8 362.2 412.6 349.7 415.7 374.6 C418.8 399.5 416.9 392.0 419.4 411.9 C421.9 431.8 419.4 418.7 423.1 434.3 C426.8 449.9 425.0 441.2 430.6 458.6 C436.2 476.0 434.9 473.5 439.9 486.6 C444.9 499.7 443.6 494.1 445.5 497.8" fill="none" stroke="#8aa4c3" stroke-width="8" stroke-linecap="round" stroke-linejoin="round" />
<path d="M423.1 434.3 C422.5 439.3 425.0 441.2 421.3 449.3 C417.6 457.4 422.5 453.6 411.9 458.6 C401.3 463.6 397.0 462.3 389.6 464.2" fill="none" stroke="#8aa4c3" stroke-width="3.5" stroke-linecap="round" stroke-linejoin="round" />
<path d="M423.1 464.2 C426.8 471.7 428.7 475.4 434.3 486.6 C439.9 497.8 438.0 494.1 439.9 497.8" fill="none" stroke="#8aa4c3" stroke-width="4" stroke-linecap="round" stroke-linejoin="round" />
<path d="M430.6 458.6 L449.3 497.8" fill="none" stroke="#8aa4c3" stroke-width="4" stroke-linecap="round" stroke-linejoin="round" />
<path d="M449.3 497.8 C449.3 487.8 447.4 481.6 449.3 467.9 C451.2 454.2 448.7 463.5 454.9 456.7 C461.1 449.9 463.6 450.5 467.9 447.4" fill="none" stroke="#8aa4c3" stroke-width="3.5" stroke-linecap="round" stroke-linejoin="round" />
<path d="M430.6 441.8 C434.3 443.7 432.5 446.2 441.8 447.4 C451.1 448.6 453.0 446.1 458.6 445.5" fill="none" stroke="#8aa4c3" stroke-width="3.5" stroke-linecap="round" stroke-linejoin="round" />
<path d="M389.6 119.4 C394.6 123.1 394.6 121.9 404.5 130.6 C414.4 139.3 410.7 134.9 419.4 145.5 C428.1 156.1 423.1 153.6 430.6 162.3 C438.1 171.0 432.5 167.9 441.8 171.6 C451.1 175.3 443.7 173.2 458.6 173.5 C473.5 173.8 467.3 172.0 486.6 172.6 C505.9 173.2 497.8 175.7 516.4 175.4 C535.0 175.1 527.6 176.6 542.5 171.6 C557.4 166.6 548.7 167.8 561.2 160.4 C573.7 153.0 567.0 156.1 579.9 149.3 C592.8 142.5 593.3 143.0 600.0 139.9" fill="none" stroke="#8aa4c3" stroke-width="6.5" stroke-linecap="round" stroke-linejoin="round" />
<path d="M376.5 141.8 C378.4 144.3 378.4 149.3 382.1 149.3 C385.8 149.3 385.8 144.3 387.7 141.8" fill="none" stroke="#8aa4c3" stroke-width="3" stroke-linecap="round" stroke-linejoin="round" />
<path d="M387.7 153.0 C390.8 149.3 388.9 146.2 397.0 141.8 C405.1 137.4 405.1 138.7 411.9 139.9 C418.7 141.1 415.6 138.0 417.5 145.5 C419.4 153.0 417.5 156.7 417.5 162.3" fill="none" stroke="#8aa4c3" stroke-width="3.5" stroke-linecap="round" stroke-linejoin="round" />
<path d="M376.5 141.8 L387.7 153.0" fill="none" stroke="#8aa4c3" stroke-width="3" stroke-linecap="round" stroke-linejoin="round" />
<path d="M600.0 139.9 C609.3 139.3 609.3 141.8 628.0 138.1 C646.7 134.4 637.3 138.0 656.0 128.7 C674.7 119.4 665.4 120.7 684.0 110.1 C702.6 99.5 693.3 101.4 711.9 97.0 C730.5 92.6 721.2 95.1 739.9 97.0 C758.6 98.9 746.1 98.9 767.9 102.6 C789.7 106.3 780.3 107.0 805.2 108.2 C830.1 109.4 820.7 108.2 842.5 106.3 C864.3 104.4 851.3 105.7 870.5 102.6 C889.7 99.5 890.2 98.9 900.0 97.0" fill="none" stroke="#8aa4c3" stroke-width="7" stroke-linecap="round" stroke-linejoin="round" />
<path d="M600.0 145.5 C609.3 146.1 612.5 143.0 628.0 147.4 C643.5 151.8 634.2 148.7 646.6 158.6 C659.0 168.5 652.8 166.6 665.3 177.2 C677.8 187.8 668.5 184.7 684.0 190.3 C699.5 195.9 696.4 194.0 711.9 194.0 C727.4 194.0 718.1 195.9 730.6 190.3 C743.1 184.7 743.1 181.6 749.3 177.2" fill="none" stroke="#8aa4c3" stroke-width="6" stroke-linecap="round" stroke-linejoin="round" />
<path d="M762.3 149.3 C764.2 143.1 761.7 141.2 767.9 130.6 C774.1 120.0 768.6 124.3 781.0 117.5 C793.4 110.7 797.1 112.6 805.2 110.1" fill="none" stroke="#8aa4c3" stroke-width="5" stroke-linecap="round" stroke-linejoin="round" />
<path d="M600.0 177.2 C606.2 172.9 606.3 174.8 618.7 164.2 C631.1 153.6 631.1 151.7 637.3 145.5" fill="none" stroke="#8aa4c3" stroke-width="4" stroke-linecap="round" stroke-linejoin="round" />
<path d="M600.0 184.7 C607.5 179.1 606.9 182.2 622.4 167.9 C637.9 153.6 633.5 154.9 646.6 141.8 C659.7 128.7 656.6 133.1 661.6 128.7" fill="none" stroke="#8aa4c3" stroke-width="3" stroke-linecap="round" stroke-linejoin="round" />
<path d="M800.0 110.1 C812.4 109.5 812.4 110.7 837.3 108.2 C862.2 105.7 849.7 107.0 874.6 102.6 C899.5 98.2 887.0 100.7 911.9 95.1 C936.8 89.5 927.5 90.8 949.3 85.8 C971.1 80.8 958.6 82.7 977.2 80.2 C995.8 77.7 966.0 78.7 1005.2 78.4 C1044.4 78.1 1064.9 79.0 1094.8 79.3" fill="none" stroke="#8aa4c3" stroke-width="8" stroke-linecap="round" stroke-linejoin="round" />
<path d="M990.3 81.0 L1033.2 80.6" fill="none" stroke="#8aa4c3" stroke-width="12.5" stroke-linecap="round" stroke-linejoin="round" />
<path d="M1023.9 80.2 L1061.2 79.5 L1094.8 79.1" fill="none" stroke="#8aa4c3" stroke-width="8" stroke-linecap="round" stroke-linejoin="round" />
<path d="M994.0 76.5 L1031.3 76.9" stroke="#b9cbe0" stroke-width=".8" fill="none"/>
<path d="M994.0 85.4 L1031.3 85.1" stroke="#b9cbe0" stroke-width=".8" fill="none"/>
<path d="M1010.8 74.6 L1016.4 70.9" fill="none" stroke="#8aa4c3" stroke-width="2.4" stroke-linecap="round" stroke-linejoin="round" />
<circle cx="764" cy="114" r="8.5" fill="none" stroke="#8aa4c3" stroke-width="2.8"/>
<path d="M732.5 -1.9 C734.4 11.2 733.8 11.8 738.1 37.3 C742.4 62.8 741.8 49.7 745.5 74.6 C749.2 99.5 746.8 87.0 749.3 111.9 C751.8 136.8 751.1 119.9 753.0 149.3 C754.9 178.7 754.3 183.1 754.9 200.0" fill="none" stroke="#8aa4c3" stroke-width="10.5" stroke-linecap="round" stroke-linejoin="round" />
<path d="M730.6 37.3 C730.0 49.7 732.4 56.6 728.7 74.6 C725.0 92.6 727.5 83.9 719.4 91.4 C711.3 98.9 709.5 95.1 704.5 97.0" fill="none" stroke="#8aa4c3" stroke-width="3.5" stroke-linecap="round" stroke-linejoin="round" />
<path d="M741.8 104.5 C742.4 113.2 741.8 109.5 743.7 130.6 C745.6 151.7 746.2 155.5 747.4 167.9" fill="none" stroke="#8aa4c3" stroke-width="3" stroke-linecap="round" stroke-linejoin="round" />
<path d="M749.3 200.0 C749.9 212.4 749.2 212.4 751.1 237.3 C753.0 262.2 752.4 249.7 754.9 274.6 C757.4 299.5 757.4 287.0 758.6 311.9 C759.8 336.8 759.8 327.5 758.6 349.3 C757.4 371.1 758.0 360.3 754.9 377.2 C751.8 394.1 751.2 392.4 749.3 400.0" fill="none" stroke="#8aa4c3" stroke-width="9" stroke-linecap="round" stroke-linejoin="round" />
<path d="M693.3 200.0 C699.5 201.2 696.4 203.1 711.9 203.7 C727.4 204.3 730.6 202.5 739.9 201.9" fill="none" stroke="#8aa4c3" stroke-width="5" stroke-linecap="round" stroke-linejoin="round" />
<path d="M759.0 196.3 C759.0 206.9 759.6 208.1 759.0 228.0 C758.4 247.9 757.7 246.7 757.1 256.0" fill="none" stroke="#8aa4c3" stroke-width="5" stroke-linecap="round" stroke-linejoin="round" />
<path d="M762.3 149.3 C761.8 158.6 761.9 159.8 760.8 177.2 C759.7 194.6 759.6 193.4 759.0 201.5" fill="none" stroke="#8aa4c3" stroke-width="6" stroke-linecap="round" stroke-linejoin="round" />
<path d="M743.7 130.6 C744.0 143.0 743.4 144.3 744.6 167.9 C745.8 191.5 746.5 190.3 747.4 201.5" fill="none" stroke="#8aa4c3" stroke-width="4" stroke-linecap="round" stroke-linejoin="round" />
<path d="M758.6 300.0 C758.6 312.4 759.8 315.5 758.6 337.3 C757.4 359.1 758.0 349.7 754.9 365.3 C751.8 380.9 756.2 372.2 749.3 384.0 C742.4 395.8 746.8 392.0 734.3 400.7 C721.8 409.4 731.8 405.1 711.9 410.1 C692.0 415.1 699.5 411.4 674.6 415.7 C649.7 420.0 662.2 418.8 637.3 423.1 C612.4 427.4 612.4 426.8 600.0 428.7" fill="none" stroke="#8aa4c3" stroke-width="7.5" stroke-linecap="round" stroke-linejoin="round" />
<path d="M300.0 484.7 C309.3 482.2 309.3 482.2 328.0 477.2 C346.7 472.2 334.2 475.4 356.0 469.8 C377.8 464.2 368.4 466.6 393.3 460.4 C418.2 454.2 408.8 457.3 430.6 451.1 C452.4 444.9 439.9 448.6 458.6 441.8 C477.3 435.0 467.9 436.2 486.6 430.6 C505.3 425.0 496.0 427.5 514.6 425.0 C533.2 422.5 523.9 423.1 542.5 423.1 C561.1 423.1 551.3 423.1 570.5 425.0 C589.7 426.9 590.2 427.5 600.0 428.7" fill="none" stroke="#8aa4c3" stroke-width="7.5" stroke-linecap="round" stroke-linejoin="round" />
<path d="M449.3 460.4 C458.6 454.2 458.6 451.7 477.2 441.8 C495.8 431.9 483.4 435.6 505.2 430.6 C527.0 425.6 530.1 428.1 542.5 426.9" fill="none" stroke="#8aa4c3" stroke-width="4" stroke-linecap="round" stroke-linejoin="round" />
<path d="M523.9 421.3 C536.3 418.2 546.9 413.8 561.2 411.9 C575.5 410.0 566.8 412.6 566.8 415.7 C566.8 418.8 563.1 419.4 561.2 421.3" fill="none" stroke="#8aa4c3" stroke-width="2.5" stroke-linecap="round" stroke-linejoin="round" />
<path d="M600.0 425.0 C615.5 423.1 615.5 423.8 646.6 419.4 C677.7 415.0 665.3 416.3 693.3 411.9 C721.3 407.5 708.8 408.8 730.6 406.3 C752.4 403.8 739.9 404.5 758.6 404.5 C777.3 404.5 764.8 403.8 786.6 406.3 C808.4 408.8 799.0 408.2 823.9 411.9 C848.8 415.6 835.8 415.0 861.2 417.5 C886.6 420.0 887.1 418.8 900.0 419.4" fill="none" stroke="#8aa4c3" stroke-width="8" stroke-linecap="round" stroke-linejoin="round" />
<path d="M764.2 389.6 C771.7 393.3 766.7 393.9 786.6 400.7 C806.5 407.5 811.5 407.0 823.9 410.1" fill="none" stroke="#8aa4c3" stroke-width="4" stroke-linecap="round" stroke-linejoin="round" />
<path d="M730.6 413.8 C736.8 411.9 738.1 414.4 749.3 408.2 C760.5 402.0 758.6 403.8 764.2 395.1 C769.8 386.4 765.4 386.4 766.0 382.1" fill="none" stroke="#8aa4c3" stroke-width="3.5" stroke-linecap="round" stroke-linejoin="round" />
<path d="M693.3 413.8 C702.6 410.7 703.9 412.6 721.3 404.5 C738.7 396.4 734.9 399.6 745.5 389.6 C756.1 379.6 750.5 379.6 753.0 374.6" fill="none" stroke="#8aa4c3" stroke-width="3.5" stroke-linecap="round" stroke-linejoin="round" />
<path d="M738.1 369.0 C739.3 372.1 738.1 374.7 741.8 378.4 C745.5 382.1 745.6 382.7 749.3 380.2 C753.0 377.7 751.8 374.0 753.0 370.9" fill="none" stroke="#8aa4c3" stroke-width="3" stroke-linecap="round" stroke-linejoin="round" />
<ellipse cx="773.5" cy="376.5" rx="9" ry="10" fill="none" stroke="#8aa4c3" stroke-width="2.8"/>
<path d="M800.0 404.5 C812.4 407.6 812.4 408.8 837.3 413.8 C862.2 418.8 837.3 416.6 874.6 419.4 C911.9 422.2 899.5 420.6 949.3 422.2 C999.1 423.8 975.4 422.2 1023.9 424.1 C1072.4 426.0 1071.2 426.6 1094.8 427.8" fill="none" stroke="#8aa4c3" stroke-width="7.5" stroke-linecap="round" stroke-linejoin="round" />
<path d="M921.3 419.4 L964.2 414.7" fill="none" stroke="#8aa4c3" stroke-width="2.5" stroke-linecap="round" stroke-linejoin="round" />
<path d="M992.2 415.7 L1023.9 423.1" fill="none" stroke="#8aa4c3" stroke-width="2.5" stroke-linecap="round" stroke-linejoin="round" />
<path d="M618.7 428.7 L661.6 432.5 L711.9 435.3 L760.4 438.1 L786.6 447.4 L810.8 458.6 L829.5 466.0 L861.2 468.8 L900.0 471.6" fill="none" stroke="#8aa4c3" stroke-width="4" stroke-linecap="round" stroke-linejoin="round" />
<path d="M800.0 451.1 L828.0 466.0 L874.6 469.8 L949.3 475.4 L1023.9 480.0 L1094.8 482.8" fill="none" stroke="#8aa4c3" stroke-width="4" stroke-linecap="round" stroke-linejoin="round" />
<path d="M361.6 250.4 C365.9 253.5 364.0 254.7 374.6 259.7 C385.2 264.7 374.6 263.7 393.3 265.3 C412.0 266.9 405.7 264.4 430.6 264.4 C455.5 264.4 446.1 263.8 467.9 265.3 C489.7 266.8 480.3 266.2 495.9 269.0 C511.5 271.8 505.3 270.0 514.6 273.7 C523.9 277.4 517.1 276.5 523.9 280.2 C530.7 283.9 522.7 284.0 535.1 284.9 C547.5 285.8 539.6 285.8 561.2 283.0 C582.8 280.2 587.1 278.7 600.0 276.5" fill="none" stroke="#8aa4c3" stroke-width="4.2" stroke-linecap="round" stroke-linejoin="round" />
<path d="M449.3 264.4 C461.7 264.7 461.7 265.3 486.6 265.3 C511.5 265.3 499.0 265.3 523.9 264.4 C548.8 263.5 535.8 264.4 561.2 262.5 C586.6 260.6 587.1 260.0 600.0 258.8" fill="none" stroke="#8aa4c3" stroke-width="4" stroke-linecap="round" stroke-linejoin="round" />
<path d="M600.0 256.9 C609.3 256.0 600.6 256.9 628.0 254.1 C655.4 251.3 664.1 250.4 682.1 248.5" fill="none" stroke="#8aa4c3" stroke-width="3.6" stroke-linecap="round" stroke-linejoin="round" />
<path d="M600.0 274.6 C610.6 273.1 603.7 273.7 631.7 270.0 C659.7 266.3 666.6 265.6 684.0 263.4" fill="none" stroke="#8aa4c3" stroke-width="3.6" stroke-linecap="round" stroke-linejoin="round" />
<path d="M600.0 388.4 L637.3 382.8" fill="none" stroke="#8aa4c3" stroke-width="3.6" stroke-linecap="round" stroke-linejoin="round" />
<path d="M600.0 369.8 L618.7 367.9" fill="none" stroke="#8aa4c3" stroke-width="3.6" stroke-linecap="round" stroke-linejoin="round" />
<path d="M600.0 370.0 L618.7 368.1" fill="none" stroke="#8aa4c3" stroke-width="3.6" stroke-linecap="round" stroke-linejoin="round" />
<path d="M600.0 387.7 L641.0 382.1" fill="none" stroke="#8aa4c3" stroke-width="3.6" stroke-linecap="round" stroke-linejoin="round" />
<path d="M572.4 -1.9 C575.5 20.5 575.5 21.1 581.7 65.3 C587.9 109.5 586.0 98.3 591.0 130.6 C596.0 162.9 594.7 151.7 596.6 162.3" fill="none" stroke="#8aa4c3" stroke-width="3.6" stroke-linecap="round" stroke-linejoin="round" />
<path d="M596.6 -1.9 L600.0 18.7" fill="none" stroke="#8aa4c3" stroke-width="3.6" stroke-linecap="round" stroke-linejoin="round" />
<path d="M600.0 14.9 C603.7 41.0 606.8 54.7 611.2 93.3 C615.6 131.9 613.1 95.0 613.1 130.6 C613.1 166.2 611.8 176.9 611.2 200.0" fill="none" stroke="#8aa4c3" stroke-width="3.6" stroke-linecap="round" stroke-linejoin="round" />
<path d="M618.7 167.9 L620.5 200.0" fill="none" stroke="#8aa4c3" stroke-width="3.6" stroke-linecap="round" stroke-linejoin="round" />
<path d="M618.7 200.0 C619.3 218.7 617.4 218.7 620.5 256.0 C623.6 293.3 623.0 277.7 628.0 311.9 C633.0 346.1 630.4 329.2 635.4 358.6 C640.4 388.0 640.4 386.2 642.9 400.0" fill="none" stroke="#8aa4c3" stroke-width="3.7" stroke-linecap="round" stroke-linejoin="round" />
<path d="M601.9 200.0 C603.1 218.7 602.5 218.7 605.6 256.0 C608.7 293.3 606.8 277.7 611.2 311.9 C615.6 346.1 614.3 329.2 618.7 358.6 C623.1 388.0 622.4 386.2 624.3 400.0" fill="none" stroke="#8aa4c3" stroke-width="3.7" stroke-linecap="round" stroke-linejoin="round" />
<path d="M628.0 300.0 C630.5 318.7 630.4 318.7 635.4 356.0 C640.4 393.3 639.2 387.7 642.9 411.9 C646.6 436.1 645.4 423.1 646.6 428.7" fill="none" stroke="#8aa4c3" stroke-width="3.7" stroke-linecap="round" stroke-linejoin="round" />
<path d="M611.2 300.0 C613.7 318.7 613.7 318.7 618.7 356.0 C623.7 393.3 622.4 387.7 626.1 411.9 C629.8 436.1 628.6 423.1 629.9 428.7" fill="none" stroke="#8aa4c3" stroke-width="3.7" stroke-linecap="round" stroke-linejoin="round" />
<path d="M600.0 404.5 C601.9 419.4 600.6 418.2 605.6 449.3 C610.6 480.4 611.8 481.6 614.9 497.8" fill="none" stroke="#8aa4c3" stroke-width="3.7" stroke-linecap="round" stroke-linejoin="round" />
<path d="M596.6 382.1 L600.0 404.5" fill="none" stroke="#8aa4c3" stroke-width="3.7" stroke-linecap="round" stroke-linejoin="round" />
<path d="M704.5 -1.9 C702.0 1.8 700.1 2.4 697.0 9.3 C693.9 16.2 697.0 -9.3 695.1 18.7 C693.2 46.7 693.9 49.8 691.4 93.3 C688.9 136.8 689.6 113.7 687.7 149.3 C685.8 184.9 686.4 183.1 685.8 200.0" fill="none" stroke="#8aa4c3" stroke-width="3.6" stroke-linecap="round" stroke-linejoin="round" />
<path d="M684.9 200.0 C684.6 212.4 683.1 212.4 684.0 237.3 C684.9 262.2 685.8 254.7 687.7 274.6 C689.6 294.5 689.0 289.5 689.6 297.0" fill="none" stroke="#8aa4c3" stroke-width="3.7" stroke-linecap="round" stroke-linejoin="round" />
<filter id="halo" x="-5%" y="-5%" width="110%" height="110%"><feMorphology in="SourceAlpha" operator="dilate" radius="1.1" result="d"/><feGaussianBlur in="d" stdDeviation=".35" result="b"/><feFlood flood-color="#fff" flood-opacity=".9"/><feComposite operator="in" in2="b" result="h"/><feMerge><feMergeNode in="h"/><feMergeNode in="SourceGraphic"/></feMerge></filter>
<g filter="url(#halo)">
<text x="0.5" y="9.8" font-size="13" letter-spacing="0" text-anchor="start" font-weight="700" fill="#2a2c30" stroke="#2a2c30" stroke-width="0">e Cliff</text>
<text x="77.0" y="30.4" font-size="9.3" letter-spacing="0.95" text-anchor="middle" font-weight="400" fill="#1d1f22" stroke="#1d1f22" stroke-width="0.5">GLADDINGTON</text>
<text x="77.0" y="40.2" font-size="9.3" letter-spacing="0.95" text-anchor="middle" font-weight="400" fill="#1d1f22" stroke="#1d1f22" stroke-width="0.5">HEIGHTS</text>
<text x="1.0" y="54.4" font-size="9.3" letter-spacing="0.95" text-anchor="start" font-weight="400" fill="#1d1f22" stroke="#1d1f22" stroke-width="0.5">DDIN CLUB</text>
<text x="0.0" y="77.3" font-size="9.3" letter-spacing="0.95" text-anchor="start" font-weight="400" fill="#1d1f22" stroke="#1d1f22" stroke-width="0.5">MBRIDGE</text>
<text x="0.0" y="87.2" font-size="9.3" letter-spacing="0.95" text-anchor="start" font-weight="400" fill="#1d1f22" stroke="#1d1f22" stroke-width="0.5">K VILLAGE</text>
<text x="200" y="90.5" font-size="12.6" text-anchor="middle" font-weight="400" fill="#26282c" stroke="#26282c" stroke-width=".3">Grandview</text>
<text x="200" y="104.0" font-size="12.6" text-anchor="middle" font-weight="400" fill="#26282c" stroke="#26282c" stroke-width=".3">Heights</text>
<text x="104.0" y="149.3" font-size="9.3" letter-spacing="0.95" text-anchor="middle" font-weight="400" fill="#1d1f22" stroke="#1d1f22" stroke-width="0.5">DUBLIN ROAD</text>
<text x="104.0" y="159.2" font-size="9.3" letter-spacing="0.95" text-anchor="middle" font-weight="400" fill="#1d1f22" stroke="#1d1f22" stroke-width="0.5">CORRIDOR</text>
<text x="152.0" y="176.3" font-size="9.3" letter-spacing="0.95" text-anchor="middle" font-weight="400" fill="#1d1f22" stroke="#1d1f22" stroke-width="0.5">GRANDVIEW</text>
<text x="152.0" y="186.2" font-size="9.3" letter-spacing="0.95" text-anchor="middle" font-weight="400" fill="#1d1f22" stroke="#1d1f22" stroke-width="0.5">SOUTH</text>
<text x="211.5" y="266.4" font-size="9.3" letter-spacing="0.95" text-anchor="middle" font-weight="400" fill="#1d1f22" stroke="#1d1f22" stroke-width="0.5">NORTH</text>
<text x="211.5" y="276.2" font-size="9.3" letter-spacing="0.95" text-anchor="middle" font-weight="400" fill="#1d1f22" stroke="#1d1f22" stroke-width="0.5">FRANKLINTON</text>
<text x="322.0" y="358.4" font-size="9.3" letter-spacing="0.95" text-anchor="middle" font-weight="400" fill="#1d1f22" stroke="#1d1f22" stroke-width="0.5">FRANKLINTON</text>
<text x="4.0" y="401.4" font-size="9.3" letter-spacing="0.95" text-anchor="start" font-weight="400" fill="#1d1f22" stroke="#1d1f22" stroke-width="0.5">WEST</text>
<text x="3.0" y="462.4" font-size="9.3" letter-spacing="0.95" text-anchor="start" font-weight="400" fill="#1d1f22" stroke="#1d1f22" stroke-width="0.5">HILLTOP</text>
<text x="508.0" y="59.4" font-size="9.3" letter-spacing="0.95" text-anchor="middle" font-weight="400" fill="#1d1f22" stroke="#1d1f22" stroke-width="0.5">VICTORIAN</text>
<text x="508.0" y="69.2" font-size="9.3" letter-spacing="0.95" text-anchor="middle" font-weight="400" fill="#1d1f22" stroke="#1d1f22" stroke-width="0.5">VILLAGE</text>
<text x="604.0" y="65.3" font-size="9.3" letter-spacing="0.95" text-anchor="middle" font-weight="400" fill="#1d1f22" stroke="#1d1f22" stroke-width="0.5">ITALIAN VILLAGE</text>
<text x="554.0" y="85.3" font-size="9.3" letter-spacing="0.95" text-anchor="middle" font-weight="400" fill="#1d1f22" stroke="#1d1f22" stroke-width="0.5">SHORT NORTH</text>
<text x="554.0" y="95.2" font-size="9.3" letter-spacing="0.95" text-anchor="middle" font-weight="400" fill="#1d1f22" stroke="#1d1f22" stroke-width="0.5">ARTS DISTRICT</text>
<text x="501.0" y="199.8" font-size="9.3" letter-spacing="0.95" text-anchor="middle" font-weight="400" fill="#1d1f22" stroke="#1d1f22" stroke-width="0.5">FLYTOWN</text>
<text x="455.0" y="242.3" font-size="9.3" letter-spacing="0.95" text-anchor="start" font-weight="400" fill="#1d1f22" stroke="#1d1f22" stroke-width="0.5">ARENA DISTRICT</text>
<text x="588.0" y="289.4" font-size="9.3" letter-spacing="0.95" text-anchor="middle" font-weight="400" fill="#1d1f22" stroke="#1d1f22" stroke-width="0.5">UPTOWN</text>
<text x="588.0" y="299.2" font-size="9.3" letter-spacing="0.95" text-anchor="middle" font-weight="400" fill="#1d1f22" stroke="#1d1f22" stroke-width="0.5">DISTRICT</text>
<text x="613.0" y="312.9" font-size="9.3" letter-spacing="0.95" text-anchor="middle" font-weight="400" fill="#1d1f22" stroke="#1d1f22" stroke-width="0.5">DOWNTOWN</text>
<text x="568.0" y="372.4" font-size="9.3" letter-spacing="0.95" text-anchor="middle" font-weight="400" fill="#1d1f22" stroke="#1d1f22" stroke-width="0.5">RIVER SOUTH</text>
<text x="568.0" y="382.2" font-size="9.3" letter-spacing="0.95" text-anchor="middle" font-weight="400" fill="#1d1f22" stroke="#1d1f22" stroke-width="0.5">DISTRICT</text>
<text x="594.0" y="478.4" font-size="9.3" letter-spacing="0.95" text-anchor="middle" font-weight="400" fill="#1d1f22" stroke="#1d1f22" stroke-width="0.5">BREWERY</text>
<text x="594.0" y="488.2" font-size="9.3" letter-spacing="0.95" text-anchor="middle" font-weight="400" fill="#1d1f22" stroke="#1d1f22" stroke-width="0.5">DISTRICT</text>
<text x="657.0" y="494.9" font-size="9.3" letter-spacing="0.95" text-anchor="middle" font-weight="400" fill="#1d1f22" stroke="#1d1f22" stroke-width="0.5">GERMAN</text>
<text x="723.0" y="497.9" font-size="9.3" letter-spacing="0.95" text-anchor="middle" font-weight="400" fill="#1d1f22" stroke="#1d1f22" stroke-width="0.5">SCHUMACHER</text>
<text x="743.0" y="14.8" font-size="9.3" letter-spacing="0.95" text-anchor="middle" font-weight="400" fill="#1d1f22" stroke="#1d1f22" stroke-width="0.5">MILO-GROGAN</text>
<text x="688.0" y="155.8" font-size="9.3" letter-spacing="0.95" text-anchor="middle" font-weight="400" fill="#1d1f22" stroke="#1d1f22" stroke-width="0.5">FORT HAYES</text>
<text x="878.5" y="61.4" font-size="9.3" letter-spacing="0.95" text-anchor="middle" font-weight="400" fill="#1d1f22" stroke="#1d1f22" stroke-width="0.5">DEVON</text>
<text x="878.5" y="71.2" font-size="9.3" letter-spacing="0.95" text-anchor="middle" font-weight="400" fill="#1d1f22" stroke="#1d1f22" stroke-width="0.5">TRIANGLE</text>
<text x="896.0" y="158.3" font-size="9.3" letter-spacing="0.95" text-anchor="middle" font-weight="400" fill="#1d1f22" stroke="#1d1f22" stroke-width="0.5">MT VERNON</text>
<text x="848.0" y="237.3" font-size="9.3" letter-spacing="0.95" text-anchor="middle" font-weight="400" fill="#1d1f22" stroke="#1d1f22" stroke-width="0.5">KING-LINCOLN</text>
<text x="848.0" y="247.2" font-size="9.3" letter-spacing="0.95" text-anchor="middle" font-weight="400" fill="#1d1f22" stroke="#1d1f22" stroke-width="0.5">BRONZEVILLE</text>
<text x="1007.0" y="167.3" font-size="9.3" letter-spacing="0.95" text-anchor="middle" font-weight="400" fill="#1d1f22" stroke="#1d1f22" stroke-width="0.5">WOODLAND</text>
<text x="1007.0" y="177.2" font-size="9.3" letter-spacing="0.95" text-anchor="middle" font-weight="400" fill="#1d1f22" stroke="#1d1f22" stroke-width="0.5">PARK</text>
<text x="1060.0" y="50.4" font-size="9.3" letter-spacing="0.95" text-anchor="start" font-weight="400" fill="#1d1f22" stroke="#1d1f22" stroke-width="0.5">SHEPA</text>
<text x="1057.0" y="146.8" font-size="9.3" letter-spacing="0.95" text-anchor="start" font-weight="400" fill="#1d1f22" stroke="#1d1f22" stroke-width="0.5">EASTG</text>
<text x="960.0" y="259.9" font-size="9.3" letter-spacing="0.95" text-anchor="middle" font-weight="400" fill="#1d1f22" stroke="#1d1f22" stroke-width="0.5">NEAR EAST SIDE</text>
<text x="974.0" y="313.9" font-size="9.3" letter-spacing="0.95" text-anchor="middle" font-weight="400" fill="#1d1f22" stroke="#1d1f22" stroke-width="0.5">FRANKLIN PARK</text>
<text x="822.0" y="364.4" font-size="9.3" letter-spacing="0.95" text-anchor="middle" font-weight="400" fill="#1d1f22" stroke="#1d1f22" stroke-width="0.5">OLDE</text>
<text x="822.0" y="374.2" font-size="9.3" letter-spacing="0.95" text-anchor="middle" font-weight="400" fill="#1d1f22" stroke="#1d1f22" stroke-width="0.5">TOWNE EAST</text>
<text x="1045.0" y="392.9" font-size="9.3" letter-spacing="0.95" text-anchor="middle" font-weight="400" fill="#1d1f22" stroke="#1d1f22" stroke-width="0.5">SOUTH OF MAIN</text>
<text x="826.0" y="441.4" font-size="9.3" letter-spacing="0.95" text-anchor="middle" font-weight="400" fill="#1d1f22" stroke="#1d1f22" stroke-width="0.5">LIVINGSTON</text>
<text x="826.0" y="451.2" font-size="9.3" letter-spacing="0.95" text-anchor="middle" font-weight="400" fill="#1d1f22" stroke="#1d1f22" stroke-width="0.5">PARK</text>
<text x="904.0" y="444.9" font-size="9.3" letter-spacing="0.95" text-anchor="middle" font-weight="400" fill="#1d1f22" stroke="#1d1f22" stroke-width="0.5">OLD OAKS</text>
<text x="1004.0" y="435.9" font-size="9.3" letter-spacing="0.95" text-anchor="middle" font-weight="400" fill="#1d1f22" stroke="#1d1f22" stroke-width="0.5">GREEN ACRES</text>
<text x="947.0" y="457.4" font-size="9.3" letter-spacing="0.95" text-anchor="middle" font-weight="400" fill="#1d1f22" stroke="#1d1f22" stroke-width="0.5">LIVINGSTON</text>
<text x="947.0" y="467.2" font-size="9.3" letter-spacing="0.95" text-anchor="middle" font-weight="400" fill="#1d1f22" stroke="#1d1f22" stroke-width="0.5">AVENUE AREA</text>
<text x="1031.0" y="476.9" font-size="9.3" letter-spacing="0.95" text-anchor="middle" font-weight="400" fill="#1d1f22" stroke="#1d1f22" stroke-width="0.5">DRIVING PARK</text>
</g>
<text x="162.0" y="20.4" font-size="9.6" text-anchor="middle" fill="#55606b" stroke="#fff" stroke-width="2" stroke-linejoin="round" paint-order="stroke" stroke-opacity="0.8" transform="rotate(-87 162.0 17.0)">Grandview Ave</text>
<text x="196.0" y="11.4" font-size="9.6" text-anchor="middle" fill="#55606b" stroke="#fff" stroke-width="2" stroke-linejoin="round" paint-order="stroke" stroke-opacity="0.8" transform="rotate(68 196.0 8.0)">st Blvd</text>
<text x="309.0" y="129.4" font-size="9.6" text-anchor="middle" fill="#55606b" stroke="#fff" stroke-width="2" stroke-linejoin="round" paint-order="stroke" stroke-opacity="0.8" transform="rotate(68 309.0 126.0)">Northwest Blvd</text>
<text x="429.0" y="94.4" font-size="9.6" text-anchor="middle" fill="#55606b" stroke="#fff" stroke-width="2" stroke-linejoin="round" paint-order="stroke" stroke-opacity="0.8" transform="rotate(-85 429.0 91.0)">Michigan Ave</text>
<text x="507.0" y="0.4" font-size="9.6" text-anchor="middle" fill="#55606b" stroke="#fff" stroke-width="2" stroke-linejoin="round" paint-order="stroke" stroke-opacity="0.8" transform="rotate(2 507.0 -3.0)">W 5th Ave</text>
<text x="624.0" y="9.4" font-size="9.6" text-anchor="middle" fill="#55606b" stroke="#fff" stroke-width="2" stroke-linejoin="round" paint-order="stroke" stroke-opacity="0.8" transform="rotate(3 624.0 6.0)">E 5th Ave</text>
<text x="892.0" y="21.4" font-size="9.6" text-anchor="middle" fill="#55606b" stroke="#fff" stroke-width="2" stroke-linejoin="round" paint-order="stroke" stroke-opacity="0.8" transform="rotate(3 892.0 18.0)">E 5th Ave</text>
<text x="784.0" y="81.4" font-size="9.6" text-anchor="middle" fill="#55606b" stroke="#fff" stroke-width="2" stroke-linejoin="round" paint-order="stroke" stroke-opacity="0.8" transform="rotate(-88 784.0 78.0)">St Clair Ave</text>
<text x="979.0" y="100.4" font-size="9.6" text-anchor="middle" fill="#55606b" stroke="#fff" stroke-width="2" stroke-linejoin="round" paint-order="stroke" stroke-opacity="0.8" transform="rotate(-12 979.0 97.0)">Leonard Ave</text>
<text x="969.0" y="134.4" font-size="9.6" text-anchor="middle" fill="#55606b" stroke="#fff" stroke-width="2" stroke-linejoin="round" paint-order="stroke" stroke-opacity="0.8" transform="rotate(-86 969.0 131.0)">Taylor Ave</text>
<text x="1074.0" y="279.4" font-size="9.6" text-anchor="middle" fill="#55606b" stroke="#fff" stroke-width="2" stroke-linejoin="round" paint-order="stroke" stroke-opacity="0.8" transform="rotate(75 1074.0 276.0)">S Nelson Rd</text>
<text x="181.0" y="295.4" font-size="9.6" text-anchor="middle" fill="#55606b" stroke="#fff" stroke-width="2" stroke-linejoin="round" paint-order="stroke" stroke-opacity="0.8" transform="rotate(4 181.0 292.0)">McKinley Ave</text>
<text x="221.0" y="344.4" font-size="9.6" text-anchor="middle" fill="#55606b" stroke="#fff" stroke-width="2" stroke-linejoin="round" paint-order="stroke" stroke-opacity="0.8" transform="rotate(82 221.0 341.0)">N Central Ave</text>
<text x="374.0" y="300.4" font-size="9.6" text-anchor="middle" fill="#55606b" stroke="#fff" stroke-width="2" stroke-linejoin="round" paint-order="stroke" stroke-opacity="0.8" transform="rotate(-84 374.0 297.0)">N Souder Ave</text>
<text x="315.0" y="443.4" font-size="9.6" text-anchor="middle" fill="#55606b" stroke="#fff" stroke-width="2" stroke-linejoin="round" paint-order="stroke" stroke-opacity="0.8" transform="rotate(82 315.0 440.0)">S Glenwood Ave</text>
<text x="273.0" y="457.4" font-size="9.6" text-anchor="middle" fill="#55606b" stroke="#fff" stroke-width="2" stroke-linejoin="round" paint-order="stroke" stroke-opacity="0.8" transform="rotate(-11 273.0 454.0)">Sullivant Ave</text>
<text x="456.0" y="398.4" font-size="9.6" text-anchor="middle" fill="#55606b" stroke="#fff" stroke-width="2" stroke-linejoin="round" paint-order="stroke" stroke-opacity="0.8" transform="rotate(-8 456.0 395.0)">W Rich St</text>
<text x="539.0" y="268.4" font-size="9.6" text-anchor="middle" fill="#55606b" stroke="#fff" stroke-width="2" stroke-linejoin="round" paint-order="stroke" stroke-opacity="0.8" transform="rotate(-5 539.0 265.0)">W Spring St</text>
<text x="654.0" y="256.4" font-size="9.6" text-anchor="middle" fill="#55606b" stroke="#fff" stroke-width="2" stroke-linejoin="round" paint-order="stroke" stroke-opacity="0.8" transform="rotate(-8 654.0 253.0)">E Spring St</text>
<text x="652.0" y="270.4" font-size="9.6" text-anchor="middle" fill="#55606b" stroke="#fff" stroke-width="2" stroke-linejoin="round" paint-order="stroke" stroke-opacity="0.8" transform="rotate(-8 652.0 267.0)">E Long St</text>
<text x="711.0" y="262.4" font-size="9.6" text-anchor="middle" fill="#55606b" stroke="#fff" stroke-width="2" stroke-linejoin="round" paint-order="stroke" stroke-opacity="0.8" transform="rotate(-6 711.0 259.0)">E Long St</text>
<text x="602.0" y="244.4" font-size="9.6" text-anchor="middle" fill="#55606b" stroke="#fff" stroke-width="2" stroke-linejoin="round" paint-order="stroke" stroke-opacity="0.8" transform="rotate(83 602.0 241.0)">N 3rd St</text>
<text x="626.0" y="284.4" font-size="9.6" text-anchor="middle" fill="#55606b" stroke="#fff" stroke-width="2" stroke-linejoin="round" paint-order="stroke" stroke-opacity="0.8" transform="rotate(83 626.0 281.0)">N 4th St</text>
<text x="590.0" y="343.4" font-size="9.6" text-anchor="middle" fill="#55606b" stroke="#fff" stroke-width="2" stroke-linejoin="round" paint-order="stroke" stroke-opacity="0.8" transform="rotate(83 590.0 340.0)">S High St</text>
<text x="615.0" y="343.4" font-size="9.6" text-anchor="middle" fill="#55606b" stroke="#fff" stroke-width="2" stroke-linejoin="round" paint-order="stroke" stroke-opacity="0.8" transform="rotate(83 615.0 340.0)">S 3rd St</text>
<text x="633.0" y="348.4" font-size="9.6" text-anchor="middle" fill="#55606b" stroke="#fff" stroke-width="2" stroke-linejoin="round" paint-order="stroke" stroke-opacity="0.8" transform="rotate(83 633.0 345.0)">S 4th St</text>
<text x="663.0" y="346.4" font-size="9.6" text-anchor="middle" fill="#55606b" stroke="#fff" stroke-width="2" stroke-linejoin="round" paint-order="stroke" stroke-opacity="0.8" transform="rotate(-7 663.0 343.0)">E Town St</text>
<text x="700.0" y="393.4" font-size="9.6" text-anchor="middle" fill="#55606b" stroke="#fff" stroke-width="2" stroke-linejoin="round" paint-order="stroke" stroke-opacity="0.8" transform="rotate(-7 700.0 390.0)">E Mound St</text>
<text x="796.0" y="336.9" font-size="9.6" text-anchor="middle" fill="#55606b" stroke="#fff" stroke-width="2" stroke-linejoin="round" paint-order="stroke" stroke-opacity="0.8" transform="rotate(2 796.0 333.5)">Bryden Rd</text>
<text x="944.0" y="339.9" font-size="9.6" text-anchor="middle" fill="#55606b" stroke="#fff" stroke-width="2" stroke-linejoin="round" paint-order="stroke" stroke-opacity="0.8" transform="rotate(2 944.0 336.5)">Bryden Rd</text>
<text x="633.0" y="462.4" font-size="9.6" text-anchor="middle" fill="#55606b" stroke="#fff" stroke-width="2" stroke-linejoin="round" paint-order="stroke" stroke-opacity="0.8" transform="rotate(83 633.0 459.0)">S 3rd St</text>
<text x="866.0" y="487.4" font-size="9.6" text-anchor="middle" fill="#55606b" stroke="#fff" stroke-width="2" stroke-linejoin="round" paint-order="stroke" stroke-opacity="0.8" transform="rotate(-88 866.0 484.0)">Ave</text>
<text x="880.0" y="487.4" font-size="9.6" text-anchor="middle" fill="#55606b" stroke="#fff" stroke-width="2" stroke-linejoin="round" paint-order="stroke" stroke-opacity="0.8" transform="rotate(-88 880.0 484.0)">Ave</text>
<text x="946.0" y="489.4" font-size="9.6" text-anchor="middle" fill="#55606b" stroke="#fff" stroke-width="2" stroke-linejoin="round" paint-order="stroke" stroke-opacity="0.8" transform="rotate(-88 946.0 486.0)">Rd</text>
<text x="1091.0" y="352.4" font-size="9.6" text-anchor="middle" fill="#55606b" stroke="#fff" stroke-width="2" stroke-linejoin="round" paint-order="stroke" stroke-opacity="0.8" transform="rotate(82 1091.0 349.0)">S Nels</text>
<text x="32.0" y="232.8" font-size="11" text-anchor="middle" fill="#1a8799" stroke="#a6e2f2" stroke-width="1.2" stroke-linejoin="round" paint-order="stroke" stroke-opacity="0.7" transform="rotate(28 32.0 229.0)">Scioto River</text>
<text x="276.0" y="268.9" font-size="11" text-anchor="middle" fill="#1a8799" stroke="#a6e2f2" stroke-width="1.2" stroke-linejoin="round" paint-order="stroke" stroke-opacity="0.7" transform="rotate(22 276.0 265.0)">Scioto River</text>
<text x="462.0" y="289.9" font-size="11" text-anchor="middle" fill="#1a8799" stroke="#a6e2f2" stroke-width="1.2" stroke-linejoin="round" paint-order="stroke" stroke-opacity="0.7" transform="rotate(4 462.0 286.0)">Scioto River</text>
<text x="490.0" y="425.9" font-size="11" text-anchor="middle" fill="#1a8799" stroke="#a6e2f2" stroke-width="1.2" stroke-linejoin="round" paint-order="stroke" stroke-opacity="0.7" transform="rotate(-38 490.0 422.0)">Scioto River</text>
<path d="M15.0 128.5 q6.0 1.6 12 0 l1.8 2 q-1.6 3.8 0 7.2 q-1 3 -7.8 4.6 q-6.8 -1.6 -7.8 -4.6 q1.6 -3.4 0 -7.2z" fill="#fff" stroke="#6e6e6e" stroke-width=".9"/>
<text x="21" y="138.2" font-size="8.4" text-anchor="middle" fill="#4a4a4a">33</text>
<path d="M490.0 264.5 q6.0 1.6 12 0 l1.8 2 q-1.6 3.8 0 7.2 q-1 3 -7.8 4.6 q-6.8 -1.6 -7.8 -4.6 q1.6 -3.4 0 -7.2z" fill="#fff" stroke="#6e6e6e" stroke-width=".9"/>
<text x="496" y="274.2" font-size="8.4" text-anchor="middle" fill="#4a4a4a">33</text>
<path d="M660.0 426.5 q6.0 1.6 12 0 l1.8 2 q-1.6 3.8 0 7.2 q-1 3 -7.8 4.6 q-6.8 -1.6 -7.8 -4.6 q1.6 -3.4 0 -7.2z" fill="#fff" stroke="#6e6e6e" stroke-width=".9"/>
<text x="666" y="436.2" font-size="8.4" text-anchor="middle" fill="#4a4a4a">33</text>
<path d="M177.0 369.5 q6.0 1.6 12 0 l1.8 2 q-1.6 3.8 0 7.2 q-1 3 -7.8 4.6 q-6.8 -1.6 -7.8 -4.6 q1.6 -3.4 0 -7.2z" fill="#fff" stroke="#6e6e6e" stroke-width=".9"/>
<text x="183" y="379.2" font-size="8.4" text-anchor="middle" fill="#4a4a4a">40</text>
<path d="M425.0 332.5 q6.0 1.6 12 0 l1.8 2 q-1.6 3.8 0 7.2 q-1 3 -7.8 4.6 q-6.8 -1.6 -7.8 -4.6 q1.6 -3.4 0 -7.2z" fill="#fff" stroke="#6e6e6e" stroke-width=".9"/>
<text x="431" y="342.2" font-size="8.4" text-anchor="middle" fill="#4a4a4a">40</text>
<path d="M251.0 401.5 q6.0 1.6 12 0 l1.8 2 q-1.6 3.8 0 7.2 q-1 3 -7.8 4.6 q-6.8 -1.6 -7.8 -4.6 q1.6 -3.4 0 -7.2z" fill="#fff" stroke="#6e6e6e" stroke-width=".9"/>
<text x="257" y="411.2" font-size="8.4" text-anchor="middle" fill="#4a4a4a">62</text>
<path d="M428.0 375.5 q6.0 1.6 12 0 l1.8 2 q-1.6 3.8 0 7.2 q-1 3 -7.8 4.6 q-6.8 -1.6 -7.8 -4.6 q1.6 -3.4 0 -7.2z" fill="#fff" stroke="#6e6e6e" stroke-width=".9"/>
<text x="434" y="385.2" font-size="8.4" text-anchor="middle" fill="#4a4a4a">62</text>
<path d="M549.0 387.5 q6.0 1.6 12 0 l1.8 2 q-1.6 3.8 0 7.2 q-1 3 -7.8 4.6 q-6.8 -1.6 -7.8 -4.6 q1.6 -3.4 0 -7.2z" fill="#fff" stroke="#6e6e6e" stroke-width=".9"/>
<text x="555" y="397.2" font-size="8.4" text-anchor="middle" fill="#4a4a4a">62</text>
<path d="M656.0 294.5 q6.0 1.6 12 0 l1.8 2 q-1.6 3.8 0 7.2 q-1 3 -7.8 4.6 q-6.8 -1.6 -7.8 -4.6 q1.6 -3.4 0 -7.2z" fill="#fff" stroke="#6e6e6e" stroke-width=".9"/>
<text x="662" y="304.2" font-size="8.4" text-anchor="middle" fill="#4a4a4a">62</text>
<path d="M779.0 277.5 q6.0 1.6 12 0 l1.8 2 q-1.6 3.8 0 7.2 q-1 3 -7.8 4.6 q-6.8 -1.6 -7.8 -4.6 q1.6 -3.4 0 -7.2z" fill="#fff" stroke="#6e6e6e" stroke-width=".9"/>
<text x="785" y="287.2" font-size="8.4" text-anchor="middle" fill="#4a4a4a">62</text>
<path d="M1037.0 240.5 q6.0 1.6 12 0 l1.8 2 q-1.6 3.8 0 7.2 q-1 3 -7.8 4.6 q-6.8 -1.6 -7.8 -4.6 q1.6 -3.4 0 -7.2z" fill="#fff" stroke="#6e6e6e" stroke-width=".9"/>
<text x="1043" y="250.2" font-size="8.4" text-anchor="middle" fill="#4a4a4a">62</text>
<path d="M612.0 206.5 q6.0 1.6 12 0 l1.8 2 q-1.6 3.8 0 7.2 q-1 3 -7.8 4.6 q-6.8 -1.6 -7.8 -4.6 q1.6 -3.4 0 -7.2z" fill="#fff" stroke="#6e6e6e" stroke-width=".9"/>
<text x="618" y="216.2" font-size="8.4" text-anchor="middle" fill="#4a4a4a">23</text>
<path d="M600.0 438.5 q6.0 1.6 12 0 l1.8 2 q-1.6 3.8 0 7.2 q-1 3 -7.8 4.6 q-6.8 -1.6 -7.8 -4.6 q1.6 -3.4 0 -7.2z" fill="#fff" stroke="#6e6e6e" stroke-width=".9"/>
<text x="606" y="448.2" font-size="8.4" text-anchor="middle" fill="#4a4a4a">23</text>
<rect x="374.5" y="97.5" width="19" height="13" rx="6" fill="#fff" stroke="#6e6e6e" stroke-width=".9"/>
<text x="384" y="107.2" font-size="8.6" text-anchor="middle" fill="#333">315</text>
<rect x="375.5" y="167.5" width="19" height="13" rx="6" fill="#fff" stroke="#6e6e6e" stroke-width=".9"/>
<text x="385" y="177.2" font-size="8.6" text-anchor="middle" fill="#333">315</text>
<rect x="398.5" y="314.5" width="19" height="13" rx="6" fill="#fff" stroke="#6e6e6e" stroke-width=".9"/>
<text x="408" y="324.2" font-size="8.6" text-anchor="middle" fill="#333">315</text>
<rect x="677.0" y="213.5" width="14" height="13" rx="6" fill="#fff" stroke="#6e6e6e" stroke-width=".9"/>
<text x="684" y="223.2" font-size="8.6" text-anchor="middle" fill="#333">3</text>
<rect x="354.5" y="-8.5" width="19" height="13" rx="6" fill="#fff" stroke="#6e6e6e" stroke-width=".9"/>
<text x="364" y="1.2000000000000002" font-size="8.6" text-anchor="middle" fill="#333">315</text>
<path d="M508.5 172.4 h17 c.4 5 -2.4 8.6 -8.5 10.6 c-6.1 -2 -8.9 -5.6 -8.5 -10.6z" fill="#3d70c9"/>
<path d="M509.1 169.6 q4.25 1 7.9 -.4 q4.25 1.4 7.9 .4 l.3 2.6 h-16.4z" fill="#d9544c"/>
<rect x="508.5" y="172.1" width="17" height=".9" fill="#fff"/>
<text x="517" y="179.9" font-size="8" text-anchor="middle" fill="#fff" font-weight="700">670</text>
<path d="M125.5 227.4 h17 c.4 5 -2.4 8.6 -8.5 10.6 c-6.1 -2 -8.9 -5.6 -8.5 -10.6z" fill="#3d70c9"/>
<path d="M126.1 224.6 q4.25 1 7.9 -.4 q4.25 1.4 7.9 .4 l.3 2.6 h-16.4z" fill="#d9544c"/>
<rect x="125.5" y="227.1" width="17" height=".9" fill="#fff"/>
<text x="134" y="234.9" font-size="8" text-anchor="middle" fill="#fff" font-weight="700">670</text>
<path d="M335.5 261.4 h17 c.4 5 -2.4 8.6 -8.5 10.6 c-6.1 -2 -8.9 -5.6 -8.5 -10.6z" fill="#3d70c9"/>
<path d="M336.1 258.6 q4.25 1 7.9 -.4 q4.25 1.4 7.9 .4 l.3 2.6 h-16.4z" fill="#d9544c"/>
<rect x="335.5" y="261.1" width="17" height=".9" fill="#fff"/>
<text x="344" y="268.9" font-size="8" text-anchor="middle" fill="#fff" font-weight="700">670</text>
<path d="M750.5 149.4 h17 c.4 5 -2.4 8.6 -8.5 10.6 c-6.1 -2 -8.9 -5.6 -8.5 -10.6z" fill="#3d70c9"/>
<path d="M751.1 146.6 q4.25 1 7.9 -.4 q4.25 1.4 7.9 .4 l.3 2.6 h-16.4z" fill="#d9544c"/>
<rect x="750.5" y="149.1" width="17" height=".9" fill="#fff"/>
<text x="759" y="156.9" font-size="8" text-anchor="middle" fill="#fff" font-weight="700">670</text>
<path d="M864.5 100.4 h17 c.4 5 -2.4 8.6 -8.5 10.6 c-6.1 -2 -8.9 -5.6 -8.5 -10.6z" fill="#3d70c9"/>
<path d="M865.1 97.6 q4.25 1 7.9 -.4 q4.25 1.4 7.9 .4 l.3 2.6 h-16.4z" fill="#d9544c"/>
<rect x="864.5" y="100.1" width="17" height=".9" fill="#fff"/>
<text x="873" y="107.9" font-size="8" text-anchor="middle" fill="#fff" font-weight="700">670</text>
<path d="M970.5 79.4 h17 c.4 5 -2.4 8.6 -8.5 10.6 c-6.1 -2 -8.9 -5.6 -8.5 -10.6z" fill="#3d70c9"/>
<path d="M971.1 76.6 q4.25 1 7.9 -.4 q4.25 1.4 7.9 .4 l.3 2.6 h-16.4z" fill="#d9544c"/>
<rect x="970.5" y="79.1" width="17" height=".9" fill="#fff"/>
<text x="979" y="86.9" font-size="8" text-anchor="middle" fill="#fff" font-weight="700">670</text>
<path d="M728.7 21.4 h12.6 c.4 5 -2.4 8.6 -6.3 10.6 c-3.9 -2 -6.7 -5.6 -6.3 -10.6z" fill="#3d70c9"/>
<path d="M729.3000000000001 18.6 q3.15 1 5.7 -.4 q3.15 1.4 5.7 .4 l.3 2.6 h-12.0z" fill="#d9544c"/>
<rect x="728.7" y="21.1" width="12.6" height=".9" fill="#fff"/>
<text x="735" y="28.9" font-size="8" text-anchor="middle" fill="#fff" font-weight="700">71</text>
<path d="M743.7 249.4 h12.6 c.4 5 -2.4 8.6 -6.3 10.6 c-3.9 -2 -6.7 -5.6 -6.3 -10.6z" fill="#3d70c9"/>
<path d="M744.3000000000001 246.6 q3.15 1 5.7 -.4 q3.15 1.4 5.7 .4 l.3 2.6 h-12.0z" fill="#d9544c"/>
<rect x="743.7" y="249.1" width="12.6" height=".9" fill="#fff"/>
<text x="750" y="256.9" font-size="8" text-anchor="middle" fill="#fff" font-weight="700">71</text>
<path d="M135.7 352.4 h12.6 c.4 5 -2.4 8.6 -6.3 10.6 c-3.9 -2 -6.7 -5.6 -6.3 -10.6z" fill="#3d70c9"/>
<path d="M136.29999999999998 349.6 q3.15 1 5.7 -.4 q3.15 1.4 5.7 .4 l.3 2.6 h-12.0z" fill="#d9544c"/>
<rect x="135.7" y="352.1" width="12.6" height=".9" fill="#fff"/>
<text x="142" y="359.9" font-size="8" text-anchor="middle" fill="#fff" font-weight="700">70</text>
<path d="M335.7 471.4 h12.6 c.4 5 -2.4 8.6 -6.3 10.6 c-3.9 -2 -6.7 -5.6 -6.3 -10.6z" fill="#3d70c9"/>
<path d="M336.3 468.6 q3.15 1 5.7 -.4 q3.15 1.4 5.7 .4 l.3 2.6 h-12.0z" fill="#d9544c"/>
<rect x="335.7" y="471.1" width="12.6" height=".9" fill="#fff"/>
<text x="342" y="478.9" font-size="8" text-anchor="middle" fill="#fff" font-weight="700">70</text>
<path d="M435.7 458.4 h12.6 c.4 5 -2.4 8.6 -6.3 10.6 c-3.9 -2 -6.7 -5.6 -6.3 -10.6z" fill="#3d70c9"/>
<path d="M436.3 455.6 q3.15 1 5.7 -.4 q3.15 1.4 5.7 .4 l.3 2.6 h-12.0z" fill="#d9544c"/>
<rect x="435.7" y="458.1" width="12.6" height=".9" fill="#fff"/>
<text x="442" y="465.9" font-size="8" text-anchor="middle" fill="#fff" font-weight="700">70</text>
<path d="M556.7 424.4 h12.6 c.4 5 -2.4 8.6 -6.3 10.6 c-3.9 -2 -6.7 -5.6 -6.3 -10.6z" fill="#3d70c9"/>
<path d="M557.3000000000001 421.6 q3.15 1 5.7 -.4 q3.15 1.4 5.7 .4 l.3 2.6 h-12.0z" fill="#d9544c"/>
<rect x="556.7" y="424.1" width="12.6" height=".9" fill="#fff"/>
<text x="563" y="431.9" font-size="8" text-anchor="middle" fill="#fff" font-weight="700">71</text>
<path d="M875.7 413.4 h12.6 c.4 5 -2.4 8.6 -6.3 10.6 c-3.9 -2 -6.7 -5.6 -6.3 -10.6z" fill="#3d70c9"/>
<path d="M876.3000000000001 410.6 q3.15 1 5.7 -.4 q3.15 1.4 5.7 .4 l.3 2.6 h-12.0z" fill="#d9544c"/>
<rect x="875.7" y="413.1" width="12.6" height=".9" fill="#fff"/>
<text x="882" y="420.9" font-size="8" text-anchor="middle" fill="#fff" font-weight="700">70</text>
<path d="M1045.7 422.4 h12.6 c.4 5 -2.4 8.6 -6.3 10.6 c-3.9 -2 -6.7 -5.6 -6.3 -10.6z" fill="#3d70c9"/>
<path d="M1046.3 419.6 q3.15 1 5.7 -.4 q3.15 1.4 5.7 .4 l.3 2.6 h-12.0z" fill="#d9544c"/>
<rect x="1045.7" y="422.1" width="12.6" height=".9" fill="#fff"/>
<text x="1052" y="429.9" font-size="8" text-anchor="middle" fill="#fff" font-weight="700">70</text>
<path d="M546.5 246.5 C544.5 239.5 535.9 235.5 535.9 227.9 a10.6 10.6 0 1 1 21.2 0 C557.1 235.5 548.5 239.5 546.5 246.5z" fill="#ea4335"/>
<circle cx="546.5" cy="227.9" r="3.8" fill="#b31412"/>
<text x="5" y="490.5" font-size="14.6" font-weight="700" letter-spacing="-.5" fill="#fff" stroke="#5f6368" stroke-width="2" paint-order="stroke" stroke-linejoin="round" opacity=".95">Google</text>
<rect x="990" y="482" width="103" height="13" fill="#f5f5f5" opacity=".7"/>
<text x="1091" y="491.8" font-size="8.9" text-anchor="end" fill="#444">Map data ©2025 Google</text>
</svg>
</div>
<div class="hl"></div>
<div class="btn">UPDATE LOCATION</div>
</body>
</html>
